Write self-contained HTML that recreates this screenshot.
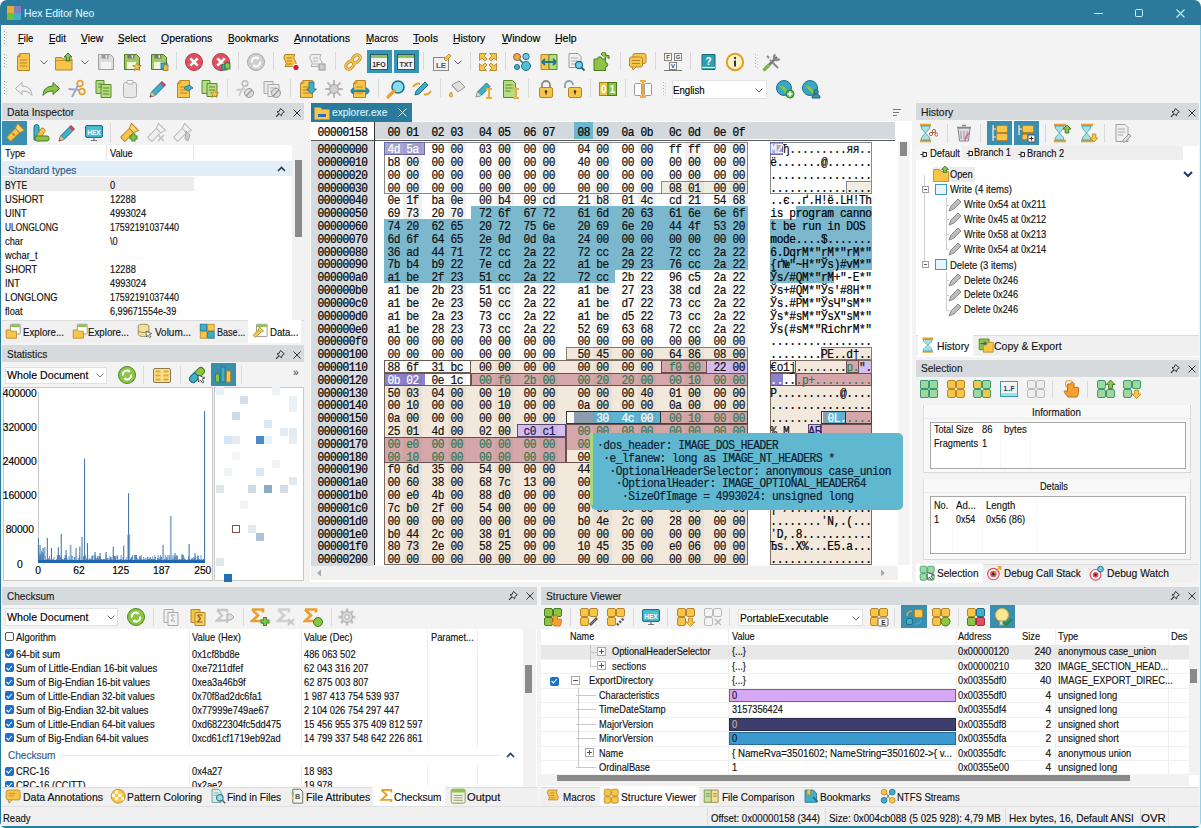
<!DOCTYPE html><html><head><meta charset="utf-8"><style>
*{margin:0;padding:0;box-sizing:border-box}
html{width:1201px;height:828px;overflow:hidden;background:#ffffff}
body{width:1201px;height:828px;overflow:hidden;background:#f3f3f3;position:relative;font-family:"Liberation Sans",sans-serif;border-radius:7px 7px 6px 6px}
.a{position:absolute}
.t{position:absolute;white-space:pre;line-height:14px;font-family:"Liberation Sans",sans-serif;letter-spacing:-0.25px;transform-origin:0 0;-webkit-text-stroke:0.15px currentColor}
.m{position:absolute;white-space:pre;line-height:13px;font-family:"Liberation Mono",monospace;font-size:11.2px;letter-spacing:-0.46px;-webkit-text-stroke:0.2px currentColor;transform:scaleY(1.08);transform-origin:0 0}
</style></head><body><div class="a" style="left:0px;top:0px;width:1201px;height:25px;background:#2c7a9b;"></div>
<div class="a" style="left:7px;top:6px;width:7px;height:7px;background:#e8a935;"></div>
<div class="a" style="left:7px;top:13px;width:7px;height:7px;background:#6ebf3a;"></div>
<div class="a" style="left:14px;top:6px;width:7px;height:7px;background:#7f7fc0;"></div>
<div class="a" style="left:14px;top:13px;width:7px;height:7px;background:#3bb0c8;"></div>
<div class="t" style="left:24px;top:5.50px;font-size:11.6px;color:#d6f3ff;letter-spacing:0;transform:scaleX(0.8932);">Hex Editor Neo</div>
<div class="a" style="left:1094px;top:12.5px;width:9px;height:1.2px;background:#c8f0ff;"></div>
<div class="a" style="left:1135.2px;top:8.8px;width:8.2px;height:8.2px;border:1.3px solid #c8f0ff;border-radius:1.5px"></div>
<svg class="a" style="left:1175.5px;top:8.5px" width="9" height="9"><path d="M0.5 0.5L8.5 8.5M8.5 0.5L0.5 8.5" stroke="#c8f0ff" stroke-width="1.1"/></svg>
<div class="a" style="left:0px;top:25px;width:1px;height:803px;background:#2c7a9b;"></div>
<div class="a" style="left:1200px;top:25px;width:1px;height:803px;background:#8fd3ea;"></div>
<div class="a" style="left:0px;top:826px;width:1201px;height:2px;background:#2c7a9b;"></div>
<div class="a" style="left:1px;top:25px;width:1199px;height:1px;background:#ffffff;"></div>
<div class="t" style="left:18px;top:31.00px;font-size:10.8px;color:#000;letter-spacing:0;transform:scaleX(0.8792);">File</div>
<div class="a" style="left:18px;top:42.5px;width:6px;height:1px;background:#000;"></div>
<div class="t" style="left:49px;top:31.00px;font-size:10.8px;color:#000;letter-spacing:0;transform:scaleX(0.9135);">Edit</div>
<div class="a" style="left:49px;top:42.5px;width:6px;height:1px;background:#000;"></div>
<div class="t" style="left:81px;top:31.00px;font-size:10.8px;color:#000;letter-spacing:0;transform:scaleX(0.9607);">View</div>
<div class="a" style="left:81px;top:42.5px;width:6px;height:1px;background:#000;"></div>
<div class="t" style="left:118px;top:31.00px;font-size:10.8px;color:#000;letter-spacing:0;transform:scaleX(0.9229);">Select</div>
<div class="a" style="left:118px;top:42.5px;width:6px;height:1px;background:#000;"></div>
<div class="t" style="left:161px;top:31.00px;font-size:10.8px;color:#000;letter-spacing:0;transform:scaleX(0.9711);">Operations</div>
<div class="a" style="left:161px;top:42.5px;width:6px;height:1px;background:#000;"></div>
<div class="t" style="left:227.5px;top:31.00px;font-size:10.8px;color:#000;letter-spacing:0;transform:scaleX(0.9368);">Bookmarks</div>
<div class="a" style="left:227.5px;top:42.5px;width:6px;height:1px;background:#000;"></div>
<div class="t" style="left:294px;top:31.00px;font-size:10.8px;color:#000;letter-spacing:0;transform:scaleX(0.9818);">Annotations</div>
<div class="a" style="left:294px;top:42.5px;width:6px;height:1px;background:#000;"></div>
<div class="t" style="left:365.5px;top:31.00px;font-size:10.8px;color:#000;letter-spacing:0;transform:scaleX(0.9123);">Macros</div>
<div class="a" style="left:365.5px;top:42.5px;width:6px;height:1px;background:#000;"></div>
<div class="t" style="left:413px;top:31.00px;font-size:10.8px;color:#000;letter-spacing:0;transform:scaleX(0.9916);">Tools</div>
<div class="a" style="left:413px;top:42.5px;width:6px;height:1px;background:#000;"></div>
<div class="t" style="left:453px;top:31.00px;font-size:10.8px;color:#000;letter-spacing:0;transform:scaleX(0.9613);">History</div>
<div class="a" style="left:453px;top:42.5px;width:6px;height:1px;background:#000;"></div>
<div class="t" style="left:501.5px;top:31.00px;font-size:10.8px;color:#000;letter-spacing:0;transform:scaleX(0.9971);">Window</div>
<div class="a" style="left:501.5px;top:42.5px;width:6px;height:1px;background:#000;"></div>
<div class="t" style="left:555px;top:31.00px;font-size:10.8px;color:#000;letter-spacing:0;transform:scaleX(0.9770);">Help</div>
<div class="a" style="left:555px;top:42.5px;width:6px;height:1px;background:#000;"></div>
<div class="a" style="left:4px;top:31px;width:1px;height:1px;background:#a0a0a0;"></div>
<div class="a" style="left:6px;top:32px;width:1px;height:1px;background:#c8c8c8;"></div>
<div class="a" style="left:4px;top:34px;width:1px;height:1px;background:#a0a0a0;"></div>
<div class="a" style="left:6px;top:35px;width:1px;height:1px;background:#c8c8c8;"></div>
<div class="a" style="left:4px;top:37px;width:1px;height:1px;background:#a0a0a0;"></div>
<div class="a" style="left:6px;top:38px;width:1px;height:1px;background:#c8c8c8;"></div>
<div class="a" style="left:4px;top:40px;width:1px;height:1px;background:#a0a0a0;"></div>
<div class="a" style="left:6px;top:41px;width:1px;height:1px;background:#c8c8c8;"></div>
<div class="a" style="left:4px;top:43px;width:1px;height:1px;background:#a0a0a0;"></div>
<div class="a" style="left:6px;top:44px;width:1px;height:1px;background:#c8c8c8;"></div>
<div class="a" style="left:4px;top:54px;width:1px;height:1px;background:#a0a0a0;"></div>
<div class="a" style="left:6px;top:55px;width:1px;height:1px;background:#c8c8c8;"></div>
<div class="a" style="left:4px;top:57px;width:1px;height:1px;background:#a0a0a0;"></div>
<div class="a" style="left:6px;top:58px;width:1px;height:1px;background:#c8c8c8;"></div>
<div class="a" style="left:4px;top:60px;width:1px;height:1px;background:#a0a0a0;"></div>
<div class="a" style="left:6px;top:61px;width:1px;height:1px;background:#c8c8c8;"></div>
<div class="a" style="left:4px;top:63px;width:1px;height:1px;background:#a0a0a0;"></div>
<div class="a" style="left:6px;top:64px;width:1px;height:1px;background:#c8c8c8;"></div>
<div class="a" style="left:4px;top:66px;width:1px;height:1px;background:#a0a0a0;"></div>
<div class="a" style="left:6px;top:67px;width:1px;height:1px;background:#c8c8c8;"></div>
<div class="a" style="left:4px;top:81px;width:1px;height:1px;background:#a0a0a0;"></div>
<div class="a" style="left:6px;top:82px;width:1px;height:1px;background:#c8c8c8;"></div>
<div class="a" style="left:4px;top:84px;width:1px;height:1px;background:#a0a0a0;"></div>
<div class="a" style="left:6px;top:85px;width:1px;height:1px;background:#c8c8c8;"></div>
<div class="a" style="left:4px;top:87px;width:1px;height:1px;background:#a0a0a0;"></div>
<div class="a" style="left:6px;top:88px;width:1px;height:1px;background:#c8c8c8;"></div>
<div class="a" style="left:4px;top:90px;width:1px;height:1px;background:#a0a0a0;"></div>
<div class="a" style="left:6px;top:91px;width:1px;height:1px;background:#c8c8c8;"></div>
<div class="a" style="left:4px;top:93px;width:1px;height:1px;background:#a0a0a0;"></div>
<div class="a" style="left:6px;top:94px;width:1px;height:1px;background:#c8c8c8;"></div>
<svg class="a" style="left:14px;top:52px" width="20.0" height="20.0" viewBox="0 0 20 20"><path d="M6 1.5h9.5v17h-12v-14z" fill="#f7c548" stroke="#b8862a" stroke-linejoin="round"/><path d="M3.5 4.5h2.5v-3" fill="none" stroke="#b8862a"/><path d="M6 8h7M6 11h7M6 14h7" stroke="#b8862a" stroke-width="1.1"/></svg>
<svg class="a" style="left:40px;top:60px" width="8" height="5"><path d="M0.5 0.5L4 4L7.5 0.5" stroke="#666" fill="none"/></svg>
<svg class="a" style="left:54px;top:52px" width="20.0" height="20.0" viewBox="0 0 20 20"><path d="M1.5 5.5h6l1.5 1.5h9v11h-16.5z" fill="#f7c548" stroke="#b8862a" stroke-linejoin="round"/><path d="M1.5 8.5h16.5" stroke="#b8862a" stroke-width="0.8"/><path d="M14 1l4 4h-2.3v4h-3.4v-4h-2.3z" fill="#8cc45a" stroke="#2f6a20" stroke-width="0.9"/></svg>
<svg class="a" style="left:80.5px;top:60px" width="8" height="5"><path d="M0.5 0.5L4 4L7.5 0.5" stroke="#666" fill="none"/></svg>
<svg class="a" style="left:95.5px;top:52px" width="20.0" height="20.0" viewBox="0 0 20 20"><path d="M2.5 2.5h12l3 3v12h-15z" fill="#dcdcdc" stroke="#a0a0a0" stroke-linejoin="round"/><rect x="5.5" y="2.5" width="7" height="4" fill="#9a9a9a"/><rect x="9.5" y="3.2" width="1.6" height="2.6" fill="#eee"/><rect x="5" y="10" width="10" height="7" fill="#f4f4f4"/></svg>
<svg class="a" style="left:122px;top:52px" width="20.0" height="20.0" viewBox="0 0 20 20"><path d="M2.5 2.5h12l3 3v12h-15z" fill="#9ccc5a" stroke="#4f7a2c" stroke-linejoin="round"/><rect x="5.5" y="2.5" width="7" height="4" fill="#777"/><rect x="9.5" y="3.2" width="1.6" height="2.6" fill="#eee"/><rect x="5" y="10" width="10" height="7" fill="#eef6e0"/><polygon points="15.0,10.5 13.8,13.4 10.7,13.6 13.1,15.6 12.4,18.6 15.0,17.0 17.6,18.6 16.9,15.6 19.3,13.6 16.2,13.4" fill="#f7c548" stroke="#b8862a" stroke-width="0.8"/></svg>
<svg class="a" style="left:149px;top:52px" width="20.0" height="20.0" viewBox="0 0 20 20"><path d="M2.5 2.5h12l3 3v12h-15z" fill="#9ccc5a" stroke="#4f7a2c" stroke-linejoin="round"/><rect x="5.5" y="2.5" width="7" height="4" fill="#777"/><rect x="9.5" y="3.2" width="1.6" height="2.6" fill="#eee"/><rect x="5" y="10" width="10" height="7" fill="#eef6e0"/><rect x="12" y="11" width="6" height="6" fill="#3fb0c8" stroke="#1f6f8a" stroke-width="0.8"/><rect x="14.5" y="13" width="4.5" height="5.5" fill="#e8c040" stroke="#a07020" stroke-width="0.8"/></svg>
<div class="a" style="left:175.5px;top:52px;width:1px;height:18px;background:#d8d8d8;"></div>
<svg class="a" style="left:184px;top:52px" width="20.0" height="20.0" viewBox="0 0 20 20"><circle cx="10" cy="10" r="8.5" fill="#e0505e" stroke="#b83848"/><path d="M6.3 6.3l7.4 7.4M13.7 6.3l-7.4 7.4" stroke="#fff" stroke-width="2.6"/></svg>
<svg class="a" style="left:210.5px;top:52px" width="20.0" height="20.0" viewBox="0 0 20 20"><circle cx="10" cy="10" r="8.5" fill="#e0505e" stroke="#b83848"/><path d="M6.3 6.3l7.4 7.4M13.7 6.3l-7.4 7.4" stroke="#fff" stroke-width="2.6"/><rect x="11" y="12" width="5" height="6" fill="#3fb0a0" stroke="#1f6f60" stroke-width="0.8"/><rect x="14" y="11" width="5" height="6" fill="#8cc45a" stroke="#2f6a20" stroke-width="0.8"/></svg>
<div class="a" style="left:237.5px;top:52px;width:1px;height:18px;background:#d8d8d8;"></div>
<svg class="a" style="left:246px;top:52px" width="20.0" height="20.0" viewBox="0 0 20 20"><circle cx="10" cy="10" r="8.5" fill="#cfcfcf" stroke="#a8a8a8"/><path d="M6 10.5a4 4 0 0 1 6.5-4M14 9.5a4 4 0 0 1-6.5 4" stroke="#fff" stroke-width="2" fill="none"/><path d="M12 4.5l1.5 2.5-3 .5zM8 15.5l-1.5-2.5 3-.5z" fill="#fff"/></svg>
<div class="a" style="left:273px;top:52px;width:1px;height:18px;background:#d8d8d8;"></div>
<svg class="a" style="left:281px;top:52px" width="20.0" height="20.0" viewBox="0 0 20 20"><path d="M4 2.5h10c-1.5 2-1.5 4 0 6s1.5 4 0 6h-10c1.5-2 1.5-4 0-6s-1.5-4 0-6z" fill="#f7c548" stroke="#b8862a"/><path d="M6 6h5M6 9h5M6 12h5" stroke="#b8862a"/><circle cx="15" cy="15.5" r="3.2" fill="#d02030" stroke="#fff"/></svg>
<svg class="a" style="left:307px;top:52px" width="20.0" height="20.0" viewBox="0 0 20 20"><path d="M4 2.5h10c-1.5 2-1.5 4 0 6s1.5 4 0 6h-10c1.5-2 1.5-4 0-6s-1.5-4 0-6z" fill="#eee" stroke="#b0b0b0"/><path d="M6 6h5M6 9h5M6 12h5" stroke="#b8b8b8"/><rect x="12" y="12" width="6" height="6" fill="#ccc" stroke="#999"/></svg>
<div class="a" style="left:335px;top:52px;width:1px;height:18px;background:#d8d8d8;"></div>
<svg class="a" style="left:342.5px;top:52px" width="20.0" height="20.0" viewBox="0 0 20 20"><g transform="rotate(-45 10 10)"><rect x="1" y="7" width="9" height="6" rx="3" fill="none" stroke="#b8862a" stroke-width="3"/><rect x="10" y="7" width="9" height="6" rx="3" fill="none" stroke="#b8862a" stroke-width="3"/><rect x="1" y="7" width="9" height="6" rx="3" fill="none" stroke="#f7c548" stroke-width="1.6"/><rect x="10" y="7" width="9" height="6" rx="3" fill="none" stroke="#f7c548" stroke-width="1.6"/></g></svg>
<div class="a" style="left:366.5px;top:50px;width:25px;height:23px;background:#3794b4;"></div>
<div class="a" style="left:393.5px;top:50px;width:25.5px;height:23px;background:#3794b4;"></div>
<svg class="a" style="left:369px;top:52px" width="20.0" height="20.0" viewBox="0 0 20 20"><rect x="1.5" y="2.5" width="17" height="15" fill="#f4f4f4" stroke="#2a5a6a"/><rect x="2" y="3" width="16" height="3" fill="#8cc45a"/><text x="10" y="14.5" font-size="7" font-family="Liberation Sans" font-weight="bold" fill="#333" text-anchor="middle">1FO</text></svg>
<svg class="a" style="left:396px;top:52px" width="20.0" height="20.0" viewBox="0 0 20 20"><rect x="1.5" y="2.5" width="17" height="15" fill="#f4f4f4" stroke="#2a5a6a"/><rect x="2" y="3" width="16" height="3" fill="#8cc45a"/><text x="10" y="14.5" font-size="7" font-family="Liberation Sans" font-weight="bold" fill="#333" text-anchor="middle">TXT</text></svg>
<div class="a" style="left:423px;top:52px;width:1px;height:18px;background:#d8d8d8;"></div>
<svg class="a" style="left:431.5px;top:52px" width="20.0" height="20.0" viewBox="0 0 20 20"><rect x="1.5" y="5.5" width="15" height="13" fill="#f2f2f2" stroke="#8a8a8a"/><text x="9" y="15.5" font-size="8" font-family="Liberation Sans" font-weight="bold" fill="#555" text-anchor="middle">LE</text><path d="M12 7l5-5 2 2-5 5z" fill="#f7c548" stroke="#b8862a" stroke-width="0.8"/></svg>
<svg class="a" style="left:454px;top:60px" width="8" height="5"><path d="M0.5 0.5L4 4L7.5 0.5" stroke="#666" fill="none"/></svg>
<div class="a" style="left:470px;top:52px;width:1px;height:18px;background:#d8d8d8;"></div>
<svg class="a" style="left:477.5px;top:52px" width="20.0" height="20.0" viewBox="0 0 20 20"><g fill="#f7c548" stroke="#b8862a" stroke-width="0.9"><path d="M1.5 1.5h7l-2.5 2.5 3 3-2 2-3-3-2.5 2.5z"/><path d="M18.5 1.5v7l-2.5-2.5-3 3-2-2 3-3-2.5-2.5z"/><path d="M1.5 18.5v-7l2.5 2.5 3-3 2 2-3 3 2.5 2.5z"/><path d="M18.5 18.5h-7l2.5-2.5-3-3 2-2 3 3 2.5-2.5z"/></g></svg>
<div class="a" style="left:505px;top:52px;width:1px;height:18px;background:#d8d8d8;"></div>
<svg class="a" style="left:512px;top:52px" width="20.0" height="20.0" viewBox="0 0 20 20"><path d="M5 5l10 10" stroke="#1f6f8a" stroke-width="1.6"/><circle cx="5" cy="5" r="3.5" fill="#f0a850" stroke="#a06020"/><circle cx="14" cy="4.5" r="3.2" fill="#70c8e0" stroke="#1f6f8a"/><circle cx="14" cy="14" r="4.5" fill="#50c0d8" stroke="#1f6f8a"/><circle cx="5" cy="15" r="2.5" fill="#3fb0c8" stroke="#1f6f8a"/></svg>
<svg class="a" style="left:539px;top:52px" width="20.0" height="20.0" viewBox="0 0 20 20"><path d="M2 2.5h8v15h-8z" fill="#f7c548" stroke="#b8862a"/><path d="M10 2.5h8v15h-8z" fill="#b8dc80" stroke="#5a8a30"/><path d="M3 10h14M3 10l3-3M3 10l3 3M17 10l-3-3M17 10l-3 3" stroke="#1f7a8a" stroke-width="1.8" fill="none"/></svg>
<svg class="a" style="left:566px;top:52px" width="20.0" height="20.0" viewBox="0 0 20 20"><path d="M3 1.5h9l3 3v11h-12z" fill="#f0f0f0" stroke="#9a9a9a"/><path d="M5 6h7M5 9h7M5 12h4" stroke="#aaa"/><circle cx="13" cy="13" r="3.5" fill="#70d0e8" stroke="#1f6f8a" stroke-width="1.3"/><path d="M15.5 15.5l3 3" stroke="#555" stroke-width="1.8"/></svg>
<svg class="a" style="left:592px;top:52px" width="20.0" height="20.0" viewBox="0 0 20 20"><path d="M2 7h3.5a2.2 2.2 0 1 1 4.4 0h3.6v3.5a2.2 2.2 0 1 1 0 4.4v3.6h-11.5zM13.5 7v-3.5h-3.5" fill="#8cc445" stroke="#4a7a20"/><path d="M10 3.5a2.2 2.2 0 1 1 3.5 0h3.5v3.5" fill="#8cc445" stroke="#4a7a20"/></svg>
<div class="a" style="left:620px;top:52px;width:1px;height:18px;background:#d8d8d8;"></div>
<svg class="a" style="left:628px;top:52px" width="20.0" height="20.0" viewBox="0 0 20 20"><rect x="5" y="1.5" width="13" height="10" rx="2" fill="#f7c548" stroke="#b8862a"/><rect x="1.5" y="5" width="13" height="10" rx="2" fill="#f7c548" stroke="#b8862a"/><path d="M4 15l1 3 3-3" fill="#f7c548" stroke="#b8862a"/><path d="M4 8.5h8M4 11.5h8" stroke="#b8862a"/></svg>
<div class="a" style="left:655px;top:52px;width:1px;height:18px;background:#d8d8d8;"></div>
<svg class="a" style="left:663px;top:52px" width="20.0" height="20.0" viewBox="0 0 20 20"><g fill="#fafafa" stroke="#777" stroke-width="0.9"><rect x="1.5" y="1.5" width="7" height="7"/><rect x="11.5" y="1.5" width="7" height="7"/><rect x="6.5" y="10.5" width="7" height="7"/></g><g font-size="6" font-family="Liberation Sans" font-weight="bold" fill="#444" text-anchor="middle"><text x="5" y="7.2">F</text><text x="15" y="7.2">G</text><text x="10" y="16.2">V</text></g><path d="M1 18.5h18" stroke="#777"/></svg>
<div class="a" style="left:690px;top:52px;width:1px;height:18px;background:#d8d8d8;"></div>
<svg class="a" style="left:698.5px;top:52px" width="20.0" height="20.0" viewBox="0 0 20 20"><path d="M3 2.5h13v15h-13z" fill="#2ea0b0" stroke="#176a78"/><path d="M3 15.5h13" stroke="#e8f8f8" stroke-width="1.2"/><text x="9.5" y="12.5" font-size="10" font-family="Liberation Sans" font-weight="bold" fill="#fff" text-anchor="middle">?</text></svg>
<svg class="a" style="left:725px;top:52px" width="20.0" height="20.0" viewBox="0 0 20 20"><circle cx="10" cy="10" r="8.2" fill="#fff3c8" stroke="#e0a020" stroke-width="2"/><rect x="9" y="8.5" width="2" height="6" fill="#334"/><circle cx="10" cy="6" r="1.2" fill="#334"/></svg>
<div class="a" style="left:755px;top:54px;width:1px;height:1px;background:#b0b0b0;"></div>
<div class="a" style="left:757px;top:55px;width:1px;height:1px;background:#d0d0d0;"></div>
<div class="a" style="left:755px;top:57px;width:1px;height:1px;background:#b0b0b0;"></div>
<div class="a" style="left:757px;top:58px;width:1px;height:1px;background:#d0d0d0;"></div>
<div class="a" style="left:755px;top:60px;width:1px;height:1px;background:#b0b0b0;"></div>
<div class="a" style="left:757px;top:61px;width:1px;height:1px;background:#d0d0d0;"></div>
<div class="a" style="left:755px;top:63px;width:1px;height:1px;background:#b0b0b0;"></div>
<div class="a" style="left:757px;top:64px;width:1px;height:1px;background:#d0d0d0;"></div>
<div class="a" style="left:755px;top:66px;width:1px;height:1px;background:#b0b0b0;"></div>
<div class="a" style="left:757px;top:67px;width:1px;height:1px;background:#d0d0d0;"></div>
<svg class="a" style="left:762px;top:52px" width="20.0" height="20.0" viewBox="0 0 20 20"><path d="M4 16L15 5" stroke="#777" stroke-width="2.5"/><path d="M13.5 2.5a3 3 0 1 0 4 4" fill="none" stroke="#888" stroke-width="2"/><path d="M16 16L8 8" stroke="#888" stroke-width="2"/><path d="M2.5 17.5l4-4" stroke="#7ab848" stroke-width="3.5" stroke-linecap="round"/><path d="M5 4l2 2" stroke="#888" stroke-width="2"/></svg>
<svg class="a" style="left:14px;top:79px" width="20.0" height="20.0" viewBox="0 0 20 20"><path d="M1.5 9.5l6.5-6v3.5c5 0 9.5 2.5 10 9.5-2-3-5.5-4.5-10-4.5v3.5z" fill="#f2f2f2" stroke="#b0b0b0" stroke-linejoin="round"/></svg>
<svg class="a" style="left:40.5px;top:79px" width="20.0" height="20.0" viewBox="0 0 20 20"><path d="M18.5 9.5l-6.5-6v3.5c-5 0-9.5 2.5-10 9.5 2-3 5.5-4.5 10-4.5v3.5z" fill="#8cc445" stroke="#3f7a20" stroke-linejoin="round"/></svg>
<svg class="a" style="left:66.5px;top:79px" width="20.0" height="20.0" viewBox="0 0 20 20"><circle cx="13" cy="4.5" r="2.8" fill="none" stroke="#e8a030" stroke-width="1.8"/><circle cx="15" cy="12.5" r="2.8" fill="none" stroke="#e8a030" stroke-width="1.8"/><path d="M11 6.5L5 18M12.5 11L1.5 10" stroke="#9aaacc" stroke-width="2"/></svg>
<svg class="a" style="left:94px;top:79px" width="20.0" height="20.0" viewBox="0 0 20 20"><path d="M2 1.5h8v13h-8z" fill="#b8dc80" stroke="#5a8a30"/><path d="M7 5.5h10v13h-10z" fill="#b8dc80" stroke="#5a8a30"/><path d="M4 5h4M4 8h4M9 9h6M9 12h6M9 15h6" stroke="#5a8a30"/></svg>
<svg class="a" style="left:120px;top:79px" width="20.0" height="20.0" viewBox="0 0 20 20"><rect x="3.5" y="3.5" width="13" height="15" rx="2" fill="#e8e8e8" stroke="#b0b0b0"/><rect x="7" y="1.5" width="6" height="3.5" rx="1" fill="#f8f8f8" stroke="#b0b0b0"/></svg>
<svg class="a" style="left:147.5px;top:79px" width="20.0" height="20.0" viewBox="0 0 20 20"><path d="M2 18l1.5-5 10.5-10.5 3.5 3.5-10.5 10.5z" fill="#3fb0c8" stroke="#1f6f8a"/><path d="M2 18l1.5-5 3.5 3.5z" fill="#f0d0a0" stroke="#b08050" stroke-width="0.6"/><path d="M13 3.5l3.5 3.5" stroke="#e04050" stroke-width="2.5"/><path d="M1.8 18.2l1-2.4 1.4 1.4z" fill="#d02030"/></svg>
<svg class="a" style="left:174px;top:79px" width="20.0" height="20.0" viewBox="0 0 20 20"><path d="M6 1.5h9.5v17h-12v-14z" fill="#f7c548" stroke="#b8862a" stroke-linejoin="round"/><path d="M3.5 4.5h2.5v-3" fill="none" stroke="#b8862a"/><path d="M6 8h7M6 11h7M6 14h7" stroke="#b8862a" stroke-width="1.1"/><path d="M10 9l5-3 4 3-5 3z" fill="#3fb0c8" stroke="#1f6f8a" stroke-width="0.8"/></svg>
<svg class="a" style="left:199.5px;top:79px" width="20.0" height="20.0" viewBox="0 0 20 20"><path d="M2 1.5h8v13h-8z" fill="#b8dc80" stroke="#5a8a30"/><path d="M7 4.5h10v13h-10z" fill="#b8dc80" stroke="#5a8a30"/><path d="M9 8h6M9 11h6" stroke="#5a8a30"/><polygon points="14.5,10.8 13.4,13.5 10.5,13.7 12.7,15.6 12.0,18.4 14.5,16.9 17.0,18.4 16.3,15.6 18.5,13.7 15.6,13.5" fill="#f7c548" stroke="#b8862a" stroke-width="0.8"/></svg>
<div class="a" style="left:226.5px;top:79px;width:1px;height:18px;background:#d8d8d8;"></div>
<svg class="a" style="left:234.5px;top:79px" width="20.0" height="20.0" viewBox="0 0 20 20"><circle cx="10" cy="4.5" r="2.8" fill="none" stroke="#bbb" stroke-width="1.6"/><path d="M9 7L4 17M10 10L1.5 11" stroke="#ccc" stroke-width="1.8"/><circle cx="14" cy="14" r="4.5" fill="#ddd" stroke="#999"/><path d="M11 17l6-6" stroke="#999" stroke-width="1.2"/></svg>
<svg class="a" style="left:261.5px;top:79px" width="20.0" height="20.0" viewBox="0 0 20 20"><path d="M2 2.5h9v12h-9z" fill="#e8e8e8" stroke="#a8a8a8"/><path d="M6 5.5h11v12h-11z" fill="#eee" stroke="#a8a8a8"/><path d="M8 9h7M8 12h4" stroke="#aaa"/><circle cx="14" cy="14" r="4.5" fill="#ddd" stroke="#999"/><path d="M11 17l6-6" stroke="#999" stroke-width="1.2"/></svg>
<div class="a" style="left:290px;top:79px;width:1px;height:18px;background:#d8d8d8;"></div>
<svg class="a" style="left:297px;top:79px" width="20.0" height="20.0" viewBox="0 0 20 20"><path d="M6 1.5h9.5v17h-12v-14z" fill="#f7c548" stroke="#b8862a" stroke-linejoin="round"/><path d="M3.5 4.5h2.5v-3" fill="none" stroke="#b8862a"/><path d="M6 8h7M6 11h7M6 14h7" stroke="#b8862a" stroke-width="1.1"/><path d="M12 3h5v7h2.5l-5 5-5-5h2.5z" fill="#3fb0c8" stroke="#1f6f8a" stroke-width="0.8"/></svg>
<svg class="a" style="left:323.5px;top:79px" width="20.0" height="20.0" viewBox="0 0 20 20"><g stroke="#b8b8b8" stroke-width="2"><path d="M10 1v18M1 10h18M3.5 3.5l13 13M16.5 3.5l-13 13"/></g><circle cx="10" cy="10" r="4.5" fill="#d0d0d0" stroke="#a0a0a0"/></svg>
<svg class="a" style="left:350px;top:79px" width="20.0" height="20.0" viewBox="0 0 20 20"><path d="M6 1.5h9.5v17h-12v-14z" fill="#f7c548" stroke="#b8862a" stroke-linejoin="round"/><path d="M3.5 4.5h2.5v-3" fill="none" stroke="#b8862a"/><path d="M6 8h7M6 11h7M6 14h7" stroke="#b8862a" stroke-width="1.1"/><path d="M1 12h18M1 12l3-3M1 12l3 3M19 12l-3-3M19 12l-3 3" stroke="#1f8aa0" stroke-width="2" fill="none"/></svg>
<div class="a" style="left:378px;top:79px;width:1px;height:18px;background:#d8d8d8;"></div>
<svg class="a" style="left:386px;top:79px" width="20.0" height="20.0" viewBox="0 0 20 20"><circle cx="12" cy="8" r="6" fill="#88dcec" stroke="#1f6f8a" stroke-width="1.6"/><path d="M8 12l-6 6" stroke="#e8a030" stroke-width="3.2" stroke-linecap="round"/></svg>
<svg class="a" style="left:411.5px;top:79px" width="20.0" height="20.0" viewBox="0 0 20 20"><path d="M3 16l1-4 9-9 3 3-9 9z" fill="#3fb0c8" stroke="#1f6f8a"/><path d="M1 8c2-3 5-4 7-3M19 12c-2 3-5 4-7 3" stroke="#e8a030" stroke-width="2" fill="none"/></svg>
<div class="a" style="left:440px;top:79px;width:1px;height:18px;background:#d8d8d8;"></div>
<svg class="a" style="left:446.5px;top:79px" width="20.0" height="20.0" viewBox="0 0 20 20"><path d="M5 6l7-4 6 6-7 5z" fill="#e0e0e0" stroke="#999"/><path d="M5 6l6 7" stroke="#999"/><path d="M4 13c-2 3-2 5 0 5s2-2 0-5z" fill="#f7c548" stroke="#b8862a" stroke-width="0.8"/></svg>
<svg class="a" style="left:473.5px;top:79px" width="20.0" height="20.0" viewBox="0 0 20 20"><path d="M2 18l1.5-5 9-9 3.5 3.5-9 9z" fill="#3fb0c8" stroke="#1f6f8a"/><path d="M2 18l1.5-5 3.5 3.5z" fill="#f0d0a0"/><path d="M12 10h6M12 19h6M15 10v9" stroke="#e8b040" stroke-width="2.2"/></svg>
<svg class="a" style="left:500.5px;top:79px" width="20.0" height="20.0" viewBox="0 0 20 20"><path d="M2.5 1.5h9l3 3v14h-12z" fill="#b8dc80" stroke="#5a8a30"/><path d="M4.5 6h7M4.5 9h7M4.5 12h5" stroke="#5a8a30"/><path d="M12 10h6M12 19h6M15 10v9" stroke="#e8b040" stroke-width="2.2"/></svg>
<div class="a" style="left:528px;top:79px;width:1px;height:18px;background:#d8d8d8;"></div>
<svg class="a" style="left:536px;top:79px" width="20.0" height="20.0" viewBox="0 0 20 20"><path d="M6 9V6a4 4 0 0 1 8 0v3" stroke="#8a8a8a" stroke-width="1.8" fill="none"/><rect x="3.5" y="8.5" width="13" height="10" rx="1.5" fill="#f7c548" stroke="#b8862a"/><circle cx="10" cy="12.5" r="1.3" fill="#333"/><rect x="9.4" y="12.5" width="1.2" height="3" fill="#333"/></svg>
<svg class="a" style="left:562.5px;top:79px" width="20.0" height="20.0" viewBox="0 0 20 20"><path d="M2 9V6a4 4 0 0 1 8 0" stroke="#8aa0b0" stroke-width="1.8" fill="none"/><rect x="5.5" y="8.5" width="13" height="10" rx="1.5" fill="#f7c548" stroke="#b8862a"/><circle cx="12" cy="12.5" r="1.3" fill="#333"/><rect x="11.4" y="12.5" width="1.2" height="3" fill="#333"/></svg>
<div class="a" style="left:590px;top:79px;width:1px;height:18px;background:#d8d8d8;"></div>
<svg class="a" style="left:597.5px;top:79px" width="20.0" height="20.0" viewBox="0 0 20 20"><rect x="1.5" y="3.5" width="8.5" height="13" fill="#e8c840" stroke="#a08820"/><rect x="10" y="3.5" width="8.5" height="13" fill="#8cc445" stroke="#4a7a20"/><text x="5.8" y="14" font-size="10" font-family="Liberation Sans" font-weight="bold" fill="#fff" text-anchor="middle">0</text><text x="14.2" y="14" font-size="10" font-family="Liberation Sans" font-weight="bold" fill="#fff" text-anchor="middle">1</text></svg>
<div class="a" style="left:625px;top:79px;width:1px;height:18px;background:#d8d8d8;"></div>
<svg class="a" style="left:632.5px;top:79px" width="20.0" height="20.0" viewBox="0 0 20 20"><rect x="1.5" y="4.5" width="7" height="12" rx="1" fill="#fff" stroke="#999"/><rect x="11.5" y="4.5" width="7" height="12" rx="1" fill="#fff" stroke="#999"/><path d="M7 2h6M7 18h6M10 2v16" stroke="#e8b040" stroke-width="2.2"/></svg>
<div class="a" style="left:663px;top:82px;width:1px;height:1px;background:#b0b0b0;"></div>
<div class="a" style="left:665px;top:83px;width:1px;height:1px;background:#d0d0d0;"></div>
<div class="a" style="left:663px;top:85px;width:1px;height:1px;background:#b0b0b0;"></div>
<div class="a" style="left:665px;top:86px;width:1px;height:1px;background:#d0d0d0;"></div>
<div class="a" style="left:663px;top:88px;width:1px;height:1px;background:#b0b0b0;"></div>
<div class="a" style="left:665px;top:89px;width:1px;height:1px;background:#d0d0d0;"></div>
<div class="a" style="left:663px;top:91px;width:1px;height:1px;background:#b0b0b0;"></div>
<div class="a" style="left:665px;top:92px;width:1px;height:1px;background:#d0d0d0;"></div>
<div class="a" style="left:663px;top:94px;width:1px;height:1px;background:#b0b0b0;"></div>
<div class="a" style="left:665px;top:95px;width:1px;height:1px;background:#d0d0d0;"></div>
<div class="a" style="left:671.5px;top:80px;width:95px;height:19px;background:#fff;border:1px solid #e4e4e4"></div>
<div class="t" style="left:673.3px;top:82.50px;font-size:10.8px;color:#000;letter-spacing:0;transform:scaleX(0.8950);">English</div>
<svg class="a" style="left:754.5px;top:87.5px" width="8" height="5"><path d="M0.5 0.5L4 4L7.5 0.5" stroke="#666" fill="none"/></svg>
<svg class="a" style="left:774.5px;top:79px" width="20.0" height="20.0" viewBox="0 0 20 20"><circle cx="9" cy="9" r="7.5" fill="#3aa7c4" stroke="#1f6f8a"/><path d="M3.5 6c2 0 3 2 5 1.5s1.5 3.5 3.5 3.5 1 3 0 4.5" fill="#8cc445"/><circle cx="15" cy="15" r="4" fill="#5bbf50" stroke="#2f7a20"/><path d="M15 12.5v5M12.5 15h5" stroke="#fff" stroke-width="1.6"/></svg>
<svg class="a" style="left:801px;top:79px" width="20.0" height="20.0" viewBox="0 0 20 20"><circle cx="9" cy="9" r="7.5" fill="#3aa7c4" stroke="#1f6f8a"/><path d="M3.5 6c2 0 3 2 5 1.5s1.5 3.5 3.5 3.5 1 3 0 4.5" fill="#8cc445"/><circle cx="15" cy="13" r="2.3" fill="#3a90b8" stroke="#1f5f7a"/><path d="M11 19c0-3 2-4 4-4s4 1 4 4z" fill="#3a90b8" stroke="#1f5f7a"/></svg>
<div class="a" style="left:310px;top:121px;width:602px;height:461px;background:#ffffff;"></div>
<div class="a" style="left:311px;top:103px;width:101px;height:19px;background:#2a7b9b;"></div>
<svg class="a" style="left:313px;top:103px" width="20" height="20" viewBox="0 0 20 20"><path d="M1.5 4.5h6l1.5 2h7.5v10h-15z" fill="#f7c548" stroke="none"/></svg>
<div class="a" style="left:318px;top:114px;width:8px;height:3px;background:#2a70c0;"></div>
<div class="t" style="left:332px;top:105.00px;font-size:10.8px;color:#d8f4ff;letter-spacing:0;transform:scaleX(0.9400);">explorer.exe</div>
<svg class="a" style="left:398px;top:108px" width="9" height="9"><path d="M0.5 0.5L8.5 8.5M8.5 0.5L0.5 8.5" stroke="#d8f4ff" stroke-width="1"/></svg>
<div class="a" style="left:893px;top:109px;width:8px;height:1px;background:#777;"></div>
<div class="a" style="left:893px;top:112px;width:6px;height:1px;background:#777;"></div>
<div class="a" style="left:893px;top:115px;width:4px;height:1px;background:#777;"></div>
<div class="a" style="left:311px;top:122px;width:63px;height:17px;background:#ffffff;"></div>
<div class="a" style="left:375px;top:122px;width:520px;height:17px;background:#d3d9dc;"></div>
<div class="a" style="left:574px;top:122px;width:18.5px;height:17px;background:#6cb7cc;"></div>
<div class="a" style="left:311px;top:139.5px;width:584px;height:1.6px;background:#5a5a5a;"></div>
<div class="a" style="left:374px;top:122px;width:1.2px;height:443px;background:#333;"></div>
<div class="a" style="left:311px;top:141px;width:63px;height:424.5px;background:#d5dbdf;"></div>
<div class="a" style="left:403.3px;top:141px;width:18.5px;height:424px;background:#f1f1f1;"></div>
<div class="a" style="left:447.5px;top:141px;width:18.5px;height:424px;background:#f1f1f1;"></div>
<div class="a" style="left:495.0px;top:141px;width:18.5px;height:424px;background:#f1f1f1;"></div>
<div class="a" style="left:539.4px;top:141px;width:18.5px;height:424px;background:#f1f1f1;"></div>
<div class="a" style="left:593.3px;top:141px;width:18.5px;height:424px;background:#f1f1f1;"></div>
<div class="a" style="left:637.5px;top:141px;width:18.5px;height:424px;background:#f1f1f1;"></div>
<div class="a" style="left:685.0px;top:141px;width:18.5px;height:424px;background:#f1f1f1;"></div>
<div class="a" style="left:729.4px;top:141px;width:18.5px;height:424px;background:#f1f1f1;"></div>
<div class="a" style="left:384.0px;top:142.3px;width:41.25px;height:12.86px;background:#a6a6d6;"></div>
<div class="a" style="left:403.3px;top:142.3px;width:18.5px;height:12.86px;background:rgba(60,40,0,0.035);"></div>
<div class="a" style="left:770.3px;top:142.3px;width:12.68px;height:12.86px;background:#a6a6d6;"></div>
<div class="a" style="left:471.05px;top:206.35px;width:276.85px;height:12.86px;background:#7bb8cd;"></div>
<div class="a" style="left:795.66px;top:206.35px;width:76.08px;height:12.86px;background:#7bb8cd;"></div>
<div class="a" style="left:384.0px;top:219.16px;width:363.9px;height:12.86px;background:#7bb8cd;"></div>
<div class="a" style="left:770.3px;top:219.16px;width:101.44px;height:12.86px;background:#7bb8cd;"></div>
<div class="a" style="left:384.0px;top:231.97px;width:363.9px;height:12.86px;background:#7bb8cd;"></div>
<div class="a" style="left:770.3px;top:231.97px;width:101.44px;height:12.86px;background:#7bb8cd;"></div>
<div class="a" style="left:384.0px;top:244.78px;width:363.9px;height:12.86px;background:#7bb8cd;"></div>
<div class="a" style="left:770.3px;top:244.78px;width:101.44px;height:12.86px;background:#7bb8cd;"></div>
<div class="a" style="left:384.0px;top:257.59px;width:363.9px;height:12.86px;background:#7bb8cd;"></div>
<div class="a" style="left:770.3px;top:257.59px;width:101.44px;height:12.86px;background:#7bb8cd;"></div>
<div class="a" style="left:384.0px;top:270.4px;width:231.25px;height:12.86px;background:#7bb8cd;"></div>
<div class="a" style="left:770.3px;top:270.4px;width:63.4px;height:12.86px;background:#7bb8cd;"></div>
<div class="a" style="left:661.05px;top:180.73px;width:86.85px;height:12.86px;background:#efeee2;"></div>
<div class="a" style="left:685.0px;top:180.73px;width:18.5px;height:12.86px;background:rgba(60,40,0,0.035);"></div>
<div class="a" style="left:729.4px;top:180.73px;width:18.5px;height:12.86px;background:rgba(60,40,0,0.035);"></div>
<div class="a" style="left:846.38px;top:180.73px;width:25.36px;height:12.86px;background:#efeee2;"></div>
<div class="a" style="left:566.25px;top:347.26px;width:181.65px;height:12.86px;background:#f2e8dc;"></div>
<div class="a" style="left:593.3px;top:347.26px;width:18.5px;height:12.86px;background:rgba(60,40,0,0.035);"></div>
<div class="a" style="left:637.5px;top:347.26px;width:18.5px;height:12.86px;background:rgba(60,40,0,0.035);"></div>
<div class="a" style="left:685.0px;top:347.26px;width:18.5px;height:12.86px;background:rgba(60,40,0,0.035);"></div>
<div class="a" style="left:729.4px;top:347.26px;width:18.5px;height:12.86px;background:rgba(60,40,0,0.035);"></div>
<div class="a" style="left:821.02px;top:347.26px;width:50.72px;height:12.86px;background:#f2e8dc;"></div>
<div class="a" style="left:384.0px;top:360.07px;width:87.05px;height:12.86px;background:#ffffff;"></div>
<div class="a" style="left:403.3px;top:360.07px;width:18.5px;height:12.86px;background:rgba(60,40,0,0.035);"></div>
<div class="a" style="left:447.5px;top:360.07px;width:18.5px;height:12.86px;background:rgba(60,40,0,0.035);"></div>
<div class="a" style="left:770.3px;top:360.07px;width:25.36px;height:12.86px;background:#ffffff;"></div>
<div class="a" style="left:471.05px;top:360.07px;width:190.0px;height:12.86px;background:#f2e8dc;"></div>
<div class="a" style="left:495.0px;top:360.07px;width:18.5px;height:12.86px;background:rgba(60,40,0,0.035);"></div>
<div class="a" style="left:539.4px;top:360.07px;width:18.5px;height:12.86px;background:rgba(60,40,0,0.035);"></div>
<div class="a" style="left:593.3px;top:360.07px;width:18.5px;height:12.86px;background:rgba(60,40,0,0.035);"></div>
<div class="a" style="left:637.5px;top:360.07px;width:18.5px;height:12.86px;background:rgba(60,40,0,0.035);"></div>
<div class="a" style="left:795.66px;top:360.07px;width:50.72px;height:12.86px;background:#f2e8dc;"></div>
<div class="a" style="left:661.05px;top:360.07px;width:46.05px;height:12.86px;background:#d5a7ab;"></div>
<div class="a" style="left:685.0px;top:360.07px;width:18.5px;height:12.86px;background:rgba(60,40,0,0.035);"></div>
<div class="a" style="left:846.38px;top:360.07px;width:12.68px;height:12.86px;background:#d5a7ab;"></div>
<div class="a" style="left:707.1px;top:360.07px;width:40.8px;height:12.86px;background:#d4bdf0;"></div>
<div class="a" style="left:729.4px;top:360.07px;width:18.5px;height:12.86px;background:rgba(60,40,0,0.035);"></div>
<div class="a" style="left:859.06px;top:360.07px;width:12.68px;height:12.86px;background:#d4bdf0;"></div>
<div class="a" style="left:384.0px;top:372.88px;width:41.25px;height:12.86px;background:#8a82cc;"></div>
<div class="a" style="left:403.3px;top:372.88px;width:18.5px;height:12.86px;background:rgba(60,40,0,0.035);"></div>
<div class="a" style="left:770.3px;top:372.88px;width:12.68px;height:12.86px;background:#8a82cc;"></div>
<div class="a" style="left:425.25px;top:372.88px;width:45.8px;height:12.86px;background:#ffffff;"></div>
<div class="a" style="left:447.5px;top:372.88px;width:18.5px;height:12.86px;background:rgba(60,40,0,0.035);"></div>
<div class="a" style="left:782.98px;top:372.88px;width:12.68px;height:12.86px;background:#ffffff;"></div>
<div class="a" style="left:471.05px;top:372.88px;width:276.85px;height:12.86px;background:#d5a7ab;"></div>
<div class="a" style="left:495.0px;top:372.88px;width:18.5px;height:12.86px;background:rgba(60,40,0,0.035);"></div>
<div class="a" style="left:539.4px;top:372.88px;width:18.5px;height:12.86px;background:rgba(60,40,0,0.035);"></div>
<div class="a" style="left:593.3px;top:372.88px;width:18.5px;height:12.86px;background:rgba(60,40,0,0.035);"></div>
<div class="a" style="left:637.5px;top:372.88px;width:18.5px;height:12.86px;background:rgba(60,40,0,0.035);"></div>
<div class="a" style="left:685.0px;top:372.88px;width:18.5px;height:12.86px;background:rgba(60,40,0,0.035);"></div>
<div class="a" style="left:729.4px;top:372.88px;width:18.5px;height:12.86px;background:rgba(60,40,0,0.035);"></div>
<div class="a" style="left:795.66px;top:372.88px;width:76.08px;height:12.86px;background:#d5a7ab;"></div>
<div class="a" style="left:384.0px;top:385.69px;width:363.9px;height:12.86px;background:#f2e8dc;"></div>
<div class="a" style="left:403.3px;top:385.69px;width:18.5px;height:12.86px;background:rgba(60,40,0,0.035);"></div>
<div class="a" style="left:447.5px;top:385.69px;width:18.5px;height:12.86px;background:rgba(60,40,0,0.035);"></div>
<div class="a" style="left:495.0px;top:385.69px;width:18.5px;height:12.86px;background:rgba(60,40,0,0.035);"></div>
<div class="a" style="left:539.4px;top:385.69px;width:18.5px;height:12.86px;background:rgba(60,40,0,0.035);"></div>
<div class="a" style="left:593.3px;top:385.69px;width:18.5px;height:12.86px;background:rgba(60,40,0,0.035);"></div>
<div class="a" style="left:637.5px;top:385.69px;width:18.5px;height:12.86px;background:rgba(60,40,0,0.035);"></div>
<div class="a" style="left:685.0px;top:385.69px;width:18.5px;height:12.86px;background:rgba(60,40,0,0.035);"></div>
<div class="a" style="left:729.4px;top:385.69px;width:18.5px;height:12.86px;background:rgba(60,40,0,0.035);"></div>
<div class="a" style="left:770.3px;top:385.69px;width:101.44px;height:12.86px;background:#f2e8dc;"></div>
<div class="a" style="left:384.0px;top:398.5px;width:363.9px;height:12.86px;background:#f2e8dc;"></div>
<div class="a" style="left:403.3px;top:398.5px;width:18.5px;height:12.86px;background:rgba(60,40,0,0.035);"></div>
<div class="a" style="left:447.5px;top:398.5px;width:18.5px;height:12.86px;background:rgba(60,40,0,0.035);"></div>
<div class="a" style="left:495.0px;top:398.5px;width:18.5px;height:12.86px;background:rgba(60,40,0,0.035);"></div>
<div class="a" style="left:539.4px;top:398.5px;width:18.5px;height:12.86px;background:rgba(60,40,0,0.035);"></div>
<div class="a" style="left:593.3px;top:398.5px;width:18.5px;height:12.86px;background:rgba(60,40,0,0.035);"></div>
<div class="a" style="left:637.5px;top:398.5px;width:18.5px;height:12.86px;background:rgba(60,40,0,0.035);"></div>
<div class="a" style="left:685.0px;top:398.5px;width:18.5px;height:12.86px;background:rgba(60,40,0,0.035);"></div>
<div class="a" style="left:729.4px;top:398.5px;width:18.5px;height:12.86px;background:rgba(60,40,0,0.035);"></div>
<div class="a" style="left:770.3px;top:398.5px;width:101.44px;height:12.86px;background:#f2e8dc;"></div>
<div class="a" style="left:384.0px;top:411.31px;width:182.25px;height:12.86px;background:#f2e8dc;"></div>
<div class="a" style="left:403.3px;top:411.31px;width:18.5px;height:12.86px;background:rgba(60,40,0,0.035);"></div>
<div class="a" style="left:447.5px;top:411.31px;width:18.5px;height:12.86px;background:rgba(60,40,0,0.035);"></div>
<div class="a" style="left:495.0px;top:411.31px;width:18.5px;height:12.86px;background:rgba(60,40,0,0.035);"></div>
<div class="a" style="left:539.4px;top:411.31px;width:18.5px;height:12.86px;background:rgba(60,40,0,0.035);"></div>
<div class="a" style="left:770.3px;top:411.31px;width:50.72px;height:12.86px;background:#f2e8dc;"></div>
<div class="a" style="left:566.25px;top:411.31px;width:26.95px;height:12.86px;background:#8d9db0;"></div>
<div class="a" style="left:821.02px;top:411.31px;width:6.34px;height:12.86px;background:#8d9db0;"></div>
<div class="a" style="left:593.2px;top:411.31px;width:67.85px;height:12.86px;background:#5fb3d2;"></div>
<div class="a" style="left:593.3px;top:411.31px;width:18.5px;height:12.86px;background:rgba(60,40,0,0.035);"></div>
<div class="a" style="left:637.5px;top:411.31px;width:18.5px;height:12.86px;background:rgba(60,40,0,0.035);"></div>
<div class="a" style="left:827.36px;top:411.31px;width:19.02px;height:12.86px;background:#5fb3d2;"></div>
<div class="a" style="left:661.05px;top:411.31px;width:86.85px;height:12.86px;background:#d5a7ab;"></div>
<div class="a" style="left:685.0px;top:411.31px;width:18.5px;height:12.86px;background:rgba(60,40,0,0.035);"></div>
<div class="a" style="left:729.4px;top:411.31px;width:18.5px;height:12.86px;background:rgba(60,40,0,0.035);"></div>
<div class="a" style="left:846.38px;top:411.31px;width:25.36px;height:12.86px;background:#d5a7ab;"></div>
<div class="a" style="left:384.0px;top:424.12px;width:133.1px;height:12.86px;background:#f2e8dc;"></div>
<div class="a" style="left:403.3px;top:424.12px;width:18.5px;height:12.86px;background:rgba(60,40,0,0.035);"></div>
<div class="a" style="left:447.5px;top:424.12px;width:18.5px;height:12.86px;background:rgba(60,40,0,0.035);"></div>
<div class="a" style="left:495.0px;top:424.12px;width:18.5px;height:12.86px;background:rgba(60,40,0,0.035);"></div>
<div class="a" style="left:770.3px;top:424.12px;width:38.04px;height:12.86px;background:#f2e8dc;"></div>
<div class="a" style="left:517.1px;top:424.12px;width:49.15px;height:12.86px;background:#d4bdf0;"></div>
<div class="a" style="left:539.4px;top:424.12px;width:18.5px;height:12.86px;background:rgba(60,40,0,0.035);"></div>
<div class="a" style="left:808.34px;top:424.12px;width:12.68px;height:12.86px;background:#d4bdf0;"></div>
<div class="a" style="left:566.25px;top:424.12px;width:181.65px;height:12.86px;background:#d5a7ab;"></div>
<div class="a" style="left:593.3px;top:424.12px;width:18.5px;height:12.86px;background:rgba(60,40,0,0.035);"></div>
<div class="a" style="left:637.5px;top:424.12px;width:18.5px;height:12.86px;background:rgba(60,40,0,0.035);"></div>
<div class="a" style="left:685.0px;top:424.12px;width:18.5px;height:12.86px;background:rgba(60,40,0,0.035);"></div>
<div class="a" style="left:729.4px;top:424.12px;width:18.5px;height:12.86px;background:rgba(60,40,0,0.035);"></div>
<div class="a" style="left:821.02px;top:424.12px;width:50.72px;height:12.86px;background:#d5a7ab;"></div>
<div class="a" style="left:384.0px;top:436.93px;width:363.9px;height:12.86px;background:#d5a7ab;"></div>
<div class="a" style="left:403.3px;top:436.93px;width:18.5px;height:12.86px;background:rgba(60,40,0,0.035);"></div>
<div class="a" style="left:447.5px;top:436.93px;width:18.5px;height:12.86px;background:rgba(60,40,0,0.035);"></div>
<div class="a" style="left:495.0px;top:436.93px;width:18.5px;height:12.86px;background:rgba(60,40,0,0.035);"></div>
<div class="a" style="left:539.4px;top:436.93px;width:18.5px;height:12.86px;background:rgba(60,40,0,0.035);"></div>
<div class="a" style="left:593.3px;top:436.93px;width:18.5px;height:12.86px;background:rgba(60,40,0,0.035);"></div>
<div class="a" style="left:637.5px;top:436.93px;width:18.5px;height:12.86px;background:rgba(60,40,0,0.035);"></div>
<div class="a" style="left:685.0px;top:436.93px;width:18.5px;height:12.86px;background:rgba(60,40,0,0.035);"></div>
<div class="a" style="left:729.4px;top:436.93px;width:18.5px;height:12.86px;background:rgba(60,40,0,0.035);"></div>
<div class="a" style="left:770.3px;top:436.93px;width:101.44px;height:12.86px;background:#d5a7ab;"></div>
<div class="a" style="left:384.0px;top:449.74px;width:182.25px;height:12.86px;background:#d5a7ab;"></div>
<div class="a" style="left:403.3px;top:449.74px;width:18.5px;height:12.86px;background:rgba(60,40,0,0.035);"></div>
<div class="a" style="left:447.5px;top:449.74px;width:18.5px;height:12.86px;background:rgba(60,40,0,0.035);"></div>
<div class="a" style="left:495.0px;top:449.74px;width:18.5px;height:12.86px;background:rgba(60,40,0,0.035);"></div>
<div class="a" style="left:539.4px;top:449.74px;width:18.5px;height:12.86px;background:rgba(60,40,0,0.035);"></div>
<div class="a" style="left:770.3px;top:449.74px;width:50.72px;height:12.86px;background:#d5a7ab;"></div>
<div class="a" style="left:566.25px;top:449.74px;width:181.65px;height:12.86px;background:#f2e8dc;"></div>
<div class="a" style="left:593.3px;top:449.74px;width:18.5px;height:12.86px;background:rgba(60,40,0,0.035);"></div>
<div class="a" style="left:637.5px;top:449.74px;width:18.5px;height:12.86px;background:rgba(60,40,0,0.035);"></div>
<div class="a" style="left:685.0px;top:449.74px;width:18.5px;height:12.86px;background:rgba(60,40,0,0.035);"></div>
<div class="a" style="left:729.4px;top:449.74px;width:18.5px;height:12.86px;background:rgba(60,40,0,0.035);"></div>
<div class="a" style="left:821.02px;top:449.74px;width:50.72px;height:12.86px;background:#f2e8dc;"></div>
<div class="a" style="left:384.0px;top:462.55px;width:363.9px;height:12.86px;background:#f2e8dc;"></div>
<div class="a" style="left:403.3px;top:462.55px;width:18.5px;height:12.86px;background:rgba(60,40,0,0.035);"></div>
<div class="a" style="left:447.5px;top:462.55px;width:18.5px;height:12.86px;background:rgba(60,40,0,0.035);"></div>
<div class="a" style="left:495.0px;top:462.55px;width:18.5px;height:12.86px;background:rgba(60,40,0,0.035);"></div>
<div class="a" style="left:539.4px;top:462.55px;width:18.5px;height:12.86px;background:rgba(60,40,0,0.035);"></div>
<div class="a" style="left:593.3px;top:462.55px;width:18.5px;height:12.86px;background:rgba(60,40,0,0.035);"></div>
<div class="a" style="left:637.5px;top:462.55px;width:18.5px;height:12.86px;background:rgba(60,40,0,0.035);"></div>
<div class="a" style="left:685.0px;top:462.55px;width:18.5px;height:12.86px;background:rgba(60,40,0,0.035);"></div>
<div class="a" style="left:729.4px;top:462.55px;width:18.5px;height:12.86px;background:rgba(60,40,0,0.035);"></div>
<div class="a" style="left:770.3px;top:462.55px;width:101.44px;height:12.86px;background:#f2e8dc;"></div>
<div class="a" style="left:384.0px;top:475.36px;width:363.9px;height:12.86px;background:#f2e8dc;"></div>
<div class="a" style="left:403.3px;top:475.36px;width:18.5px;height:12.86px;background:rgba(60,40,0,0.035);"></div>
<div class="a" style="left:447.5px;top:475.36px;width:18.5px;height:12.86px;background:rgba(60,40,0,0.035);"></div>
<div class="a" style="left:495.0px;top:475.36px;width:18.5px;height:12.86px;background:rgba(60,40,0,0.035);"></div>
<div class="a" style="left:539.4px;top:475.36px;width:18.5px;height:12.86px;background:rgba(60,40,0,0.035);"></div>
<div class="a" style="left:593.3px;top:475.36px;width:18.5px;height:12.86px;background:rgba(60,40,0,0.035);"></div>
<div class="a" style="left:637.5px;top:475.36px;width:18.5px;height:12.86px;background:rgba(60,40,0,0.035);"></div>
<div class="a" style="left:685.0px;top:475.36px;width:18.5px;height:12.86px;background:rgba(60,40,0,0.035);"></div>
<div class="a" style="left:729.4px;top:475.36px;width:18.5px;height:12.86px;background:rgba(60,40,0,0.035);"></div>
<div class="a" style="left:770.3px;top:475.36px;width:101.44px;height:12.86px;background:#f2e8dc;"></div>
<div class="a" style="left:384.0px;top:488.17px;width:363.9px;height:12.86px;background:#f2e8dc;"></div>
<div class="a" style="left:403.3px;top:488.17px;width:18.5px;height:12.86px;background:rgba(60,40,0,0.035);"></div>
<div class="a" style="left:447.5px;top:488.17px;width:18.5px;height:12.86px;background:rgba(60,40,0,0.035);"></div>
<div class="a" style="left:495.0px;top:488.17px;width:18.5px;height:12.86px;background:rgba(60,40,0,0.035);"></div>
<div class="a" style="left:539.4px;top:488.17px;width:18.5px;height:12.86px;background:rgba(60,40,0,0.035);"></div>
<div class="a" style="left:593.3px;top:488.17px;width:18.5px;height:12.86px;background:rgba(60,40,0,0.035);"></div>
<div class="a" style="left:637.5px;top:488.17px;width:18.5px;height:12.86px;background:rgba(60,40,0,0.035);"></div>
<div class="a" style="left:685.0px;top:488.17px;width:18.5px;height:12.86px;background:rgba(60,40,0,0.035);"></div>
<div class="a" style="left:729.4px;top:488.17px;width:18.5px;height:12.86px;background:rgba(60,40,0,0.035);"></div>
<div class="a" style="left:770.3px;top:488.17px;width:101.44px;height:12.86px;background:#f2e8dc;"></div>
<div class="a" style="left:384.0px;top:500.98px;width:363.9px;height:12.86px;background:#f2e8dc;"></div>
<div class="a" style="left:403.3px;top:500.98px;width:18.5px;height:12.86px;background:rgba(60,40,0,0.035);"></div>
<div class="a" style="left:447.5px;top:500.98px;width:18.5px;height:12.86px;background:rgba(60,40,0,0.035);"></div>
<div class="a" style="left:495.0px;top:500.98px;width:18.5px;height:12.86px;background:rgba(60,40,0,0.035);"></div>
<div class="a" style="left:539.4px;top:500.98px;width:18.5px;height:12.86px;background:rgba(60,40,0,0.035);"></div>
<div class="a" style="left:593.3px;top:500.98px;width:18.5px;height:12.86px;background:rgba(60,40,0,0.035);"></div>
<div class="a" style="left:637.5px;top:500.98px;width:18.5px;height:12.86px;background:rgba(60,40,0,0.035);"></div>
<div class="a" style="left:685.0px;top:500.98px;width:18.5px;height:12.86px;background:rgba(60,40,0,0.035);"></div>
<div class="a" style="left:729.4px;top:500.98px;width:18.5px;height:12.86px;background:rgba(60,40,0,0.035);"></div>
<div class="a" style="left:770.3px;top:500.98px;width:101.44px;height:12.86px;background:#f2e8dc;"></div>
<div class="a" style="left:384.0px;top:513.79px;width:363.9px;height:12.86px;background:#f2e8dc;"></div>
<div class="a" style="left:403.3px;top:513.79px;width:18.5px;height:12.86px;background:rgba(60,40,0,0.035);"></div>
<div class="a" style="left:447.5px;top:513.79px;width:18.5px;height:12.86px;background:rgba(60,40,0,0.035);"></div>
<div class="a" style="left:495.0px;top:513.79px;width:18.5px;height:12.86px;background:rgba(60,40,0,0.035);"></div>
<div class="a" style="left:539.4px;top:513.79px;width:18.5px;height:12.86px;background:rgba(60,40,0,0.035);"></div>
<div class="a" style="left:593.3px;top:513.79px;width:18.5px;height:12.86px;background:rgba(60,40,0,0.035);"></div>
<div class="a" style="left:637.5px;top:513.79px;width:18.5px;height:12.86px;background:rgba(60,40,0,0.035);"></div>
<div class="a" style="left:685.0px;top:513.79px;width:18.5px;height:12.86px;background:rgba(60,40,0,0.035);"></div>
<div class="a" style="left:729.4px;top:513.79px;width:18.5px;height:12.86px;background:rgba(60,40,0,0.035);"></div>
<div class="a" style="left:770.3px;top:513.79px;width:101.44px;height:12.86px;background:#f2e8dc;"></div>
<div class="a" style="left:384.0px;top:526.6px;width:363.9px;height:12.86px;background:#f2e8dc;"></div>
<div class="a" style="left:403.3px;top:526.6px;width:18.5px;height:12.86px;background:rgba(60,40,0,0.035);"></div>
<div class="a" style="left:447.5px;top:526.6px;width:18.5px;height:12.86px;background:rgba(60,40,0,0.035);"></div>
<div class="a" style="left:495.0px;top:526.6px;width:18.5px;height:12.86px;background:rgba(60,40,0,0.035);"></div>
<div class="a" style="left:539.4px;top:526.6px;width:18.5px;height:12.86px;background:rgba(60,40,0,0.035);"></div>
<div class="a" style="left:593.3px;top:526.6px;width:18.5px;height:12.86px;background:rgba(60,40,0,0.035);"></div>
<div class="a" style="left:637.5px;top:526.6px;width:18.5px;height:12.86px;background:rgba(60,40,0,0.035);"></div>
<div class="a" style="left:685.0px;top:526.6px;width:18.5px;height:12.86px;background:rgba(60,40,0,0.035);"></div>
<div class="a" style="left:729.4px;top:526.6px;width:18.5px;height:12.86px;background:rgba(60,40,0,0.035);"></div>
<div class="a" style="left:770.3px;top:526.6px;width:101.44px;height:12.86px;background:#f2e8dc;"></div>
<div class="a" style="left:384.0px;top:539.41px;width:363.9px;height:12.86px;background:#f2e8dc;"></div>
<div class="a" style="left:403.3px;top:539.41px;width:18.5px;height:12.86px;background:rgba(60,40,0,0.035);"></div>
<div class="a" style="left:447.5px;top:539.41px;width:18.5px;height:12.86px;background:rgba(60,40,0,0.035);"></div>
<div class="a" style="left:495.0px;top:539.41px;width:18.5px;height:12.86px;background:rgba(60,40,0,0.035);"></div>
<div class="a" style="left:539.4px;top:539.41px;width:18.5px;height:12.86px;background:rgba(60,40,0,0.035);"></div>
<div class="a" style="left:593.3px;top:539.41px;width:18.5px;height:12.86px;background:rgba(60,40,0,0.035);"></div>
<div class="a" style="left:637.5px;top:539.41px;width:18.5px;height:12.86px;background:rgba(60,40,0,0.035);"></div>
<div class="a" style="left:685.0px;top:539.41px;width:18.5px;height:12.86px;background:rgba(60,40,0,0.035);"></div>
<div class="a" style="left:729.4px;top:539.41px;width:18.5px;height:12.86px;background:rgba(60,40,0,0.035);"></div>
<div class="a" style="left:770.3px;top:539.41px;width:101.44px;height:12.86px;background:#f2e8dc;"></div>
<div class="a" style="left:384.0px;top:552.22px;width:363.9px;height:12.86px;background:#f2e8dc;"></div>
<div class="a" style="left:403.3px;top:552.22px;width:18.5px;height:12.86px;background:rgba(60,40,0,0.035);"></div>
<div class="a" style="left:447.5px;top:552.22px;width:18.5px;height:12.86px;background:rgba(60,40,0,0.035);"></div>
<div class="a" style="left:495.0px;top:552.22px;width:18.5px;height:12.86px;background:rgba(60,40,0,0.035);"></div>
<div class="a" style="left:539.4px;top:552.22px;width:18.5px;height:12.86px;background:rgba(60,40,0,0.035);"></div>
<div class="a" style="left:593.3px;top:552.22px;width:18.5px;height:12.86px;background:rgba(60,40,0,0.035);"></div>
<div class="a" style="left:637.5px;top:552.22px;width:18.5px;height:12.86px;background:rgba(60,40,0,0.035);"></div>
<div class="a" style="left:685.0px;top:552.22px;width:18.5px;height:12.86px;background:rgba(60,40,0,0.035);"></div>
<div class="a" style="left:729.4px;top:552.22px;width:18.5px;height:12.86px;background:rgba(60,40,0,0.035);"></div>
<div class="a" style="left:770.3px;top:552.22px;width:101.44px;height:12.86px;background:#f2e8dc;"></div>
<div class="a" style="left:566.25px;top:411.31px;width:7.25px;height:12.81px;background:#fbf8f4;"></div>
<div class="a" style="left:821.02px;top:411.31px;width:1.5px;height:12.81px;background:#fbf8f4;"></div>
<div class="a" style="left:384.0px;top:142.3px;width:363.9px;height:51.24px;border:1px solid #8a8a8a"></div>
<div class="a" style="left:770.3px;top:142.3px;width:101.44px;height:51.24px;border:1px solid #8a8a8a"></div>
<div class="a" style="left:384.0px;top:142.3px;width:41.25px;height:12.81px;border:1px solid #6a6aa0"></div>
<div class="a" style="left:770.3px;top:142.3px;width:12.68px;height:12.81px;border:1px solid #6a6aa0"></div>
<div class="a" style="left:661.05px;top:180.73px;width:86.85px;height:12.81px;border:1px solid #8a8a8a"></div>
<div class="a" style="left:846.38px;top:180.73px;width:25.36px;height:12.81px;border:1px solid #8a8a8a"></div>
<div class="a" style="left:566.25px;top:347.26px;width:181.65px;height:12.81px;border:1px solid #8a7a6a"></div>
<div class="a" style="left:821.02px;top:347.26px;width:50.72px;height:12.81px;border:1px solid #8a7a6a"></div>
<div class="a" style="left:384.0px;top:360.07px;width:363.9px;height:204.96px;border:1px solid #7a6a60"></div>
<div class="a" style="left:770.3px;top:360.07px;width:101.44px;height:204.96px;border:1px solid #7a6a60"></div>
<div class="a" style="left:384.0px;top:360.07px;width:87.05px;height:12.81px;border:1px solid #6a5a50"></div>
<div class="a" style="left:770.3px;top:360.07px;width:25.36px;height:12.81px;border:1px solid #6a5a50"></div>
<div class="a" style="left:661.05px;top:360.07px;width:46.05px;height:12.81px;border:1px solid #6a5050"></div>
<div class="a" style="left:846.38px;top:360.07px;width:12.68px;height:12.81px;border:1px solid #6a5050"></div>
<div class="a" style="left:384.0px;top:372.88px;width:87.05px;height:12.81px;border:1px solid #6a5a50"></div>
<div class="a" style="left:770.3px;top:372.88px;width:25.36px;height:12.81px;border:1px solid #6a5a50"></div>
<div class="a" style="left:471.05px;top:372.88px;width:276.85px;height:12.81px;border:1px solid #6a5050"></div>
<div class="a" style="left:795.66px;top:372.88px;width:76.08px;height:12.81px;border:1px solid #6a5050"></div>
<div class="a" style="left:566.25px;top:411.31px;width:181.65px;height:12.81px;border:1px solid #4a4040"></div>
<div class="a" style="left:821.02px;top:411.31px;width:50.72px;height:12.81px;border:1px solid #4a4040"></div>
<div class="a" style="left:566.25px;top:411.31px;width:94.8px;height:12.81px;border:1px solid #333"></div>
<div class="a" style="left:821.02px;top:411.31px;width:25.36px;height:12.81px;border:1px solid #333"></div>
<div class="a" style="left:517.1px;top:424.12px;width:49.15px;height:12.81px;border:1px solid #5a4a70"></div>
<div class="a" style="left:808.34px;top:424.12px;width:12.68px;height:12.81px;border:1px solid #5a4a70"></div>
<div class="a" style="left:566.25px;top:424.12px;width:181.65px;height:38.43px;border:1px solid #6a5050"></div>
<div class="a" style="left:821.02px;top:424.12px;width:50.72px;height:38.43px;border:1px solid #6a5050"></div>
<div class="a" style="left:384.0px;top:436.93px;width:182.25px;height:25.62px;border:1px solid #6a5050"></div>
<div class="a" style="left:770.3px;top:436.93px;width:50.72px;height:25.62px;border:1px solid #6a5050"></div>
<div class="m" style="left:317.5px;top:143.20px">00000000</div>
<div class="m" style="left:387.50px;top:143.20px;color:#fff">4d</div>
<div class="m" style="left:406.30px;top:143.20px;color:#fff">5a</div>
<div class="m" style="left:431.60px;top:143.20px;color:#111">90</div>
<div class="m" style="left:450.50px;top:143.20px;color:#111">00</div>
<div class="m" style="left:479.00px;top:143.20px;color:#111">03</div>
<div class="m" style="left:498.00px;top:143.20px;color:#111">00</div>
<div class="m" style="left:523.60px;top:143.20px;color:#111">00</div>
<div class="m" style="left:542.40px;top:143.20px;color:#111">00</div>
<div class="m" style="left:577.50px;top:143.20px;color:#111">04</div>
<div class="m" style="left:596.30px;top:143.20px;color:#111">00</div>
<div class="m" style="left:621.60px;top:143.20px;color:#111">00</div>
<div class="m" style="left:640.50px;top:143.20px;color:#111">00</div>
<div class="m" style="left:669.00px;top:143.20px;color:#111">ff</div>
<div class="m" style="left:688.00px;top:143.20px;color:#111">ff</div>
<div class="m" style="left:713.60px;top:143.20px;color:#111">00</div>
<div class="m" style="left:732.40px;top:143.20px;color:#111">00</div>
<div class="m" style="left:770.3px;top:143.20px;letter-spacing:-0.38px"><span style="color:#fff">M</span><span style="color:#fff">Z</span><span style="color:#111">ђ</span><span style="color:#111">.</span><span style="color:#111">.</span><span style="color:#111">.</span><span style="color:#111">.</span><span style="color:#111">.</span><span style="color:#111">.</span><span style="color:#111">.</span><span style="color:#111">.</span><span style="color:#111">.</span><span style="color:#111">я</span><span style="color:#111">я</span><span style="color:#111">.</span><span style="color:#111">.</span></div>
<div class="m" style="left:317.5px;top:156.01px">00000010</div>
<div class="m" style="left:387.50px;top:156.01px;color:#111">b8</div>
<div class="m" style="left:406.30px;top:156.01px;color:#111">00</div>
<div class="m" style="left:431.60px;top:156.01px;color:#111">00</div>
<div class="m" style="left:450.50px;top:156.01px;color:#111">00</div>
<div class="m" style="left:479.00px;top:156.01px;color:#111">00</div>
<div class="m" style="left:498.00px;top:156.01px;color:#111">00</div>
<div class="m" style="left:523.60px;top:156.01px;color:#111">00</div>
<div class="m" style="left:542.40px;top:156.01px;color:#111">00</div>
<div class="m" style="left:577.50px;top:156.01px;color:#111">40</div>
<div class="m" style="left:596.30px;top:156.01px;color:#111">00</div>
<div class="m" style="left:621.60px;top:156.01px;color:#111">00</div>
<div class="m" style="left:640.50px;top:156.01px;color:#111">00</div>
<div class="m" style="left:669.00px;top:156.01px;color:#111">00</div>
<div class="m" style="left:688.00px;top:156.01px;color:#111">00</div>
<div class="m" style="left:713.60px;top:156.01px;color:#111">00</div>
<div class="m" style="left:732.40px;top:156.01px;color:#111">00</div>
<div class="m" style="left:770.3px;top:156.01px;letter-spacing:-0.38px">ё.......@.......</div>
<div class="m" style="left:317.5px;top:168.82px">00000020</div>
<div class="m" style="left:387.50px;top:168.82px;color:#111">00</div>
<div class="m" style="left:406.30px;top:168.82px;color:#111">00</div>
<div class="m" style="left:431.60px;top:168.82px;color:#111">00</div>
<div class="m" style="left:450.50px;top:168.82px;color:#111">00</div>
<div class="m" style="left:479.00px;top:168.82px;color:#111">00</div>
<div class="m" style="left:498.00px;top:168.82px;color:#111">00</div>
<div class="m" style="left:523.60px;top:168.82px;color:#111">00</div>
<div class="m" style="left:542.40px;top:168.82px;color:#111">00</div>
<div class="m" style="left:577.50px;top:168.82px;color:#111">00</div>
<div class="m" style="left:596.30px;top:168.82px;color:#111">00</div>
<div class="m" style="left:621.60px;top:168.82px;color:#111">00</div>
<div class="m" style="left:640.50px;top:168.82px;color:#111">00</div>
<div class="m" style="left:669.00px;top:168.82px;color:#111">00</div>
<div class="m" style="left:688.00px;top:168.82px;color:#111">00</div>
<div class="m" style="left:713.60px;top:168.82px;color:#111">00</div>
<div class="m" style="left:732.40px;top:168.82px;color:#111">00</div>
<div class="m" style="left:770.3px;top:168.82px;letter-spacing:-0.38px">................</div>
<div class="m" style="left:317.5px;top:181.63px">00000030</div>
<div class="m" style="left:387.50px;top:181.63px;color:#111">00</div>
<div class="m" style="left:406.30px;top:181.63px;color:#111">00</div>
<div class="m" style="left:431.60px;top:181.63px;color:#111">00</div>
<div class="m" style="left:450.50px;top:181.63px;color:#111">00</div>
<div class="m" style="left:479.00px;top:181.63px;color:#111">00</div>
<div class="m" style="left:498.00px;top:181.63px;color:#111">00</div>
<div class="m" style="left:523.60px;top:181.63px;color:#111">00</div>
<div class="m" style="left:542.40px;top:181.63px;color:#111">00</div>
<div class="m" style="left:577.50px;top:181.63px;color:#111">00</div>
<div class="m" style="left:596.30px;top:181.63px;color:#111">00</div>
<div class="m" style="left:621.60px;top:181.63px;color:#111">00</div>
<div class="m" style="left:640.50px;top:181.63px;color:#111">00</div>
<div class="m" style="left:669.00px;top:181.63px;color:#111">08</div>
<div class="m" style="left:688.00px;top:181.63px;color:#111">01</div>
<div class="m" style="left:713.60px;top:181.63px;color:#111">00</div>
<div class="m" style="left:732.40px;top:181.63px;color:#111">00</div>
<div class="m" style="left:770.3px;top:181.63px;letter-spacing:-0.38px">................</div>
<div class="m" style="left:317.5px;top:194.44px">00000040</div>
<div class="m" style="left:387.50px;top:194.44px;color:#111">0e</div>
<div class="m" style="left:406.30px;top:194.44px;color:#111">1f</div>
<div class="m" style="left:431.60px;top:194.44px;color:#111">ba</div>
<div class="m" style="left:450.50px;top:194.44px;color:#111">0e</div>
<div class="m" style="left:479.00px;top:194.44px;color:#111">00</div>
<div class="m" style="left:498.00px;top:194.44px;color:#111">b4</div>
<div class="m" style="left:523.60px;top:194.44px;color:#111">09</div>
<div class="m" style="left:542.40px;top:194.44px;color:#111">cd</div>
<div class="m" style="left:577.50px;top:194.44px;color:#111">21</div>
<div class="m" style="left:596.30px;top:194.44px;color:#111">b8</div>
<div class="m" style="left:621.60px;top:194.44px;color:#111">01</div>
<div class="m" style="left:640.50px;top:194.44px;color:#111">4c</div>
<div class="m" style="left:669.00px;top:194.44px;color:#111">cd</div>
<div class="m" style="left:688.00px;top:194.44px;color:#111">21</div>
<div class="m" style="left:713.60px;top:194.44px;color:#111">54</div>
<div class="m" style="left:732.40px;top:194.44px;color:#111">68</div>
<div class="m" style="left:770.3px;top:194.44px;letter-spacing:-0.38px">..є..ґ.H!ё.LH!Th</div>
<div class="m" style="left:317.5px;top:207.25px">00000050</div>
<div class="m" style="left:387.50px;top:207.25px;color:#111">69</div>
<div class="m" style="left:406.30px;top:207.25px;color:#111">73</div>
<div class="m" style="left:431.60px;top:207.25px;color:#111">20</div>
<div class="m" style="left:450.50px;top:207.25px;color:#111">70</div>
<div class="m" style="left:479.00px;top:207.25px;color:#111">72</div>
<div class="m" style="left:498.00px;top:207.25px;color:#111">6f</div>
<div class="m" style="left:523.60px;top:207.25px;color:#111">67</div>
<div class="m" style="left:542.40px;top:207.25px;color:#111">72</div>
<div class="m" style="left:577.50px;top:207.25px;color:#111">61</div>
<div class="m" style="left:596.30px;top:207.25px;color:#111">6d</div>
<div class="m" style="left:621.60px;top:207.25px;color:#111">20</div>
<div class="m" style="left:640.50px;top:207.25px;color:#111">63</div>
<div class="m" style="left:669.00px;top:207.25px;color:#111">61</div>
<div class="m" style="left:688.00px;top:207.25px;color:#111">6e</div>
<div class="m" style="left:713.60px;top:207.25px;color:#111">6e</div>
<div class="m" style="left:732.40px;top:207.25px;color:#111">6f</div>
<div class="m" style="left:770.3px;top:207.25px;letter-spacing:-0.38px">is program canno</div>
<div class="m" style="left:317.5px;top:220.06px">00000060</div>
<div class="m" style="left:387.50px;top:220.06px;color:#111">74</div>
<div class="m" style="left:406.30px;top:220.06px;color:#111">20</div>
<div class="m" style="left:431.60px;top:220.06px;color:#111">62</div>
<div class="m" style="left:450.50px;top:220.06px;color:#111">65</div>
<div class="m" style="left:479.00px;top:220.06px;color:#111">20</div>
<div class="m" style="left:498.00px;top:220.06px;color:#111">72</div>
<div class="m" style="left:523.60px;top:220.06px;color:#111">75</div>
<div class="m" style="left:542.40px;top:220.06px;color:#111">6e</div>
<div class="m" style="left:577.50px;top:220.06px;color:#111">20</div>
<div class="m" style="left:596.30px;top:220.06px;color:#111">69</div>
<div class="m" style="left:621.60px;top:220.06px;color:#111">6e</div>
<div class="m" style="left:640.50px;top:220.06px;color:#111">20</div>
<div class="m" style="left:669.00px;top:220.06px;color:#111">44</div>
<div class="m" style="left:688.00px;top:220.06px;color:#111">4f</div>
<div class="m" style="left:713.60px;top:220.06px;color:#111">53</div>
<div class="m" style="left:732.40px;top:220.06px;color:#111">20</div>
<div class="m" style="left:770.3px;top:220.06px;letter-spacing:-0.38px">t be run in DOS </div>
<div class="m" style="left:317.5px;top:232.87px">00000070</div>
<div class="m" style="left:387.50px;top:232.87px;color:#111">6d</div>
<div class="m" style="left:406.30px;top:232.87px;color:#111">6f</div>
<div class="m" style="left:431.60px;top:232.87px;color:#111">64</div>
<div class="m" style="left:450.50px;top:232.87px;color:#111">65</div>
<div class="m" style="left:479.00px;top:232.87px;color:#111">2e</div>
<div class="m" style="left:498.00px;top:232.87px;color:#111">0d</div>
<div class="m" style="left:523.60px;top:232.87px;color:#111">0d</div>
<div class="m" style="left:542.40px;top:232.87px;color:#111">0a</div>
<div class="m" style="left:577.50px;top:232.87px;color:#111">24</div>
<div class="m" style="left:596.30px;top:232.87px;color:#111">00</div>
<div class="m" style="left:621.60px;top:232.87px;color:#111">00</div>
<div class="m" style="left:640.50px;top:232.87px;color:#111">00</div>
<div class="m" style="left:669.00px;top:232.87px;color:#111">00</div>
<div class="m" style="left:688.00px;top:232.87px;color:#111">00</div>
<div class="m" style="left:713.60px;top:232.87px;color:#111">00</div>
<div class="m" style="left:732.40px;top:232.87px;color:#111">00</div>
<div class="m" style="left:770.3px;top:232.87px;letter-spacing:-0.38px">mode....$.......</div>
<div class="m" style="left:317.5px;top:245.68px">00000080</div>
<div class="m" style="left:387.50px;top:245.68px;color:#111">36</div>
<div class="m" style="left:406.30px;top:245.68px;color:#111">ad</div>
<div class="m" style="left:431.60px;top:245.68px;color:#111">44</div>
<div class="m" style="left:450.50px;top:245.68px;color:#111">71</div>
<div class="m" style="left:479.00px;top:245.68px;color:#111">72</div>
<div class="m" style="left:498.00px;top:245.68px;color:#111">cc</div>
<div class="m" style="left:523.60px;top:245.68px;color:#111">2a</div>
<div class="m" style="left:542.40px;top:245.68px;color:#111">22</div>
<div class="m" style="left:577.50px;top:245.68px;color:#111">72</div>
<div class="m" style="left:596.30px;top:245.68px;color:#111">cc</div>
<div class="m" style="left:621.60px;top:245.68px;color:#111">2a</div>
<div class="m" style="left:640.50px;top:245.68px;color:#111">22</div>
<div class="m" style="left:669.00px;top:245.68px;color:#111">72</div>
<div class="m" style="left:688.00px;top:245.68px;color:#111">cc</div>
<div class="m" style="left:713.60px;top:245.68px;color:#111">2a</div>
<div class="m" style="left:732.40px;top:245.68px;color:#111">22</div>
<div class="m" style="left:770.3px;top:245.68px;letter-spacing:-0.38px">6.DqrM*"rM*"rM*"</div>
<div class="m" style="left:317.5px;top:258.49px">00000090</div>
<div class="m" style="left:387.50px;top:258.49px;color:#111">7b</div>
<div class="m" style="left:406.30px;top:258.49px;color:#111">b4</div>
<div class="m" style="left:431.60px;top:258.49px;color:#111">b9</div>
<div class="m" style="left:450.50px;top:258.49px;color:#111">22</div>
<div class="m" style="left:479.00px;top:258.49px;color:#111">7e</div>
<div class="m" style="left:498.00px;top:258.49px;color:#111">cd</div>
<div class="m" style="left:523.60px;top:258.49px;color:#111">2a</div>
<div class="m" style="left:542.40px;top:258.49px;color:#111">22</div>
<div class="m" style="left:577.50px;top:258.49px;color:#111">a1</div>
<div class="m" style="left:596.30px;top:258.49px;color:#111">be</div>
<div class="m" style="left:621.60px;top:258.49px;color:#111">29</div>
<div class="m" style="left:640.50px;top:258.49px;color:#111">23</div>
<div class="m" style="left:669.00px;top:258.49px;color:#111">76</div>
<div class="m" style="left:688.00px;top:258.49px;color:#111">cc</div>
<div class="m" style="left:713.60px;top:258.49px;color:#111">2a</div>
<div class="m" style="left:732.40px;top:258.49px;color:#111">22</div>
<div class="m" style="left:770.3px;top:258.49px;letter-spacing:-0.38px">{ґ№"~H*"Ўs)#vM*"</div>
<div class="m" style="left:317.5px;top:271.30px">000000a0</div>
<div class="m" style="left:387.50px;top:271.30px;color:#111">a1</div>
<div class="m" style="left:406.30px;top:271.30px;color:#111">be</div>
<div class="m" style="left:431.60px;top:271.30px;color:#111">2f</div>
<div class="m" style="left:450.50px;top:271.30px;color:#111">23</div>
<div class="m" style="left:479.00px;top:271.30px;color:#111">51</div>
<div class="m" style="left:498.00px;top:271.30px;color:#111">cc</div>
<div class="m" style="left:523.60px;top:271.30px;color:#111">2a</div>
<div class="m" style="left:542.40px;top:271.30px;color:#111">22</div>
<div class="m" style="left:577.50px;top:271.30px;color:#111">72</div>
<div class="m" style="left:596.30px;top:271.30px;color:#111">cc</div>
<div class="m" style="left:621.60px;top:271.30px;color:#111">2b</div>
<div class="m" style="left:640.50px;top:271.30px;color:#111">22</div>
<div class="m" style="left:669.00px;top:271.30px;color:#111">96</div>
<div class="m" style="left:688.00px;top:271.30px;color:#111">c5</div>
<div class="m" style="left:713.60px;top:271.30px;color:#111">2a</div>
<div class="m" style="left:732.40px;top:271.30px;color:#111">22</div>
<div class="m" style="left:770.3px;top:271.30px;letter-spacing:-0.38px">Ўs/#QM*"rM+"-E*"</div>
<div class="m" style="left:317.5px;top:284.11px">000000b0</div>
<div class="m" style="left:387.50px;top:284.11px;color:#111">a1</div>
<div class="m" style="left:406.30px;top:284.11px;color:#111">be</div>
<div class="m" style="left:431.60px;top:284.11px;color:#111">2b</div>
<div class="m" style="left:450.50px;top:284.11px;color:#111">23</div>
<div class="m" style="left:479.00px;top:284.11px;color:#111">51</div>
<div class="m" style="left:498.00px;top:284.11px;color:#111">cc</div>
<div class="m" style="left:523.60px;top:284.11px;color:#111">2a</div>
<div class="m" style="left:542.40px;top:284.11px;color:#111">22</div>
<div class="m" style="left:577.50px;top:284.11px;color:#111">a1</div>
<div class="m" style="left:596.30px;top:284.11px;color:#111">be</div>
<div class="m" style="left:621.60px;top:284.11px;color:#111">27</div>
<div class="m" style="left:640.50px;top:284.11px;color:#111">23</div>
<div class="m" style="left:669.00px;top:284.11px;color:#111">38</div>
<div class="m" style="left:688.00px;top:284.11px;color:#111">cd</div>
<div class="m" style="left:713.60px;top:284.11px;color:#111">2a</div>
<div class="m" style="left:732.40px;top:284.11px;color:#111">22</div>
<div class="m" style="left:770.3px;top:284.11px;letter-spacing:-0.38px">Ўs+#QM*"Ўs'#8H*"</div>
<div class="m" style="left:317.5px;top:296.92px">000000c0</div>
<div class="m" style="left:387.50px;top:296.92px;color:#111">a1</div>
<div class="m" style="left:406.30px;top:296.92px;color:#111">be</div>
<div class="m" style="left:431.60px;top:296.92px;color:#111">2e</div>
<div class="m" style="left:450.50px;top:296.92px;color:#111">23</div>
<div class="m" style="left:479.00px;top:296.92px;color:#111">50</div>
<div class="m" style="left:498.00px;top:296.92px;color:#111">cc</div>
<div class="m" style="left:523.60px;top:296.92px;color:#111">2a</div>
<div class="m" style="left:542.40px;top:296.92px;color:#111">22</div>
<div class="m" style="left:577.50px;top:296.92px;color:#111">a1</div>
<div class="m" style="left:596.30px;top:296.92px;color:#111">be</div>
<div class="m" style="left:621.60px;top:296.92px;color:#111">d7</div>
<div class="m" style="left:640.50px;top:296.92px;color:#111">22</div>
<div class="m" style="left:669.00px;top:296.92px;color:#111">73</div>
<div class="m" style="left:688.00px;top:296.92px;color:#111">cc</div>
<div class="m" style="left:713.60px;top:296.92px;color:#111">2a</div>
<div class="m" style="left:732.40px;top:296.92px;color:#111">22</div>
<div class="m" style="left:770.3px;top:296.92px;letter-spacing:-0.38px">Ўs.#PM*"ЎsЧ"sM*"</div>
<div class="m" style="left:317.5px;top:309.73px">000000d0</div>
<div class="m" style="left:387.50px;top:309.73px;color:#111">a1</div>
<div class="m" style="left:406.30px;top:309.73px;color:#111">be</div>
<div class="m" style="left:431.60px;top:309.73px;color:#111">2a</div>
<div class="m" style="left:450.50px;top:309.73px;color:#111">23</div>
<div class="m" style="left:479.00px;top:309.73px;color:#111">73</div>
<div class="m" style="left:498.00px;top:309.73px;color:#111">cc</div>
<div class="m" style="left:523.60px;top:309.73px;color:#111">2a</div>
<div class="m" style="left:542.40px;top:309.73px;color:#111">22</div>
<div class="m" style="left:577.50px;top:309.73px;color:#111">a1</div>
<div class="m" style="left:596.30px;top:309.73px;color:#111">be</div>
<div class="m" style="left:621.60px;top:309.73px;color:#111">d5</div>
<div class="m" style="left:640.50px;top:309.73px;color:#111">22</div>
<div class="m" style="left:669.00px;top:309.73px;color:#111">73</div>
<div class="m" style="left:688.00px;top:309.73px;color:#111">cc</div>
<div class="m" style="left:713.60px;top:309.73px;color:#111">2a</div>
<div class="m" style="left:732.40px;top:309.73px;color:#111">22</div>
<div class="m" style="left:770.3px;top:309.73px;letter-spacing:-0.38px">Ўs*#sM*"ЎsХ"sM*"</div>
<div class="m" style="left:317.5px;top:322.54px">000000e0</div>
<div class="m" style="left:387.50px;top:322.54px;color:#111">a1</div>
<div class="m" style="left:406.30px;top:322.54px;color:#111">be</div>
<div class="m" style="left:431.60px;top:322.54px;color:#111">28</div>
<div class="m" style="left:450.50px;top:322.54px;color:#111">23</div>
<div class="m" style="left:479.00px;top:322.54px;color:#111">73</div>
<div class="m" style="left:498.00px;top:322.54px;color:#111">cc</div>
<div class="m" style="left:523.60px;top:322.54px;color:#111">2a</div>
<div class="m" style="left:542.40px;top:322.54px;color:#111">22</div>
<div class="m" style="left:577.50px;top:322.54px;color:#111">52</div>
<div class="m" style="left:596.30px;top:322.54px;color:#111">69</div>
<div class="m" style="left:621.60px;top:322.54px;color:#111">63</div>
<div class="m" style="left:640.50px;top:322.54px;color:#111">68</div>
<div class="m" style="left:669.00px;top:322.54px;color:#111">72</div>
<div class="m" style="left:688.00px;top:322.54px;color:#111">cc</div>
<div class="m" style="left:713.60px;top:322.54px;color:#111">2a</div>
<div class="m" style="left:732.40px;top:322.54px;color:#111">22</div>
<div class="m" style="left:770.3px;top:322.54px;letter-spacing:-0.38px">Ўs(#sM*"RichrM*"</div>
<div class="m" style="left:317.5px;top:335.35px">000000f0</div>
<div class="m" style="left:387.50px;top:335.35px;color:#111">00</div>
<div class="m" style="left:406.30px;top:335.35px;color:#111">00</div>
<div class="m" style="left:431.60px;top:335.35px;color:#111">00</div>
<div class="m" style="left:450.50px;top:335.35px;color:#111">00</div>
<div class="m" style="left:479.00px;top:335.35px;color:#111">00</div>
<div class="m" style="left:498.00px;top:335.35px;color:#111">00</div>
<div class="m" style="left:523.60px;top:335.35px;color:#111">00</div>
<div class="m" style="left:542.40px;top:335.35px;color:#111">00</div>
<div class="m" style="left:577.50px;top:335.35px;color:#111">00</div>
<div class="m" style="left:596.30px;top:335.35px;color:#111">00</div>
<div class="m" style="left:621.60px;top:335.35px;color:#111">00</div>
<div class="m" style="left:640.50px;top:335.35px;color:#111">00</div>
<div class="m" style="left:669.00px;top:335.35px;color:#111">00</div>
<div class="m" style="left:688.00px;top:335.35px;color:#111">00</div>
<div class="m" style="left:713.60px;top:335.35px;color:#111">00</div>
<div class="m" style="left:732.40px;top:335.35px;color:#111">00</div>
<div class="m" style="left:770.3px;top:335.35px;letter-spacing:-0.38px">................</div>
<div class="m" style="left:317.5px;top:348.16px">00000100</div>
<div class="m" style="left:387.50px;top:348.16px;color:#111">00</div>
<div class="m" style="left:406.30px;top:348.16px;color:#111">00</div>
<div class="m" style="left:431.60px;top:348.16px;color:#111">00</div>
<div class="m" style="left:450.50px;top:348.16px;color:#111">00</div>
<div class="m" style="left:479.00px;top:348.16px;color:#111">00</div>
<div class="m" style="left:498.00px;top:348.16px;color:#111">00</div>
<div class="m" style="left:523.60px;top:348.16px;color:#111">00</div>
<div class="m" style="left:542.40px;top:348.16px;color:#111">00</div>
<div class="m" style="left:577.50px;top:348.16px;color:#111">50</div>
<div class="m" style="left:596.30px;top:348.16px;color:#111">45</div>
<div class="m" style="left:621.60px;top:348.16px;color:#111">00</div>
<div class="m" style="left:640.50px;top:348.16px;color:#111">00</div>
<div class="m" style="left:669.00px;top:348.16px;color:#111">64</div>
<div class="m" style="left:688.00px;top:348.16px;color:#111">86</div>
<div class="m" style="left:713.60px;top:348.16px;color:#111">08</div>
<div class="m" style="left:732.40px;top:348.16px;color:#111">00</div>
<div class="m" style="left:770.3px;top:348.16px;letter-spacing:-0.38px">........PE..d†..</div>
<div class="m" style="left:317.5px;top:360.97px">00000110</div>
<div class="m" style="left:387.50px;top:360.97px;color:#111">88</div>
<div class="m" style="left:406.30px;top:360.97px;color:#111">6f</div>
<div class="m" style="left:431.60px;top:360.97px;color:#111">31</div>
<div class="m" style="left:450.50px;top:360.97px;color:#111">bc</div>
<div class="m" style="left:479.00px;top:360.97px;color:#111">00</div>
<div class="m" style="left:498.00px;top:360.97px;color:#111">00</div>
<div class="m" style="left:523.60px;top:360.97px;color:#111">00</div>
<div class="m" style="left:542.40px;top:360.97px;color:#111">00</div>
<div class="m" style="left:577.50px;top:360.97px;color:#111">00</div>
<div class="m" style="left:596.30px;top:360.97px;color:#111">00</div>
<div class="m" style="left:621.60px;top:360.97px;color:#111">00</div>
<div class="m" style="left:640.50px;top:360.97px;color:#111">00</div>
<div class="m" style="left:669.00px;top:360.97px;color:#2f7a55">f0</div>
<div class="m" style="left:688.00px;top:360.97px;color:#2f7a55">00</div>
<div class="m" style="left:713.60px;top:360.97px;color:#111">22</div>
<div class="m" style="left:732.40px;top:360.97px;color:#111">00</div>
<div class="m" style="left:770.3px;top:360.97px;letter-spacing:-0.38px"><span style="color:#111">€</span><span style="color:#111">o</span><span style="color:#111">1</span><span style="color:#111">j</span><span style="color:#111">.</span><span style="color:#111">.</span><span style="color:#111">.</span><span style="color:#111">.</span><span style="color:#111">.</span><span style="color:#111">.</span><span style="color:#111">.</span><span style="color:#111">.</span><span style="color:#2f7a55">p</span><span style="color:#2f7a55">.</span><span style="color:#111">"</span><span style="color:#111">.</span></div>
<div class="m" style="left:317.5px;top:373.78px">00000120</div>
<div class="m" style="left:387.50px;top:373.78px;color:#fff">0b</div>
<div class="m" style="left:406.30px;top:373.78px;color:#fff">02</div>
<div class="m" style="left:431.60px;top:373.78px;color:#111">0e</div>
<div class="m" style="left:450.50px;top:373.78px;color:#111">1c</div>
<div class="m" style="left:479.00px;top:373.78px;color:#2f7a55">00</div>
<div class="m" style="left:498.00px;top:373.78px;color:#2f7a55">f0</div>
<div class="m" style="left:523.60px;top:373.78px;color:#2f7a55">2b</div>
<div class="m" style="left:542.40px;top:373.78px;color:#2f7a55">00</div>
<div class="m" style="left:577.50px;top:373.78px;color:#2f7a55">00</div>
<div class="m" style="left:596.30px;top:373.78px;color:#2f7a55">20</div>
<div class="m" style="left:621.60px;top:373.78px;color:#2f7a55">20</div>
<div class="m" style="left:640.50px;top:373.78px;color:#2f7a55">00</div>
<div class="m" style="left:669.00px;top:373.78px;color:#2f7a55">00</div>
<div class="m" style="left:688.00px;top:373.78px;color:#2f7a55">10</div>
<div class="m" style="left:713.60px;top:373.78px;color:#2f7a55">00</div>
<div class="m" style="left:732.40px;top:373.78px;color:#2f7a55">00</div>
<div class="m" style="left:770.3px;top:373.78px;letter-spacing:-0.38px"><span style="color:#fff">.</span><span style="color:#fff">.</span><span style="color:#111">.</span><span style="color:#111">.</span><span style="color:#2f7a55">.</span><span style="color:#2f7a55">p</span><span style="color:#2f7a55">+</span><span style="color:#2f7a55">.</span><span style="color:#2f7a55">.</span><span style="color:#2f7a55">.</span><span style="color:#2f7a55">.</span><span style="color:#2f7a55">.</span><span style="color:#2f7a55">.</span><span style="color:#2f7a55">.</span><span style="color:#2f7a55">.</span><span style="color:#2f7a55">.</span></div>
<div class="m" style="left:317.5px;top:386.59px">00000130</div>
<div class="m" style="left:387.50px;top:386.59px;color:#111">50</div>
<div class="m" style="left:406.30px;top:386.59px;color:#111">03</div>
<div class="m" style="left:431.60px;top:386.59px;color:#111">04</div>
<div class="m" style="left:450.50px;top:386.59px;color:#111">00</div>
<div class="m" style="left:479.00px;top:386.59px;color:#111">00</div>
<div class="m" style="left:498.00px;top:386.59px;color:#111">10</div>
<div class="m" style="left:523.60px;top:386.59px;color:#111">00</div>
<div class="m" style="left:542.40px;top:386.59px;color:#111">00</div>
<div class="m" style="left:577.50px;top:386.59px;color:#111">00</div>
<div class="m" style="left:596.30px;top:386.59px;color:#111">00</div>
<div class="m" style="left:621.60px;top:386.59px;color:#111">00</div>
<div class="m" style="left:640.50px;top:386.59px;color:#111">40</div>
<div class="m" style="left:669.00px;top:386.59px;color:#111">01</div>
<div class="m" style="left:688.00px;top:386.59px;color:#111">00</div>
<div class="m" style="left:713.60px;top:386.59px;color:#111">00</div>
<div class="m" style="left:732.40px;top:386.59px;color:#111">00</div>
<div class="m" style="left:770.3px;top:386.59px;letter-spacing:-0.38px">P..........@....</div>
<div class="m" style="left:317.5px;top:399.40px">00000140</div>
<div class="m" style="left:387.50px;top:399.40px;color:#111">00</div>
<div class="m" style="left:406.30px;top:399.40px;color:#111">10</div>
<div class="m" style="left:431.60px;top:399.40px;color:#111">00</div>
<div class="m" style="left:450.50px;top:399.40px;color:#111">00</div>
<div class="m" style="left:479.00px;top:399.40px;color:#111">00</div>
<div class="m" style="left:498.00px;top:399.40px;color:#111">10</div>
<div class="m" style="left:523.60px;top:399.40px;color:#111">00</div>
<div class="m" style="left:542.40px;top:399.40px;color:#111">00</div>
<div class="m" style="left:577.50px;top:399.40px;color:#111">0a</div>
<div class="m" style="left:596.30px;top:399.40px;color:#111">00</div>
<div class="m" style="left:621.60px;top:399.40px;color:#111">00</div>
<div class="m" style="left:640.50px;top:399.40px;color:#111">00</div>
<div class="m" style="left:669.00px;top:399.40px;color:#111">0a</div>
<div class="m" style="left:688.00px;top:399.40px;color:#111">00</div>
<div class="m" style="left:713.60px;top:399.40px;color:#111">00</div>
<div class="m" style="left:732.40px;top:399.40px;color:#111">00</div>
<div class="m" style="left:770.3px;top:399.40px;letter-spacing:-0.38px">................</div>
<div class="m" style="left:317.5px;top:412.21px">00000150</div>
<div class="m" style="left:387.50px;top:412.21px;color:#111">0a</div>
<div class="m" style="left:406.30px;top:412.21px;color:#111">00</div>
<div class="m" style="left:431.60px;top:412.21px;color:#111">00</div>
<div class="m" style="left:450.50px;top:412.21px;color:#111">00</div>
<div class="m" style="left:479.00px;top:412.21px;color:#111">00</div>
<div class="m" style="left:498.00px;top:412.21px;color:#111">00</div>
<div class="m" style="left:523.60px;top:412.21px;color:#111">00</div>
<div class="m" style="left:542.40px;top:412.21px;color:#111">00</div>
<div class="m" style="left:577.50px;top:412.21px;color:#8d9db0">..</div>
<div class="m" style="left:596.30px;top:412.21px;color:#fff">30</div>
<div class="m" style="left:621.60px;top:412.21px;color:#fff">4c</div>
<div class="m" style="left:640.50px;top:412.21px;color:#fff">00</div>
<div class="m" style="left:669.00px;top:412.21px;color:#2f7a55">00</div>
<div class="m" style="left:688.00px;top:412.21px;color:#2f7a55">10</div>
<div class="m" style="left:713.60px;top:412.21px;color:#2f7a55">00</div>
<div class="m" style="left:732.40px;top:412.21px;color:#2f7a55">00</div>
<div class="m" style="left:770.3px;top:412.21px;letter-spacing:-0.38px"><span style="color:#111">.</span><span style="color:#111">.</span><span style="color:#111">.</span><span style="color:#111">.</span><span style="color:#111">.</span><span style="color:#111">.</span><span style="color:#111">.</span><span style="color:#111">.</span><span style="color:#8d9db0">.</span><span style="color:#fff">0</span><span style="color:#fff">L</span><span style="color:#fff">.</span><span style="color:#2f7a55">.</span><span style="color:#2f7a55">.</span><span style="color:#2f7a55">.</span><span style="color:#2f7a55">.</span></div>
<div class="m" style="left:317.5px;top:425.02px">00000160</div>
<div class="m" style="left:387.50px;top:425.02px;color:#111">25</div>
<div class="m" style="left:406.30px;top:425.02px;color:#111">01</div>
<div class="m" style="left:431.60px;top:425.02px;color:#111">4d</div>
<div class="m" style="left:450.50px;top:425.02px;color:#111">00</div>
<div class="m" style="left:479.00px;top:425.02px;color:#111">02</div>
<div class="m" style="left:498.00px;top:425.02px;color:#111">00</div>
<div class="m" style="left:523.60px;top:425.02px;color:#201850">c0</div>
<div class="m" style="left:542.40px;top:425.02px;color:#201850">c1</div>
<div class="m" style="left:577.50px;top:425.02px;color:#2f7a55">00</div>
<div class="m" style="left:596.30px;top:425.02px;color:#2f7a55">00</div>
<div class="m" style="left:621.60px;top:425.02px;color:#2f7a55">08</div>
<div class="m" style="left:640.50px;top:425.02px;color:#2f7a55">00</div>
<div class="m" style="left:669.00px;top:425.02px;color:#2f7a55">00</div>
<div class="m" style="left:688.00px;top:425.02px;color:#2f7a55">00</div>
<div class="m" style="left:713.60px;top:425.02px;color:#2f7a55">00</div>
<div class="m" style="left:732.40px;top:425.02px;color:#2f7a55">00</div>
<div class="m" style="left:770.3px;top:425.02px;letter-spacing:-0.38px"><span style="color:#111">%</span><span style="color:#111">.</span><span style="color:#111">M</span><span style="color:#111">.</span><span style="color:#111">.</span><span style="color:#111">.</span><span style="color:#201850">А</span><span style="color:#201850">Б</span><span style="color:#2f7a55">.</span><span style="color:#2f7a55">.</span><span style="color:#2f7a55">.</span><span style="color:#2f7a55">.</span><span style="color:#2f7a55">.</span><span style="color:#2f7a55">.</span><span style="color:#2f7a55">.</span><span style="color:#2f7a55">.</span></div>
<div class="m" style="left:317.5px;top:437.83px">00000170</div>
<div class="m" style="left:387.50px;top:437.83px;color:#2f7a55">00</div>
<div class="m" style="left:406.30px;top:437.83px;color:#2f7a55">e0</div>
<div class="m" style="left:431.60px;top:437.83px;color:#2f7a55">00</div>
<div class="m" style="left:450.50px;top:437.83px;color:#2f7a55">00</div>
<div class="m" style="left:479.00px;top:437.83px;color:#2f7a55">00</div>
<div class="m" style="left:498.00px;top:437.83px;color:#2f7a55">00</div>
<div class="m" style="left:523.60px;top:437.83px;color:#2f7a55">00</div>
<div class="m" style="left:542.40px;top:437.83px;color:#2f7a55">00</div>
<div class="m" style="left:577.50px;top:437.83px;color:#2f7a55">00</div>
<div class="m" style="left:596.30px;top:437.83px;color:#2f7a55">00</div>
<div class="m" style="left:621.60px;top:437.83px;color:#2f7a55">00</div>
<div class="m" style="left:640.50px;top:437.83px;color:#2f7a55">00</div>
<div class="m" style="left:669.00px;top:437.83px;color:#2f7a55">00</div>
<div class="m" style="left:688.00px;top:437.83px;color:#2f7a55">00</div>
<div class="m" style="left:713.60px;top:437.83px;color:#2f7a55">00</div>
<div class="m" style="left:732.40px;top:437.83px;color:#2f7a55">00</div>
<div class="m" style="left:770.3px;top:437.83px;letter-spacing:-0.38px"><span style="color:#2f7a55">.</span><span style="color:#2f7a55">.</span><span style="color:#2f7a55">.</span><span style="color:#2f7a55">.</span><span style="color:#2f7a55">.</span><span style="color:#2f7a55">.</span><span style="color:#2f7a55">.</span><span style="color:#2f7a55">.</span><span style="color:#2f7a55">.</span><span style="color:#2f7a55">.</span><span style="color:#2f7a55">.</span><span style="color:#2f7a55">.</span><span style="color:#2f7a55">.</span><span style="color:#2f7a55">.</span><span style="color:#2f7a55">.</span><span style="color:#2f7a55">.</span></div>
<div class="m" style="left:317.5px;top:450.64px">00000180</div>
<div class="m" style="left:387.50px;top:450.64px;color:#2f7a55">00</div>
<div class="m" style="left:406.30px;top:450.64px;color:#2f7a55">10</div>
<div class="m" style="left:431.60px;top:450.64px;color:#2f7a55">00</div>
<div class="m" style="left:450.50px;top:450.64px;color:#2f7a55">00</div>
<div class="m" style="left:479.00px;top:450.64px;color:#2f7a55">00</div>
<div class="m" style="left:498.00px;top:450.64px;color:#2f7a55">00</div>
<div class="m" style="left:523.60px;top:450.64px;color:#2f7a55">00</div>
<div class="m" style="left:542.40px;top:450.64px;color:#2f7a55">00</div>
<div class="m" style="left:577.50px;top:450.64px;color:#111">00</div>
<div class="m" style="left:596.30px;top:450.64px;color:#111">00</div>
<div class="m" style="left:621.60px;top:450.64px;color:#111">00</div>
<div class="m" style="left:640.50px;top:450.64px;color:#111">00</div>
<div class="m" style="left:669.00px;top:450.64px;color:#111">00</div>
<div class="m" style="left:688.00px;top:450.64px;color:#111">00</div>
<div class="m" style="left:713.60px;top:450.64px;color:#111">00</div>
<div class="m" style="left:732.40px;top:450.64px;color:#111">00</div>
<div class="m" style="left:770.3px;top:450.64px;letter-spacing:-0.38px"><span style="color:#2f7a55">.</span><span style="color:#2f7a55">.</span><span style="color:#2f7a55">.</span><span style="color:#2f7a55">.</span><span style="color:#2f7a55">.</span><span style="color:#2f7a55">.</span><span style="color:#2f7a55">.</span><span style="color:#2f7a55">.</span><span style="color:#111">.</span><span style="color:#111">.</span><span style="color:#111">.</span><span style="color:#111">.</span><span style="color:#111">.</span><span style="color:#111">.</span><span style="color:#111">.</span><span style="color:#111">.</span></div>
<div class="m" style="left:317.5px;top:463.45px">00000190</div>
<div class="m" style="left:387.50px;top:463.45px;color:#111">f0</div>
<div class="m" style="left:406.30px;top:463.45px;color:#111">6d</div>
<div class="m" style="left:431.60px;top:463.45px;color:#111">35</div>
<div class="m" style="left:450.50px;top:463.45px;color:#111">00</div>
<div class="m" style="left:479.00px;top:463.45px;color:#111">54</div>
<div class="m" style="left:498.00px;top:463.45px;color:#111">00</div>
<div class="m" style="left:523.60px;top:463.45px;color:#111">00</div>
<div class="m" style="left:542.40px;top:463.45px;color:#111">00</div>
<div class="m" style="left:577.50px;top:463.45px;color:#111">44</div>
<div class="m" style="left:596.30px;top:463.45px;color:#111">00</div>
<div class="m" style="left:621.60px;top:463.45px;color:#111">00</div>
<div class="m" style="left:640.50px;top:463.45px;color:#111">00</div>
<div class="m" style="left:669.00px;top:463.45px;color:#111">00</div>
<div class="m" style="left:688.00px;top:463.45px;color:#111">00</div>
<div class="m" style="left:713.60px;top:463.45px;color:#111">00</div>
<div class="m" style="left:732.40px;top:463.45px;color:#111">00</div>
<div class="m" style="left:770.3px;top:463.45px;letter-spacing:-0.38px">Ёm5.T...D.......</div>
<div class="m" style="left:317.5px;top:476.26px">000001a0</div>
<div class="m" style="left:387.50px;top:476.26px;color:#111">00</div>
<div class="m" style="left:406.30px;top:476.26px;color:#111">60</div>
<div class="m" style="left:431.60px;top:476.26px;color:#111">38</div>
<div class="m" style="left:450.50px;top:476.26px;color:#111">00</div>
<div class="m" style="left:479.00px;top:476.26px;color:#111">68</div>
<div class="m" style="left:498.00px;top:476.26px;color:#111">7c</div>
<div class="m" style="left:523.60px;top:476.26px;color:#111">13</div>
<div class="m" style="left:542.40px;top:476.26px;color:#111">00</div>
<div class="m" style="left:577.50px;top:476.26px;color:#111">00</div>
<div class="m" style="left:596.30px;top:476.26px;color:#111">00</div>
<div class="m" style="left:621.60px;top:476.26px;color:#111">00</div>
<div class="m" style="left:640.50px;top:476.26px;color:#111">00</div>
<div class="m" style="left:669.00px;top:476.26px;color:#111">00</div>
<div class="m" style="left:688.00px;top:476.26px;color:#111">00</div>
<div class="m" style="left:713.60px;top:476.26px;color:#111">00</div>
<div class="m" style="left:732.40px;top:476.26px;color:#111">00</div>
<div class="m" style="left:770.3px;top:476.26px;letter-spacing:-0.38px">.`8.h|..........</div>
<div class="m" style="left:317.5px;top:489.07px">000001b0</div>
<div class="m" style="left:387.50px;top:489.07px;color:#111">00</div>
<div class="m" style="left:406.30px;top:489.07px;color:#111">e0</div>
<div class="m" style="left:431.60px;top:489.07px;color:#111">4b</div>
<div class="m" style="left:450.50px;top:489.07px;color:#111">00</div>
<div class="m" style="left:479.00px;top:489.07px;color:#111">88</div>
<div class="m" style="left:498.00px;top:489.07px;color:#111">d0</div>
<div class="m" style="left:523.60px;top:489.07px;color:#111">00</div>
<div class="m" style="left:542.40px;top:489.07px;color:#111">00</div>
<div class="m" style="left:577.50px;top:489.07px;color:#111">00</div>
<div class="m" style="left:596.30px;top:489.07px;color:#111">00</div>
<div class="m" style="left:621.60px;top:489.07px;color:#111">00</div>
<div class="m" style="left:640.50px;top:489.07px;color:#111">00</div>
<div class="m" style="left:669.00px;top:489.07px;color:#111">00</div>
<div class="m" style="left:688.00px;top:489.07px;color:#111">00</div>
<div class="m" style="left:713.60px;top:489.07px;color:#111">00</div>
<div class="m" style="left:732.40px;top:489.07px;color:#111">00</div>
<div class="m" style="left:770.3px;top:489.07px;letter-spacing:-0.38px">.рK.€Р..........</div>
<div class="m" style="left:317.5px;top:501.88px">000001c0</div>
<div class="m" style="left:387.50px;top:501.88px;color:#111">7c</div>
<div class="m" style="left:406.30px;top:501.88px;color:#111">b0</div>
<div class="m" style="left:431.60px;top:501.88px;color:#111">2f</div>
<div class="m" style="left:450.50px;top:501.88px;color:#111">00</div>
<div class="m" style="left:479.00px;top:501.88px;color:#111">54</div>
<div class="m" style="left:498.00px;top:501.88px;color:#111">00</div>
<div class="m" style="left:523.60px;top:501.88px;color:#111">00</div>
<div class="m" style="left:542.40px;top:501.88px;color:#111">00</div>
<div class="m" style="left:577.50px;top:501.88px;color:#111">00</div>
<div class="m" style="left:596.30px;top:501.88px;color:#111">00</div>
<div class="m" style="left:621.60px;top:501.88px;color:#111">00</div>
<div class="m" style="left:640.50px;top:501.88px;color:#111">00</div>
<div class="m" style="left:669.00px;top:501.88px;color:#111">00</div>
<div class="m" style="left:688.00px;top:501.88px;color:#111">00</div>
<div class="m" style="left:713.60px;top:501.88px;color:#111">00</div>
<div class="m" style="left:732.40px;top:501.88px;color:#111">00</div>
<div class="m" style="left:770.3px;top:501.88px;letter-spacing:-0.38px">|ʼ/.T...........</div>
<div class="m" style="left:317.5px;top:514.69px">000001d0</div>
<div class="m" style="left:387.50px;top:514.69px;color:#111">00</div>
<div class="m" style="left:406.30px;top:514.69px;color:#111">00</div>
<div class="m" style="left:431.60px;top:514.69px;color:#111">00</div>
<div class="m" style="left:450.50px;top:514.69px;color:#111">00</div>
<div class="m" style="left:479.00px;top:514.69px;color:#111">00</div>
<div class="m" style="left:498.00px;top:514.69px;color:#111">00</div>
<div class="m" style="left:523.60px;top:514.69px;color:#111">00</div>
<div class="m" style="left:542.40px;top:514.69px;color:#111">00</div>
<div class="m" style="left:577.50px;top:514.69px;color:#111">b0</div>
<div class="m" style="left:596.30px;top:514.69px;color:#111">4e</div>
<div class="m" style="left:621.60px;top:514.69px;color:#111">2c</div>
<div class="m" style="left:640.50px;top:514.69px;color:#111">00</div>
<div class="m" style="left:669.00px;top:514.69px;color:#111">28</div>
<div class="m" style="left:688.00px;top:514.69px;color:#111">00</div>
<div class="m" style="left:713.60px;top:514.69px;color:#111">00</div>
<div class="m" style="left:732.40px;top:514.69px;color:#111">00</div>
<div class="m" style="left:770.3px;top:514.69px;letter-spacing:-0.38px">........ʼN,.(...</div>
<div class="m" style="left:317.5px;top:527.50px">000001e0</div>
<div class="m" style="left:387.50px;top:527.50px;color:#111">b0</div>
<div class="m" style="left:406.30px;top:527.50px;color:#111">44</div>
<div class="m" style="left:431.60px;top:527.50px;color:#111">2c</div>
<div class="m" style="left:450.50px;top:527.50px;color:#111">00</div>
<div class="m" style="left:479.00px;top:527.50px;color:#111">38</div>
<div class="m" style="left:498.00px;top:527.50px;color:#111">01</div>
<div class="m" style="left:523.60px;top:527.50px;color:#111">00</div>
<div class="m" style="left:542.40px;top:527.50px;color:#111">00</div>
<div class="m" style="left:577.50px;top:527.50px;color:#111">00</div>
<div class="m" style="left:596.30px;top:527.50px;color:#111">00</div>
<div class="m" style="left:621.60px;top:527.50px;color:#111">00</div>
<div class="m" style="left:640.50px;top:527.50px;color:#111">00</div>
<div class="m" style="left:669.00px;top:527.50px;color:#111">00</div>
<div class="m" style="left:688.00px;top:527.50px;color:#111">00</div>
<div class="m" style="left:713.60px;top:527.50px;color:#111">00</div>
<div class="m" style="left:732.40px;top:527.50px;color:#111">00</div>
<div class="m" style="left:770.3px;top:527.50px;letter-spacing:-0.38px">ʼD,.8...........</div>
<div class="m" style="left:317.5px;top:540.31px">000001f0</div>
<div class="m" style="left:387.50px;top:540.31px;color:#111">80</div>
<div class="m" style="left:406.30px;top:540.31px;color:#111">73</div>
<div class="m" style="left:431.60px;top:540.31px;color:#111">2e</div>
<div class="m" style="left:450.50px;top:540.31px;color:#111">00</div>
<div class="m" style="left:479.00px;top:540.31px;color:#111">58</div>
<div class="m" style="left:498.00px;top:540.31px;color:#111">25</div>
<div class="m" style="left:523.60px;top:540.31px;color:#111">00</div>
<div class="m" style="left:542.40px;top:540.31px;color:#111">00</div>
<div class="m" style="left:577.50px;top:540.31px;color:#111">10</div>
<div class="m" style="left:596.30px;top:540.31px;color:#111">45</div>
<div class="m" style="left:621.60px;top:540.31px;color:#111">35</div>
<div class="m" style="left:640.50px;top:540.31px;color:#111">00</div>
<div class="m" style="left:669.00px;top:540.31px;color:#111">e0</div>
<div class="m" style="left:688.00px;top:540.31px;color:#111">06</div>
<div class="m" style="left:713.60px;top:540.31px;color:#111">00</div>
<div class="m" style="left:732.40px;top:540.31px;color:#111">00</div>
<div class="m" style="left:770.3px;top:540.31px;letter-spacing:-0.38px">Ђs..X%...E5.a...</div>
<div class="m" style="left:317.5px;top:553.12px">00000200</div>
<div class="m" style="left:387.50px;top:553.12px;color:#111">00</div>
<div class="m" style="left:406.30px;top:553.12px;color:#111">00</div>
<div class="m" style="left:431.60px;top:553.12px;color:#111">00</div>
<div class="m" style="left:450.50px;top:553.12px;color:#111">00</div>
<div class="m" style="left:479.00px;top:553.12px;color:#111">00</div>
<div class="m" style="left:498.00px;top:553.12px;color:#111">00</div>
<div class="m" style="left:523.60px;top:553.12px;color:#111">00</div>
<div class="m" style="left:542.40px;top:553.12px;color:#111">00</div>
<div class="m" style="left:577.50px;top:553.12px;color:#111">00</div>
<div class="m" style="left:596.30px;top:553.12px;color:#111">00</div>
<div class="m" style="left:621.60px;top:553.12px;color:#111">00</div>
<div class="m" style="left:640.50px;top:553.12px;color:#111">00</div>
<div class="m" style="left:669.00px;top:553.12px;color:#111">00</div>
<div class="m" style="left:688.00px;top:553.12px;color:#111">00</div>
<div class="m" style="left:713.60px;top:553.12px;color:#111">00</div>
<div class="m" style="left:732.40px;top:553.12px;color:#111">00</div>
<div class="m" style="left:770.3px;top:553.12px;letter-spacing:-0.38px">................</div>
<div class="m" style="left:317.5px;top:126px">00000158</div>
<div class="m" style="left:387.50px;top:126px">00</div>
<div class="m" style="left:406.30px;top:126px">01</div>
<div class="m" style="left:431.60px;top:126px">02</div>
<div class="m" style="left:450.50px;top:126px">03</div>
<div class="m" style="left:479.00px;top:126px">04</div>
<div class="m" style="left:498.00px;top:126px">05</div>
<div class="m" style="left:523.60px;top:126px">06</div>
<div class="m" style="left:542.40px;top:126px">07</div>
<div class="m" style="left:577.50px;top:126px">08</div>
<div class="m" style="left:596.30px;top:126px">09</div>
<div class="m" style="left:621.60px;top:126px">0a</div>
<div class="m" style="left:640.50px;top:126px">0b</div>
<div class="m" style="left:669.00px;top:126px">0c</div>
<div class="m" style="left:688.00px;top:126px">0d</div>
<div class="m" style="left:713.60px;top:126px">0e</div>
<div class="m" style="left:732.40px;top:126px">0f</div>
<div class="a" style="left:898px;top:141px;width:12px;height:424px;background:#f4f4f4;"></div>
<div class="a" style="left:900px;top:141.5px;width:7px;height:14px;background:#8a8a8a;"></div>
<div class="a" style="left:311px;top:566px;width:587px;height:14px;background:#f0f0f0;"></div>
<svg class="a" style="left:316px;top:569px" width="6" height="8"><path d="M5 0.5L1 4L5 7.5z" fill="#aaa"/></svg>
<svg class="a" style="left:880px;top:569px" width="6" height="8"><path d="M1 0.5L5 4L1 7.5z" fill="#aaa"/></svg>
<div class="a" style="left:590.5px;top:432.5px;width:312.5px;height:77px;background:#60b8d0;border-radius:5px"></div>
<div class="a" style="left:589.5px;top:433px;width:3px;height:72px;background:#a8d878;"></div>
<div class="m" style="left:597px;top:439.00px;color:#0c2030">·dos_header: IMAGE_DOS_HEADER</div>
<div class="m" style="left:597px;top:451.75px;color:#0c2030"> ·e_lfanew: long as IMAGE_NT_HEADERS *</div>
<div class="m" style="left:597px;top:464.50px;color:#0c2030">  ·OptionalHeaderSelector: anonymous case_union</div>
<div class="m" style="left:597px;top:477.25px;color:#0c2030">   ·OptionalHeader: IMAGE_OPTIONAL_HEADER64</div>
<div class="m" style="left:597px;top:490.00px;color:#0c2030">    ·SizeOfImage = 4993024: unsigned long</div>
<div class="a" style="left:2px;top:121px;width:302px;height:199px;background:#ffffff;"></div>
<div class="a" style="left:2px;top:103px;width:302px;height:17px;background:#d6dadd;"></div>
<div class="t" style="left:6.5px;top:104.80px;font-size:10.8px;color:#1a1a1a;letter-spacing:0;transform:scaleX(0.9583);">Data Inspector</div>
<svg class="a" style="left:274.5px;top:106.5px" width="11" height="11"><path d="M5.5 1.5L9.3 4.8L7 6.5L6.5 8.8L2 4.8L4.2 4.2Z" stroke="#333" stroke-width="1" fill="none" stroke-linejoin="round"/><path d="M3.8 7L1 9.8" stroke="#333" stroke-width="1.1"/></svg>
<svg class="a" style="left:292.5px;top:108.5px" width="8" height="8"><path d="M0.5 0.5L7.5 7.5M7.5 0.5L0.5 7.5" stroke="#333" stroke-width="1"/></svg>
<div class="a" style="left:2px;top:121px;width:302px;height:24px;background:#f3f3f3;"></div>
<div class="a" style="left:2px;top:121px;width:25px;height:24px;background:#3a8fb0;"></div>
<svg class="a" style="left:4.5px;top:123px" width="20.0" height="20.0" viewBox="0 0 20 20"><g transform="rotate(45 10 10)"><rect x="7" y="6" width="6" height="13" rx="1" fill="#f7c548" stroke="#b8862a"/><path d="M5 1.5h10l-2 5h-6z" fill="#f7d870" stroke="#b8862a"/><rect x="8.5" y="11" width="3" height="2" fill="#b8862a"/></g></svg>
<svg class="a" style="left:30.5px;top:123px" width="20.0" height="20.0" viewBox="0 0 20 20"><path d="M3 17V4a2.5 2.5 0 0 1 5 0v13z" fill="#3fb0c8" stroke="#1f6f8a"/><path d="M4 17l5.5-11a2.5 2.5 0 0 1 4.3 2.4L8 18z" fill="#f7c548" stroke="#b8862a"/><rect x="4" y="13" width="14" height="5" rx="2" fill="#8cc445" stroke="#4a7a20"/></svg>
<svg class="a" style="left:57px;top:123px" width="20.0" height="20.0" viewBox="0 0 20 20"><path d="M2 18l1.5-5 10.5-10.5 3.5 3.5-10.5 10.5z" fill="#3fb0c8" stroke="#1f6f8a"/><path d="M2 18l1.5-5 3.5 3.5z" fill="#f0d0a0" stroke="#b08050" stroke-width="0.6"/><path d="M13 3.5l3.5 3.5" stroke="#e04050" stroke-width="2.5"/><path d="M1.8 18.2l1-2.4 1.4 1.4z" fill="#d02030"/></svg>
<svg class="a" style="left:83.5px;top:123px" width="20.0" height="20.0" viewBox="0 0 20 20"><rect x="1.5" y="2.5" width="17" height="12" rx="1.5" fill="#3fb0c8" stroke="#1f6f8a"/><rect x="3" y="4" width="14" height="9" fill="#48bcd0"/><text x="10" y="11.5" font-size="6.5" font-family="Liberation Sans" font-weight="bold" fill="#fff" text-anchor="middle">HEX</text><path d="M7 17.5h6M10 14.5v3" stroke="#777" stroke-width="1.2"/></svg>
<div class="a" style="left:110px;top:123px;width:1px;height:20px;background:#d8d8d8;"></div>
<svg class="a" style="left:118.5px;top:123px" width="20.0" height="20.0" viewBox="0 0 20 20"><g transform="rotate(45 10 10)"><rect x="7" y="6" width="6" height="13" rx="1" fill="#f7c548" stroke="#b8862a"/><path d="M5 1.5h10l-2 5h-6z" fill="#f7d870" stroke="#b8862a"/></g><path d="M14.5 10.5v8M10.5 14.5h8" stroke="#3f8a2c" stroke-width="4"/><path d="M14.5 11.5v6M11.5 14.5h6" stroke="#8cc445" stroke-width="2.2"/></svg>
<svg class="a" style="left:145.5px;top:123px" width="20.0" height="20.0" viewBox="0 0 20 20"><g transform="rotate(45 10 10)"><rect x="7" y="6" width="6" height="13" rx="1" fill="#f0f0f0" stroke="#b8b8b8"/><path d="M5 1.5h10l-2 5h-6z" fill="#f4f4f4" stroke="#b8b8b8"/></g><path d="M12 12l6 6M18 12l-6 6" stroke="#c0c0c0" stroke-width="1.6"/></svg>
<svg class="a" style="left:171.5px;top:123px" width="20.0" height="20.0" viewBox="0 0 20 20"><g transform="rotate(45 10 10)"><rect x="7" y="6" width="6" height="13" rx="1" fill="#f0f0f0" stroke="#b8b8b8"/><path d="M5 1.5h10l-2 5h-6z" fill="#f4f4f4" stroke="#b8b8b8"/></g><path d="M14 8l4 4-2 6-3-2z" fill="#ccc" stroke="#aaa"/></svg>
<div class="t" style="left:4.7px;top:147.30px;font-size:10.3px;color:#111;letter-spacing:0;transform:scaleX(0.9092);">Type</div>
<div class="t" style="left:110px;top:147.30px;font-size:10.3px;color:#111;letter-spacing:0;transform:scaleX(0.8875);">Value</div>
<div class="a" style="left:106px;top:145px;width:1px;height:15px;background:#e8e8e8;"></div>
<div class="a" style="left:193px;top:145px;width:1px;height:15px;background:#e8e8e8;"></div>
<div class="a" style="left:2px;top:160.5px;width:290px;height:15.5px;background:#e3eef8;"></div>
<div class="t" style="left:7.6px;top:162.50px;font-size:10.8px;color:#2a5a8a;letter-spacing:0;transform:scaleX(0.9416);">Standard types</div>
<svg class="a" style="left:277px;top:166px" width="9" height="6"><path d="M1 5L4.5 1.5L8 5" stroke="#1a3a5a" stroke-width="1.6" fill="none"/></svg>
<div class="a" style="left:2px;top:176.5px;width:192px;height:14px;background:#ececec;"></div>
<div class="t" style="left:4.7px;top:179.30px;font-size:10.3px;color:#111;letter-spacing:0;transform:scaleX(0.8178);">BYTE</div>
<div class="t" style="left:110px;top:179.30px;font-size:10.3px;color:#111;letter-spacing:0;transform:scaleX(0.9005);">0</div>
<div class="t" style="left:4.7px;top:193.24px;font-size:10.3px;color:#111;letter-spacing:0;transform:scaleX(0.9005);">USHORT</div>
<div class="t" style="left:110px;top:193.24px;font-size:10.3px;color:#111;letter-spacing:0;transform:scaleX(0.9005);">12288</div>
<div class="t" style="left:4.7px;top:207.18px;font-size:10.3px;color:#111;letter-spacing:0;transform:scaleX(0.9005);">UINT</div>
<div class="t" style="left:110px;top:207.18px;font-size:10.3px;color:#111;letter-spacing:0;transform:scaleX(0.9005);">4993024</div>
<div class="t" style="left:4.7px;top:221.12px;font-size:10.3px;color:#111;letter-spacing:0;transform:scaleX(0.8098);">ULONGLONG</div>
<div class="t" style="left:110px;top:221.12px;font-size:10.3px;color:#111;letter-spacing:0;transform:scaleX(0.8605);">17592191037440</div>
<div class="t" style="left:4.7px;top:235.06px;font-size:10.3px;color:#111;letter-spacing:0;transform:scaleX(0.9005);">char</div>
<div class="t" style="left:110px;top:235.06px;font-size:10.3px;color:#111;letter-spacing:0;transform:scaleX(0.9005);">\0</div>
<div class="t" style="left:4.7px;top:249.00px;font-size:10.3px;color:#111;letter-spacing:0;transform:scaleX(0.9005);">wchar_t</div>
<div class="t" style="left:110px;top:249.00px;font-size:10.3px;color:#111;letter-spacing:0;transform:scaleX(0.0000);"></div>
<div class="t" style="left:4.7px;top:262.94px;font-size:10.3px;color:#111;letter-spacing:0;transform:scaleX(0.9005);">SHORT</div>
<div class="t" style="left:110px;top:262.94px;font-size:10.3px;color:#111;letter-spacing:0;transform:scaleX(0.9005);">12288</div>
<div class="t" style="left:4.7px;top:276.88px;font-size:10.3px;color:#111;letter-spacing:0;transform:scaleX(0.9005);">INT</div>
<div class="t" style="left:110px;top:276.88px;font-size:10.3px;color:#111;letter-spacing:0;transform:scaleX(0.9005);">4993024</div>
<div class="t" style="left:4.7px;top:290.82px;font-size:10.3px;color:#111;letter-spacing:0;transform:scaleX(0.9005);">LONGLONG</div>
<div class="t" style="left:110px;top:290.82px;font-size:10.3px;color:#111;letter-spacing:0;transform:scaleX(0.8605);">17592191037440</div>
<div class="t" style="left:4.7px;top:304.76px;font-size:10.3px;color:#111;letter-spacing:0;transform:scaleX(0.9005);">float</div>
<div class="t" style="left:110px;top:304.76px;font-size:10.3px;color:#111;letter-spacing:0;transform:scaleX(0.8824);">6,99671554e-39</div>
<div class="a" style="left:292px;top:145px;width:12px;height:175px;background:#f2f2f2;"></div>
<div class="a" style="left:294.5px;top:159.5px;width:7px;height:77px;background:#8a8a8a;"></div>
<div class="a" style="left:2px;top:320px;width:302px;height:23px;background:#f0f0f0;border-top:1px solid #dcdcdc"></div>
<svg class="a" style="left:4.5px;top:323.2px" width="16.4" height="16.4" viewBox="0 0 20 20"><rect x="6.5" y="1.5" width="12" height="12" rx="1" fill="#fff" stroke="#888"/><rect x="7" y="2" width="11" height="3" fill="#8cc445"/><path d="M1.5 8.5h5l1.5 1.5h6v8.5h-12.5z" fill="#f7c548" stroke="#b8862a"/></svg>
<div class="t" style="left:22.6px;top:324.50px;font-size:10.8px;color:#111;letter-spacing:0;transform:scaleX(0.8988);">Explore...</div>
<svg class="a" style="left:71.5px;top:323.2px" width="16.4" height="16.4" viewBox="0 0 20 20"><rect x="6.5" y="1.5" width="12" height="12" rx="1" fill="#fff" stroke="#888"/><rect x="7" y="2" width="11" height="3" fill="#8cc445"/><path d="M1.5 8.5h5l1.5 1.5h6v8.5h-12.5z" fill="#f7c548" stroke="#b8862a"/></svg>
<div class="t" style="left:88.4px;top:324.50px;font-size:10.8px;color:#111;letter-spacing:0;transform:scaleX(0.8988);">Explore...</div>
<svg class="a" style="left:136.5px;top:323.2px" width="16.4" height="16.4" viewBox="0 0 20 20"><ellipse cx="8" cy="4" rx="6.5" ry="2.5" fill="#f7e090" stroke="#8a7a50"/><path d="M1.5 4v10c0 1.5 3 2.5 6.5 2.5s6.5-1 6.5-2.5V4" fill="#f7e090" stroke="#8a7a50"/><path d="M1.5 9c0 1.5 3 2.5 6.5 2.5s6.5-1 6.5-2.5" fill="none" stroke="#8a7a50"/><path d="M11 10l7 3-3 1 2 3-1.5 1-2-3-2 2z" fill="#fff" stroke="#333" stroke-width="0.8"/></svg>
<div class="t" style="left:155px;top:324.50px;font-size:10.8px;color:#111;letter-spacing:0;transform:scaleX(0.9227);">Volum...</div>
<svg class="a" style="left:198.5px;top:323.2px" width="16.4" height="16.4" viewBox="0 0 20 20"><rect x="1.5" y="1.5" width="8" height="8" fill="#3fb0c8" stroke="#1f6f8a"/><rect x="10.5" y="10.5" width="8" height="8" fill="#3fb0c8" stroke="#1f6f8a"/><rect x="1.5" y="10.5" width="8" height="8" fill="#f7c548" stroke="#b8862a"/><rect x="10.5" y="1.5" width="8" height="8" fill="#f7c548" stroke="#b8862a"/></svg>
<div class="t" style="left:216.8px;top:324.50px;font-size:10.8px;color:#111;letter-spacing:0;transform:scaleX(0.8389);">Base...</div>
<div class="a" style="left:248px;top:320px;width:53px;height:23px;background:#ffffff;"></div>
<svg class="a" style="left:251.5px;top:323.2px" width="16.4" height="16.4" viewBox="0 0 20 20"><rect x="5.5" y="1.5" width="13" height="15" rx="1" fill="#fff" stroke="#888"/><rect x="6" y="2" width="12" height="3" fill="#8cc445"/><g transform="rotate(45 7 12)"><rect x="5" y="9" width="4" height="9" rx="1" fill="#f7c548" stroke="#b8862a"/><path d="M3.5 5.5h7l-1.5 3.5h-4z" fill="#f7d870" stroke="#b8862a"/></g></svg>
<div class="t" style="left:270px;top:324.50px;font-size:10.8px;color:#111;letter-spacing:0;transform:scaleX(0.8959);">Data...</div>
<div class="a" style="left:2px;top:345px;width:302px;height:17px;background:#d6dadd;"></div>
<div class="t" style="left:6.5px;top:346.80px;font-size:10.8px;color:#1a1a1a;letter-spacing:0;transform:scaleX(0.9303);">Statistics</div>
<svg class="a" style="left:274.5px;top:348.5px" width="11" height="11"><path d="M5.5 1.5L9.3 4.8L7 6.5L6.5 8.8L2 4.8L4.2 4.2Z" stroke="#333" stroke-width="1" fill="none" stroke-linejoin="round"/><path d="M3.8 7L1 9.8" stroke="#333" stroke-width="1.1"/></svg>
<svg class="a" style="left:292.5px;top:350.5px" width="8" height="8"><path d="M0.5 0.5L7.5 7.5M7.5 0.5L0.5 7.5" stroke="#333" stroke-width="1"/></svg>
<div class="a" style="left:4.5px;top:366.5px;width:102.5px;height:17.5px;background:#ffffff;border:1px solid #e0e0e0"></div>
<div class="t" style="left:7.0px;top:368.25px;font-size:10.8px;color:#000;letter-spacing:0;transform:scaleX(0.9839);">Whole Document</div>
<svg class="a" style="left:96.0px;top:373.25px" width="8" height="5"><path d="M0.5 0.5L4 4L7.5 0.5" stroke="#777" fill="none"/></svg>
<svg class="a" style="left:116.5px;top:364.5px" width="20.0" height="20.0" viewBox="0 0 20 20"><circle cx="10" cy="10" r="8.5" fill="#8cc445" stroke="#4a8a20"/><path d="M6 10.5a4 4 0 0 1 6.5-4M14 9.5a4 4 0 0 1-6.5 4" stroke="#fff" stroke-width="2" fill="none"/><path d="M12 4.5l1.5 2.5-3 .5zM8 15.5l-1.5-2.5 3-.5z" fill="#fff"/></svg>
<div class="a" style="left:143px;top:366px;width:1px;height:18px;background:#d8d8d8;"></div>
<svg class="a" style="left:151.5px;top:364.5px" width="20.0" height="20.0" viewBox="0 0 20 20"><rect x="1.5" y="3.5" width="17" height="14" rx="1.5" fill="#f7e090" stroke="#8a7a50"/><path d="M3.5 6.5h5M11.5 6.5h5M3.5 10.5h5M11.5 10.5h5M3.5 14.5h5M11.5 14.5h5" stroke="#e8a830" stroke-width="2"/></svg>
<div class="a" style="left:180px;top:366px;width:1px;height:18px;background:#d8d8d8;"></div>
<svg class="a" style="left:187px;top:364.5px" width="20.0" height="20.0" viewBox="0 0 20 20"><g transform="rotate(-45 10 10)"><rect x="1" y="6.5" width="18" height="7" rx="3.5" fill="#8cc445" stroke="#4a7a20"/><path d="M1 10a3.5 3.5 0 0 1 3.5-3.5H10v7H4.5A3.5 3.5 0 0 1 1 10z" fill="#3fb0c8" stroke="#1f6f8a"/></g><path d="M11 10l7 3-3 1 2 3-1.5 1-2-3-2 2z" fill="#fff" stroke="#333" stroke-width="0.8"/></svg>
<div class="a" style="left:211px;top:362.5px;width:24.5px;height:23px;background:#3a8fb0;"></div>
<svg class="a" style="left:213px;top:364px" width="20.0" height="20.0" viewBox="0 0 20 20"><rect x="2.5" y="10" width="4" height="8" fill="#8cc445" stroke="#4a7a20" stroke-width="0.8"/><rect x="8" y="3" width="4" height="15" fill="#3fb0c8" stroke="#1f6f8a" stroke-width="0.8"/><rect x="13.5" y="7" width="4" height="11" fill="#f7c548" stroke="#b8862a" stroke-width="0.8"/></svg>
<div class="a" style="left:241px;top:366px;width:1px;height:18px;background:#d8d8d8;"></div>
<div class="t" style="left:293px;top:365.00px;font-size:11px;color:#555;letter-spacing:0;transform:scaleX(0.9251);">»</div>
<div class="a" style="left:3px;top:386.5px;width:210px;height:194px;background:#ffffff;border:1px solid #c8c8c8"></div>
<div class="t" style="left:0px;width:39.4px;text-align:center;top:387.3px;font-size:10.3px;letter-spacing:-0.1px">400000</div>
<div class="t" style="left:0px;width:39.4px;text-align:center;top:421.4px;font-size:10.3px;letter-spacing:-0.1px">320000</div>
<div class="t" style="left:0px;width:39.4px;text-align:center;top:455.2px;font-size:10.3px;letter-spacing:-0.1px">240000</div>
<div class="t" style="left:0px;width:39.4px;text-align:center;top:489.4px;font-size:10.3px;letter-spacing:-0.1px">160000</div>
<div class="t" style="left:0px;width:39.4px;text-align:center;top:523.2px;font-size:10.3px;letter-spacing:-0.1px">80000</div>
<div class="t" style="left:0px;width:39.4px;text-align:center;top:557.6px;font-size:10.3px;letter-spacing:-0.1px">0</div>
<div class="a" style="left:38px;top:392px;width:1px;height:171px;background:#c8c8c8;"></div>
<div class="t" style="left:18px;width:40px;text-align:center;top:564.3px;font-size:10.3px;letter-spacing:-0.1px">0</div>
<div class="t" style="left:59px;width:40px;text-align:center;top:564.3px;font-size:10.3px;letter-spacing:-0.1px">62</div>
<div class="t" style="left:100.7px;width:40px;text-align:center;top:564.3px;font-size:10.3px;letter-spacing:-0.1px">125</div>
<div class="t" style="left:141.5px;width:40px;text-align:center;top:564.3px;font-size:10.3px;letter-spacing:-0.1px">187</div>
<div class="t" style="left:182.8px;width:40px;text-align:center;top:564.3px;font-size:10.3px;letter-spacing:-0.1px">250</div>
<svg class="a" style="left:0px;top:386px" width="213" height="194" viewBox="0 0 213 194"><g transform="translate(0,-386)"><rect x="38.00" y="552" width="0.8" height="11" fill="#2a6ab0" opacity="0.85"/><rect x="38.65" y="553" width="0.8" height="10" fill="#2a6ab0" opacity="0.85"/><rect x="39.30" y="556" width="0.8" height="7" fill="#2a6ab0" opacity="0.85"/><rect x="39.95" y="554" width="0.8" height="9" fill="#2a6ab0" opacity="0.85"/><rect x="40.60" y="556" width="0.8" height="7" fill="#2a6ab0" opacity="0.85"/><rect x="41.25" y="551" width="0.8" height="12" fill="#2a6ab0" opacity="0.85"/><rect x="41.90" y="552" width="0.8" height="11" fill="#2a6ab0" opacity="0.85"/><rect x="42.55" y="555" width="0.8" height="8" fill="#2a6ab0" opacity="0.85"/><rect x="43.20" y="553" width="0.8" height="10" fill="#2a6ab0" opacity="0.85"/><rect x="43.85" y="554" width="0.8" height="9" fill="#2a6ab0" opacity="0.85"/><rect x="44.50" y="560" width="0.8" height="3" fill="#2a6ab0" opacity="0.85"/><rect x="45.15" y="556" width="0.8" height="7" fill="#2a6ab0" opacity="0.85"/><rect x="45.80" y="560" width="0.8" height="3" fill="#2a6ab0" opacity="0.85"/><rect x="46.46" y="559" width="0.8" height="4" fill="#2a6ab0" opacity="0.85"/><rect x="47.11" y="560" width="0.8" height="3" fill="#2a6ab0" opacity="0.85"/><rect x="47.76" y="559" width="0.8" height="4" fill="#2a6ab0" opacity="0.85"/><rect x="48.41" y="558" width="0.8" height="5" fill="#2a6ab0" opacity="0.85"/><rect x="49.06" y="556" width="0.8" height="7" fill="#2a6ab0" opacity="0.85"/><rect x="49.71" y="559" width="0.8" height="4" fill="#2a6ab0" opacity="0.85"/><rect x="50.36" y="560" width="0.8" height="3" fill="#2a6ab0" opacity="0.85"/><rect x="51.01" y="558" width="0.8" height="5" fill="#2a6ab0" opacity="0.85"/><rect x="51.66" y="559" width="0.8" height="4" fill="#2a6ab0" opacity="0.85"/><rect x="52.31" y="560" width="0.8" height="3" fill="#2a6ab0" opacity="0.85"/><rect x="52.96" y="559" width="0.8" height="4" fill="#2a6ab0" opacity="0.85"/><rect x="53.61" y="557" width="0.8" height="6" fill="#2a6ab0" opacity="0.85"/><rect x="54.26" y="560" width="0.8" height="3" fill="#2a6ab0" opacity="0.85"/><rect x="54.91" y="560" width="0.8" height="3" fill="#2a6ab0" opacity="0.85"/><rect x="55.56" y="560" width="0.8" height="3" fill="#2a6ab0" opacity="0.85"/><rect x="56.21" y="559" width="0.8" height="4" fill="#2a6ab0" opacity="0.85"/><rect x="56.86" y="555" width="0.8" height="8" fill="#2a6ab0" opacity="0.85"/><rect x="57.51" y="556" width="0.8" height="7" fill="#2a6ab0" opacity="0.85"/><rect x="58.16" y="557" width="0.8" height="6" fill="#2a6ab0" opacity="0.85"/><rect x="58.81" y="555" width="0.8" height="8" fill="#2a6ab0" opacity="0.85"/><rect x="59.46" y="555" width="0.8" height="8" fill="#2a6ab0" opacity="0.85"/><rect x="60.11" y="557" width="0.8" height="6" fill="#2a6ab0" opacity="0.85"/><rect x="60.76" y="558" width="0.8" height="5" fill="#2a6ab0" opacity="0.85"/><rect x="61.41" y="559" width="0.8" height="4" fill="#2a6ab0" opacity="0.85"/><rect x="62.06" y="559" width="0.8" height="4" fill="#2a6ab0" opacity="0.85"/><rect x="62.71" y="559" width="0.8" height="4" fill="#2a6ab0" opacity="0.85"/><rect x="63.37" y="560" width="0.8" height="3" fill="#2a6ab0" opacity="0.85"/><rect x="64.02" y="558" width="0.8" height="5" fill="#2a6ab0" opacity="0.85"/><rect x="64.67" y="555" width="0.8" height="8" fill="#2a6ab0" opacity="0.85"/><rect x="65.32" y="557" width="0.8" height="6" fill="#2a6ab0" opacity="0.85"/><rect x="65.97" y="555" width="0.8" height="8" fill="#2a6ab0" opacity="0.85"/><rect x="66.62" y="558" width="0.8" height="5" fill="#2a6ab0" opacity="0.85"/><rect x="67.27" y="560" width="0.8" height="3" fill="#2a6ab0" opacity="0.85"/><rect x="67.92" y="560" width="0.8" height="3" fill="#2a6ab0" opacity="0.85"/><rect x="68.57" y="556" width="0.8" height="7" fill="#2a6ab0" opacity="0.85"/><rect x="69.22" y="559" width="0.8" height="4" fill="#2a6ab0" opacity="0.85"/><rect x="69.87" y="557" width="0.8" height="6" fill="#2a6ab0" opacity="0.85"/><rect x="70.52" y="559" width="0.8" height="4" fill="#2a6ab0" opacity="0.85"/><rect x="71.17" y="555" width="0.8" height="8" fill="#2a6ab0" opacity="0.85"/><rect x="71.82" y="556" width="0.8" height="7" fill="#2a6ab0" opacity="0.85"/><rect x="72.47" y="560" width="0.8" height="3" fill="#2a6ab0" opacity="0.85"/><rect x="73.12" y="560" width="0.8" height="3" fill="#2a6ab0" opacity="0.85"/><rect x="73.77" y="557" width="0.8" height="6" fill="#2a6ab0" opacity="0.85"/><rect x="74.42" y="557" width="0.8" height="6" fill="#2a6ab0" opacity="0.85"/><rect x="75.07" y="557" width="0.8" height="6" fill="#2a6ab0" opacity="0.85"/><rect x="75.72" y="555" width="0.8" height="8" fill="#2a6ab0" opacity="0.85"/><rect x="76.37" y="555" width="0.8" height="8" fill="#2a6ab0" opacity="0.85"/><rect x="77.02" y="560" width="0.8" height="3" fill="#2a6ab0" opacity="0.85"/><rect x="77.67" y="560" width="0.8" height="3" fill="#2a6ab0" opacity="0.85"/><rect x="78.32" y="558" width="0.8" height="5" fill="#2a6ab0" opacity="0.85"/><rect x="78.97" y="555" width="0.8" height="8" fill="#2a6ab0" opacity="0.85"/><rect x="79.62" y="560" width="0.8" height="3" fill="#2a6ab0" opacity="0.85"/><rect x="80.28" y="560" width="0.8" height="3" fill="#2a6ab0" opacity="0.85"/><rect x="80.93" y="558" width="0.8" height="5" fill="#2a6ab0" opacity="0.85"/><rect x="81.58" y="555" width="0.8" height="8" fill="#2a6ab0" opacity="0.85"/><rect x="82.23" y="558" width="0.8" height="5" fill="#2a6ab0" opacity="0.85"/><rect x="82.88" y="556" width="0.8" height="7" fill="#2a6ab0" opacity="0.85"/><rect x="83.53" y="557" width="0.8" height="6" fill="#2a6ab0" opacity="0.85"/><rect x="84.18" y="560" width="0.8" height="3" fill="#2a6ab0" opacity="0.85"/><rect x="84.83" y="555" width="0.8" height="8" fill="#2a6ab0" opacity="0.85"/><rect x="85.48" y="557" width="0.8" height="6" fill="#2a6ab0" opacity="0.85"/><rect x="86.13" y="559" width="0.8" height="4" fill="#2a6ab0" opacity="0.85"/><rect x="86.78" y="560" width="0.8" height="3" fill="#2a6ab0" opacity="0.85"/><rect x="87.43" y="555" width="0.8" height="8" fill="#2a6ab0" opacity="0.85"/><rect x="88.08" y="560" width="0.8" height="3" fill="#2a6ab0" opacity="0.85"/><rect x="88.73" y="559" width="0.8" height="4" fill="#2a6ab0" opacity="0.85"/><rect x="89.38" y="558" width="0.8" height="5" fill="#2a6ab0" opacity="0.85"/><rect x="90.03" y="559" width="0.8" height="4" fill="#2a6ab0" opacity="0.85"/><rect x="90.68" y="559" width="0.8" height="4" fill="#2a6ab0" opacity="0.85"/><rect x="91.33" y="556" width="0.8" height="7" fill="#2a6ab0" opacity="0.85"/><rect x="91.98" y="556" width="0.8" height="7" fill="#2a6ab0" opacity="0.85"/><rect x="92.63" y="555" width="0.8" height="8" fill="#2a6ab0" opacity="0.85"/><rect x="93.28" y="560" width="0.8" height="3" fill="#2a6ab0" opacity="0.85"/><rect x="93.93" y="559" width="0.8" height="4" fill="#2a6ab0" opacity="0.85"/><rect x="94.58" y="555" width="0.8" height="8" fill="#2a6ab0" opacity="0.85"/><rect x="95.23" y="556" width="0.8" height="7" fill="#2a6ab0" opacity="0.85"/><rect x="95.88" y="558" width="0.8" height="5" fill="#2a6ab0" opacity="0.85"/><rect x="96.54" y="559" width="0.8" height="4" fill="#2a6ab0" opacity="0.85"/><rect x="97.19" y="556" width="0.8" height="7" fill="#2a6ab0" opacity="0.85"/><rect x="97.84" y="558" width="0.8" height="5" fill="#2a6ab0" opacity="0.85"/><rect x="98.49" y="556" width="0.8" height="7" fill="#2a6ab0" opacity="0.85"/><rect x="99.14" y="557" width="0.8" height="6" fill="#2a6ab0" opacity="0.85"/><rect x="99.79" y="556" width="0.8" height="7" fill="#2a6ab0" opacity="0.85"/><rect x="100.44" y="559" width="0.8" height="4" fill="#2a6ab0" opacity="0.85"/><rect x="101.09" y="559" width="0.8" height="4" fill="#2a6ab0" opacity="0.85"/><rect x="101.74" y="560" width="0.8" height="3" fill="#2a6ab0" opacity="0.85"/><rect x="102.39" y="559" width="0.8" height="4" fill="#2a6ab0" opacity="0.85"/><rect x="103.04" y="559" width="0.8" height="4" fill="#2a6ab0" opacity="0.85"/><rect x="103.69" y="559" width="0.8" height="4" fill="#2a6ab0" opacity="0.85"/><rect x="104.34" y="559" width="0.8" height="4" fill="#2a6ab0" opacity="0.85"/><rect x="104.99" y="560" width="0.8" height="3" fill="#2a6ab0" opacity="0.85"/><rect x="105.64" y="555" width="0.8" height="8" fill="#2a6ab0" opacity="0.85"/><rect x="106.29" y="559" width="0.8" height="4" fill="#2a6ab0" opacity="0.85"/><rect x="106.94" y="558" width="0.8" height="5" fill="#2a6ab0" opacity="0.85"/><rect x="107.59" y="558" width="0.8" height="5" fill="#2a6ab0" opacity="0.85"/><rect x="108.24" y="560" width="0.8" height="3" fill="#2a6ab0" opacity="0.85"/><rect x="108.89" y="559" width="0.8" height="4" fill="#2a6ab0" opacity="0.85"/><rect x="109.54" y="556" width="0.8" height="7" fill="#2a6ab0" opacity="0.85"/><rect x="110.19" y="557" width="0.8" height="6" fill="#2a6ab0" opacity="0.85"/><rect x="110.84" y="557" width="0.8" height="6" fill="#2a6ab0" opacity="0.85"/><rect x="111.49" y="559" width="0.8" height="4" fill="#2a6ab0" opacity="0.85"/><rect x="112.14" y="560" width="0.8" height="3" fill="#2a6ab0" opacity="0.85"/><rect x="112.79" y="555" width="0.8" height="8" fill="#2a6ab0" opacity="0.85"/><rect x="113.45" y="556" width="0.8" height="7" fill="#2a6ab0" opacity="0.85"/><rect x="114.10" y="556" width="0.8" height="7" fill="#2a6ab0" opacity="0.85"/><rect x="114.75" y="556" width="0.8" height="7" fill="#2a6ab0" opacity="0.85"/><rect x="115.40" y="556" width="0.8" height="7" fill="#2a6ab0" opacity="0.85"/><rect x="116.05" y="560" width="0.8" height="3" fill="#2a6ab0" opacity="0.85"/><rect x="116.70" y="555" width="0.8" height="8" fill="#2a6ab0" opacity="0.85"/><rect x="117.35" y="556" width="0.8" height="7" fill="#2a6ab0" opacity="0.85"/><rect x="118.00" y="560" width="0.8" height="3" fill="#2a6ab0" opacity="0.85"/><rect x="118.65" y="559" width="0.8" height="4" fill="#2a6ab0" opacity="0.85"/><rect x="119.30" y="560" width="0.8" height="3" fill="#2a6ab0" opacity="0.85"/><rect x="119.95" y="559" width="0.8" height="4" fill="#2a6ab0" opacity="0.85"/><rect x="120.60" y="555" width="0.8" height="8" fill="#2a6ab0" opacity="0.85"/><rect x="121.25" y="559" width="0.8" height="4" fill="#2a6ab0" opacity="0.85"/><rect x="121.90" y="560" width="0.8" height="3" fill="#2a6ab0" opacity="0.85"/><rect x="122.55" y="557" width="0.8" height="6" fill="#2a6ab0" opacity="0.85"/><rect x="123.20" y="560" width="0.8" height="3" fill="#2a6ab0" opacity="0.85"/><rect x="123.85" y="560" width="0.8" height="3" fill="#2a6ab0" opacity="0.85"/><rect x="124.50" y="560" width="0.8" height="3" fill="#2a6ab0" opacity="0.85"/><rect x="125.15" y="559" width="0.8" height="4" fill="#2a6ab0" opacity="0.85"/><rect x="125.80" y="560" width="0.8" height="3" fill="#2a6ab0" opacity="0.85"/><rect x="126.45" y="557" width="0.8" height="6" fill="#2a6ab0" opacity="0.85"/><rect x="127.10" y="560" width="0.8" height="3" fill="#2a6ab0" opacity="0.85"/><rect x="127.75" y="560" width="0.8" height="3" fill="#2a6ab0" opacity="0.85"/><rect x="128.40" y="559" width="0.8" height="4" fill="#2a6ab0" opacity="0.85"/><rect x="129.05" y="556" width="0.8" height="7" fill="#2a6ab0" opacity="0.85"/><rect x="129.71" y="559" width="0.8" height="4" fill="#2a6ab0" opacity="0.85"/><rect x="130.36" y="558" width="0.8" height="5" fill="#2a6ab0" opacity="0.85"/><rect x="131.01" y="557" width="0.8" height="6" fill="#2a6ab0" opacity="0.85"/><rect x="131.66" y="557" width="0.8" height="6" fill="#2a6ab0" opacity="0.85"/><rect x="132.31" y="555" width="0.8" height="8" fill="#2a6ab0" opacity="0.85"/><rect x="132.96" y="560" width="0.8" height="3" fill="#2a6ab0" opacity="0.85"/><rect x="133.61" y="560" width="0.8" height="3" fill="#2a6ab0" opacity="0.85"/><rect x="134.26" y="555" width="0.8" height="8" fill="#2a6ab0" opacity="0.85"/><rect x="134.91" y="555" width="0.8" height="8" fill="#2a6ab0" opacity="0.85"/><rect x="135.56" y="555" width="0.8" height="8" fill="#2a6ab0" opacity="0.85"/><rect x="136.21" y="555" width="0.8" height="8" fill="#2a6ab0" opacity="0.85"/><rect x="136.86" y="558" width="0.8" height="5" fill="#2a6ab0" opacity="0.85"/><rect x="137.51" y="560" width="0.8" height="3" fill="#2a6ab0" opacity="0.85"/><rect x="138.16" y="559" width="0.8" height="4" fill="#2a6ab0" opacity="0.85"/><rect x="138.81" y="560" width="0.8" height="3" fill="#2a6ab0" opacity="0.85"/><rect x="139.46" y="557" width="0.8" height="6" fill="#2a6ab0" opacity="0.85"/><rect x="140.11" y="558" width="0.8" height="5" fill="#2a6ab0" opacity="0.85"/><rect x="140.76" y="555" width="0.8" height="8" fill="#2a6ab0" opacity="0.85"/><rect x="141.41" y="559" width="0.8" height="4" fill="#2a6ab0" opacity="0.85"/><rect x="142.06" y="560" width="0.8" height="3" fill="#2a6ab0" opacity="0.85"/><rect x="142.71" y="559" width="0.8" height="4" fill="#2a6ab0" opacity="0.85"/><rect x="143.36" y="557" width="0.8" height="6" fill="#2a6ab0" opacity="0.85"/><rect x="144.01" y="559" width="0.8" height="4" fill="#2a6ab0" opacity="0.85"/><rect x="144.66" y="560" width="0.8" height="3" fill="#2a6ab0" opacity="0.85"/><rect x="145.31" y="558" width="0.8" height="5" fill="#2a6ab0" opacity="0.85"/><rect x="145.96" y="560" width="0.8" height="3" fill="#2a6ab0" opacity="0.85"/><rect x="146.62" y="558" width="0.8" height="5" fill="#2a6ab0" opacity="0.85"/><rect x="147.27" y="557" width="0.8" height="6" fill="#2a6ab0" opacity="0.85"/><rect x="147.92" y="559" width="0.8" height="4" fill="#2a6ab0" opacity="0.85"/><rect x="148.57" y="557" width="0.8" height="6" fill="#2a6ab0" opacity="0.85"/><rect x="149.22" y="559" width="0.8" height="4" fill="#2a6ab0" opacity="0.85"/><rect x="149.87" y="557" width="0.8" height="6" fill="#2a6ab0" opacity="0.85"/><rect x="150.52" y="559" width="0.8" height="4" fill="#2a6ab0" opacity="0.85"/><rect x="151.17" y="559" width="0.8" height="4" fill="#2a6ab0" opacity="0.85"/><rect x="151.82" y="559" width="0.8" height="4" fill="#2a6ab0" opacity="0.85"/><rect x="152.47" y="556" width="0.8" height="7" fill="#2a6ab0" opacity="0.85"/><rect x="153.12" y="559" width="0.8" height="4" fill="#2a6ab0" opacity="0.85"/><rect x="153.77" y="559" width="0.8" height="4" fill="#2a6ab0" opacity="0.85"/><rect x="154.42" y="555" width="0.8" height="8" fill="#2a6ab0" opacity="0.85"/><rect x="155.07" y="557" width="0.8" height="6" fill="#2a6ab0" opacity="0.85"/><rect x="155.72" y="560" width="0.8" height="3" fill="#2a6ab0" opacity="0.85"/><rect x="156.37" y="560" width="0.8" height="3" fill="#2a6ab0" opacity="0.85"/><rect x="157.02" y="558" width="0.8" height="5" fill="#2a6ab0" opacity="0.85"/><rect x="157.67" y="555" width="0.8" height="8" fill="#2a6ab0" opacity="0.85"/><rect x="158.32" y="558" width="0.8" height="5" fill="#2a6ab0" opacity="0.85"/><rect x="158.97" y="559" width="0.8" height="4" fill="#2a6ab0" opacity="0.85"/><rect x="159.62" y="557" width="0.8" height="6" fill="#2a6ab0" opacity="0.85"/><rect x="160.27" y="555" width="0.8" height="8" fill="#2a6ab0" opacity="0.85"/><rect x="160.92" y="557" width="0.8" height="6" fill="#2a6ab0" opacity="0.85"/><rect x="161.57" y="557" width="0.8" height="6" fill="#2a6ab0" opacity="0.85"/><rect x="162.22" y="560" width="0.8" height="3" fill="#2a6ab0" opacity="0.85"/><rect x="162.88" y="559" width="0.8" height="4" fill="#2a6ab0" opacity="0.85"/><rect x="163.53" y="560" width="0.8" height="3" fill="#2a6ab0" opacity="0.85"/><rect x="164.18" y="559" width="0.8" height="4" fill="#2a6ab0" opacity="0.85"/><rect x="164.83" y="555" width="0.8" height="8" fill="#2a6ab0" opacity="0.85"/><rect x="165.48" y="559" width="0.8" height="4" fill="#2a6ab0" opacity="0.85"/><rect x="166.13" y="557" width="0.8" height="6" fill="#2a6ab0" opacity="0.85"/><rect x="166.78" y="559" width="0.8" height="4" fill="#2a6ab0" opacity="0.85"/><rect x="167.43" y="555" width="0.8" height="8" fill="#2a6ab0" opacity="0.85"/><rect x="168.08" y="560" width="0.8" height="3" fill="#2a6ab0" opacity="0.85"/><rect x="168.73" y="555" width="0.8" height="8" fill="#2a6ab0" opacity="0.85"/><rect x="169.38" y="557" width="0.8" height="6" fill="#2a6ab0" opacity="0.85"/><rect x="170.03" y="560" width="0.8" height="3" fill="#2a6ab0" opacity="0.85"/><rect x="170.68" y="560" width="0.8" height="3" fill="#2a6ab0" opacity="0.85"/><rect x="171.33" y="556" width="0.8" height="7" fill="#2a6ab0" opacity="0.85"/><rect x="171.98" y="559" width="0.8" height="4" fill="#2a6ab0" opacity="0.85"/><rect x="172.63" y="555" width="0.8" height="8" fill="#2a6ab0" opacity="0.85"/><rect x="173.28" y="559" width="0.8" height="4" fill="#2a6ab0" opacity="0.85"/><rect x="173.93" y="556" width="0.8" height="7" fill="#2a6ab0" opacity="0.85"/><rect x="174.58" y="557" width="0.8" height="6" fill="#2a6ab0" opacity="0.85"/><rect x="175.23" y="560" width="0.8" height="3" fill="#2a6ab0" opacity="0.85"/><rect x="175.88" y="556" width="0.8" height="7" fill="#2a6ab0" opacity="0.85"/><rect x="176.53" y="555" width="0.8" height="8" fill="#2a6ab0" opacity="0.85"/><rect x="177.18" y="556" width="0.8" height="7" fill="#2a6ab0" opacity="0.85"/><rect x="177.83" y="560" width="0.8" height="3" fill="#2a6ab0" opacity="0.85"/><rect x="178.48" y="559" width="0.8" height="4" fill="#2a6ab0" opacity="0.85"/><rect x="179.13" y="559" width="0.8" height="4" fill="#2a6ab0" opacity="0.85"/><rect x="179.79" y="559" width="0.8" height="4" fill="#2a6ab0" opacity="0.85"/><rect x="180.44" y="560" width="0.8" height="3" fill="#2a6ab0" opacity="0.85"/><rect x="181.09" y="559" width="0.8" height="4" fill="#2a6ab0" opacity="0.85"/><rect x="181.74" y="555" width="0.8" height="8" fill="#2a6ab0" opacity="0.85"/><rect x="182.39" y="559" width="0.8" height="4" fill="#2a6ab0" opacity="0.85"/><rect x="183.04" y="555" width="0.8" height="8" fill="#2a6ab0" opacity="0.85"/><rect x="183.69" y="557" width="0.8" height="6" fill="#2a6ab0" opacity="0.85"/><rect x="184.34" y="559" width="0.8" height="4" fill="#2a6ab0" opacity="0.85"/><rect x="184.99" y="559" width="0.8" height="4" fill="#2a6ab0" opacity="0.85"/><rect x="185.64" y="560" width="0.8" height="3" fill="#2a6ab0" opacity="0.85"/><rect x="186.29" y="560" width="0.8" height="3" fill="#2a6ab0" opacity="0.85"/><rect x="186.94" y="560" width="0.8" height="3" fill="#2a6ab0" opacity="0.85"/><rect x="187.59" y="559" width="0.8" height="4" fill="#2a6ab0" opacity="0.85"/><rect x="188.24" y="556" width="0.8" height="7" fill="#2a6ab0" opacity="0.85"/><rect x="188.89" y="559" width="0.8" height="4" fill="#2a6ab0" opacity="0.85"/><rect x="189.54" y="559" width="0.8" height="4" fill="#2a6ab0" opacity="0.85"/><rect x="190.19" y="560" width="0.8" height="3" fill="#2a6ab0" opacity="0.85"/><rect x="190.84" y="558" width="0.8" height="5" fill="#2a6ab0" opacity="0.85"/><rect x="191.49" y="559" width="0.8" height="4" fill="#2a6ab0" opacity="0.85"/><rect x="192.14" y="558" width="0.8" height="5" fill="#2a6ab0" opacity="0.85"/><rect x="192.79" y="559" width="0.8" height="4" fill="#2a6ab0" opacity="0.85"/><rect x="193.44" y="557" width="0.8" height="6" fill="#2a6ab0" opacity="0.85"/><rect x="194.09" y="558" width="0.8" height="5" fill="#2a6ab0" opacity="0.85"/><rect x="194.74" y="556" width="0.8" height="7" fill="#2a6ab0" opacity="0.85"/><rect x="195.39" y="559" width="0.8" height="4" fill="#2a6ab0" opacity="0.85"/><rect x="196.04" y="560" width="0.8" height="3" fill="#2a6ab0" opacity="0.85"/><rect x="196.70" y="557" width="0.8" height="6" fill="#2a6ab0" opacity="0.85"/><rect x="197.35" y="555" width="0.8" height="8" fill="#2a6ab0" opacity="0.85"/><rect x="198.00" y="556" width="0.8" height="7" fill="#2a6ab0" opacity="0.85"/><rect x="198.65" y="559" width="0.8" height="4" fill="#2a6ab0" opacity="0.85"/><rect x="199.30" y="559" width="0.8" height="4" fill="#2a6ab0" opacity="0.85"/><rect x="199.95" y="560" width="0.8" height="3" fill="#2a6ab0" opacity="0.85"/><rect x="200.60" y="555" width="0.8" height="8" fill="#2a6ab0" opacity="0.85"/><rect x="201.25" y="559" width="0.8" height="4" fill="#2a6ab0" opacity="0.85"/><rect x="201.90" y="560" width="0.8" height="3" fill="#2a6ab0" opacity="0.85"/><rect x="202.55" y="559" width="0.8" height="4" fill="#2a6ab0" opacity="0.85"/><rect x="203.20" y="559" width="0.8" height="4" fill="#2a6ab0" opacity="0.85"/><rect x="203.85" y="559" width="0.8" height="4" fill="#2a6ab0" opacity="0.85"/><rect x="69.70" y="544.8" width="1.8" height="18.200000000000045" fill="#8fb0cf"/><rect x="81.20" y="537" width="1.8" height="26" fill="#8fb0cf"/><rect x="162.20" y="544.8" width="1.8" height="18.200000000000045" fill="#8fb0cf"/><rect x="169.90" y="516" width="1.8" height="47" fill="#8fb0cf"/><rect x="75.20" y="548" width="1.8" height="15" fill="#8fb0cf"/><rect x="43.70" y="547" width="1.8" height="16" fill="#8fb0cf"/><rect x="127.2" y="534.6" width="3" height="28.4" fill="#8fb0cf"/><rect x="37.90" y="538" width="1.1" height="25" fill="#4a7aa8"/><rect x="42.50" y="548" width="1.1" height="15" fill="#4a7aa8"/><rect x="46.80" y="538" width="1.1" height="25" fill="#4a7aa8"/><rect x="50.90" y="548" width="1.1" height="15" fill="#4a7aa8"/><rect x="57.80" y="547.3" width="1.1" height="15.700000000000045" fill="#4a7aa8"/><rect x="60.70" y="533.8" width="1.1" height="29.200000000000045" fill="#4a7aa8"/><rect x="79.30" y="546.5" width="1.1" height="16.5" fill="#4a7aa8"/><rect x="84.00" y="458.6" width="1.1" height="104.39999999999998" fill="#4a7aa8"/><rect x="86.90" y="543" width="1.1" height="20" fill="#4a7aa8"/><rect x="112.70" y="546.5" width="1.1" height="16.5" fill="#4a7aa8"/><rect x="123.20" y="545.6" width="1.1" height="17.399999999999977" fill="#4a7aa8"/><rect x="128.00" y="493.2" width="1.1" height="69.80000000000001" fill="#4a7aa8"/><rect x="188.60" y="544" width="1.1" height="19" fill="#4a7aa8"/><rect x="204.00" y="411" width="1.1" height="152" fill="#4a7aa8"/><rect x="99.50" y="553" width="1.1" height="10" fill="#4a7aa8"/><rect x="105.50" y="552" width="1.1" height="11" fill="#4a7aa8"/><rect x="139.50" y="556" width="1.1" height="7" fill="#4a7aa8"/><rect x="174.50" y="553" width="1.1" height="10" fill="#4a7aa8"/><rect x="181.50" y="554" width="1.1" height="9" fill="#4a7aa8"/><rect x="194.50" y="553" width="1.1" height="10" fill="#4a7aa8"/><rect x="39.50" y="545" width="1.1" height="18" fill="#4a7aa8"/><rect x="65.50" y="550" width="1.1" height="13" fill="#4a7aa8"/><rect x="94.50" y="552" width="1.1" height="11" fill="#4a7aa8"/><rect x="38" y="560" width="167" height="3" fill="#1f66b0"/></g></svg>
<div class="a" style="left:214px;top:386.5px;width:90px;height:194px;background:#ffffff;border:1px solid #c8c8c8"></div>
<div class="a" style="left:215.6px;top:387.4px;width:8.1px;height:8.1px;background:#e6eff5;"></div>
<div class="a" style="left:239.9px;top:395.5px;width:8.1px;height:8.1px;background:#d3dee8;"></div>
<div class="a" style="left:272.3px;top:387.4px;width:8.1px;height:8.1px;background:#eef3f7;"></div>
<div class="a" style="left:288.5px;top:395.5px;width:8.1px;height:8.1px;background:#ebf2f7;"></div>
<div class="a" style="left:288.5px;top:403.6px;width:8.1px;height:8.1px;background:#ebf2f7;"></div>
<div class="a" style="left:231.8px;top:411.7px;width:8.1px;height:8.1px;background:#cddbe5;"></div>
<div class="a" style="left:264.2px;top:419.8px;width:8.1px;height:8.1px;background:#dfe7ee;"></div>
<div class="a" style="left:280.4px;top:427.9px;width:8.1px;height:8.1px;background:#e2ebf2;"></div>
<div class="a" style="left:288.5px;top:427.9px;width:8.1px;height:8.1px;background:#e2ebf2;"></div>
<div class="a" style="left:288.5px;top:436.0px;width:8.1px;height:8.1px;background:#e6eef4;"></div>
<div class="a" style="left:223.7px;top:436.0px;width:8.1px;height:8.1px;background:#d3e4f3;"></div>
<div class="a" style="left:231.8px;top:436.0px;width:8.1px;height:8.1px;background:#e2ebf1;"></div>
<div class="a" style="left:256.1px;top:436.0px;width:8.1px;height:8.1px;background:#4a8ac8;"></div>
<div class="a" style="left:264.2px;top:436.0px;width:8.1px;height:8.1px;background:#e2f3f9;"></div>
<div class="a" style="left:223.7px;top:468.4px;width:8.1px;height:8.1px;background:#eef3f7;"></div>
<div class="a" style="left:256.1px;top:468.4px;width:8.1px;height:8.1px;background:#dfe7ee;"></div>
<div class="a" style="left:288.5px;top:476.5px;width:8.1px;height:8.1px;background:#dfe9f1;"></div>
<div class="a" style="left:215.6px;top:484.6px;width:8.1px;height:8.1px;background:#dfe7ed;"></div>
<div class="a" style="left:248.0px;top:484.6px;width:8.1px;height:8.1px;background:#cfdae4;"></div>
<div class="a" style="left:264.2px;top:484.6px;width:8.1px;height:8.1px;background:#8eadc5;"></div>
<div class="a" style="left:280.4px;top:484.6px;width:8.1px;height:8.1px;background:#d3dde7;"></div>
<div class="a" style="left:248.0px;top:525.1px;width:8.1px;height:8.1px;background:#dfe9f1;"></div>
<div class="a" style="left:256.1px;top:533.2px;width:8.1px;height:8.1px;background:#abc2d8;"></div>
<div class="a" style="left:215.6px;top:557.5px;width:8.1px;height:8.1px;background:#dfe7ef;"></div>
<div class="a" style="left:223.7px;top:573.7px;width:8.1px;height:8.1px;background:#2070b8;"></div>
<div class="a" style="left:239.9px;top:500.8px;width:8.1px;height:8.1px;background:#f0f4f8;"></div>
<div class="a" style="left:272.3px;top:460.3px;width:8.1px;height:8.1px;background:#f0f4f8;"></div>
<div class="a" style="left:231.8px;top:452.2px;width:8.1px;height:8.1px;background:#f2f6f9;"></div>
<div class="a" style="left:231.8px;top:524.6px;width:8.5px;height:8.5px;border:1px solid #8a5050"></div>
<div class="a" style="left:916px;top:121px;width:283px;height:236px;background:#ffffff;"></div>
<div class="a" style="left:916px;top:103px;width:283px;height:17px;background:#d6dadd;"></div>
<div class="t" style="left:920.5px;top:104.80px;font-size:10.8px;color:#1a1a1a;letter-spacing:0;transform:scaleX(0.9613);">History</div>
<svg class="a" style="left:1169.5px;top:106.5px" width="11" height="11"><path d="M5.5 1.5L9.3 4.8L7 6.5L6.5 8.8L2 4.8L4.2 4.2Z" stroke="#333" stroke-width="1" fill="none" stroke-linejoin="round"/><path d="M3.8 7L1 9.8" stroke="#333" stroke-width="1.1"/></svg>
<svg class="a" style="left:1187.5px;top:108.5px" width="8" height="8"><path d="M0.5 0.5L7.5 7.5M7.5 0.5L0.5 7.5" stroke="#333" stroke-width="1"/></svg>
<div class="a" style="left:916px;top:121px;width:283px;height:25px;background:#f3f3f3;"></div>
<svg class="a" style="left:918px;top:123px" width="20.0" height="20.0" viewBox="0 0 20 20"><path d="M2 2h11M2 18h11" stroke="#e8a030" stroke-width="2.5"/><path d="M3 3c0 4 3.5 5 4.5 7-1 2-4.5 3-4.5 7h9c0-4-3.5-5-4.5-7 1-2 4.5-3 4.5-7z" fill="#a8e0e0" stroke="#3a9ab0" stroke-width="0.8"/><path d="M13 11l3-3M16 8l2 3" stroke="#a06040" stroke-width="1.2"/><circle cx="13" cy="11" r="1.6" fill="#fff" stroke="#a06040"/><circle cx="16" cy="8" r="1.6" fill="#fff" stroke="#a06040"/><circle cx="18.5" cy="11.5" r="1.6" fill="#fff" stroke="#a06040"/></svg>
<div class="a" style="left:947px;top:124px;width:1px;height:19px;background:#d8d8d8;"></div>
<svg class="a" style="left:954px;top:123px" width="20.0" height="20.0" viewBox="0 0 20 20"><path d="M4 5h12l-1.5 13h-9z" fill="#ddd" stroke="#888"/><path d="M3 4.5h14M8 2.5h4" stroke="#888" stroke-width="1.4"/><path d="M7 8v8M10 8v8M13 8v8" stroke="#999"/><path d="M11 18c0-4 2-6 4-8" stroke="#e060a0" stroke-width="1.6" fill="none"/></svg>
<div class="a" style="left:980px;top:124px;width:1px;height:19px;background:#d8d8d8;"></div>
<div class="a" style="left:987px;top:121px;width:25px;height:24px;background:#3a8fb0;"></div>
<div class="a" style="left:1013.5px;top:121px;width:25px;height:24px;background:#3a8fb0;"></div>
<svg class="a" style="left:989.5px;top:123px" width="20.0" height="20.0" viewBox="0 0 20 20"><path d="M3 2v16M3 6h3M3 14h3" stroke="#f0f0f0" stroke-width="1.2" fill="none"/><rect x="6.5" y="2.5" width="11" height="7" rx="1.5" fill="#f7c548" stroke="#b8862a"/><rect x="6.5" y="10.5" width="11" height="7" rx="1.5" fill="#f7c548" stroke="#b8862a"/></svg>
<svg class="a" style="left:1016px;top:123px" width="20.0" height="20.0" viewBox="0 0 20 20"><path d="M3 2v10M3 6h3" stroke="#f0f0f0" stroke-width="1.2" fill="none"/><rect x="6.5" y="2.5" width="11" height="7" rx="1.5" fill="#f7c548" stroke="#b8862a"/><circle cx="9" cy="14" r="3" fill="#f7c548" stroke="#b8862a"/><rect x="12" y="12" width="7" height="7" rx="1" fill="#fff" stroke="#555"/><path d="M15.5 13.5v4M13.5 15.5h4" stroke="#333" stroke-width="1.2"/></svg>
<div class="a" style="left:1045px;top:124px;width:1px;height:19px;background:#d8d8d8;"></div>
<svg class="a" style="left:1052px;top:123px" width="20.0" height="20.0" viewBox="0 0 20 20"><path d="M2 2h12M2 18h12" stroke="#e8a030" stroke-width="2.5"/><path d="M3 3c0 4 3.5 5 4.5 7-1 2-4.5 3-4.5 7h9c0-4-3.5-5-4.5-7 1-2 4.5-3 4.5-7z" fill="#a8e0e0" stroke="#3a9ab0" stroke-width="0.8"/><path d="M15 2l4 4h-2.2v4h-3.6v-4h-2.2z" fill="#8cc445" stroke="#2f6a20" stroke-width="0.8"/></svg>
<svg class="a" style="left:1078.5px;top:123px" width="20.0" height="20.0" viewBox="0 0 20 20"><path d="M2 2h12M2 18h12" stroke="#e8a030" stroke-width="2.5"/><path d="M3 3c0 4 3.5 5 4.5 7-1 2-4.5 3-4.5 7h9c0-4-3.5-5-4.5-7 1-2 4.5-3 4.5-7z" fill="#a8e0e0" stroke="#3a9ab0" stroke-width="0.8"/><path d="M15 19l4-4h-2.2v-4h-3.6v4h-2.2z" fill="#f7c548" stroke="#b8862a" stroke-width="0.8"/></svg>
<div class="a" style="left:1104px;top:124px;width:1px;height:19px;background:#d8d8d8;"></div>
<svg class="a" style="left:1113px;top:123px" width="20.0" height="20.0" viewBox="0 0 20 20"><path d="M3 1.5h9l3 3v14h-12z" fill="#eee" stroke="#a0a0a0"/><path d="M5 6h7M5 9h7M5 12h5" stroke="#aaa"/><path d="M10 17l6-6 2 2-6 6h-2z" fill="#ddd" stroke="#999"/></svg>
<div class="a" style="left:916px;top:146px;width:267px;height:14px;background:#eeeeee;"></div>
<div class="a" style="left:916px;top:146px;width:46px;height:14px;background:#f6f6f6;"></div>
<svg class="a" style="left:920.3px;top:149.5px" width="8" height="8"><path d="M0.5 4.5h2.5M3 1.5v6M3 2.5h3.5v4H3" stroke="#222" stroke-width="1" fill="none"/></svg>
<div class="t" style="left:929.7px;top:146.80px;font-size:10.3px;color:#111;letter-spacing:0;transform:scaleX(0.9193);">Default</div>
<svg class="a" style="left:965.7px;top:148.7px" width="8" height="8"><path d="M0.5 4.5h2.5M3 1.5v6M3 2.5h3.5v4H3" stroke="#222" stroke-width="1" fill="none"/></svg>
<div class="t" style="left:974.3px;top:146.00px;font-size:10.3px;color:#111;letter-spacing:0;transform:scaleX(0.8976);">Branch 1</div>
<svg class="a" style="left:1018.3px;top:149.5px" width="8" height="8"><path d="M0.5 4.5h2.5M3 1.5v6M3 2.5h3.5v4H3" stroke="#222" stroke-width="1" fill="none"/></svg>
<div class="t" style="left:1027px;top:146.80px;font-size:10.3px;color:#111;letter-spacing:0;transform:scaleX(0.9048);">Branch 2</div>
<div class="a" style="left:924px;top:175px;width:1px;height:90px;background:#cfcfcf;"></div>
<div class="a" style="left:946px;top:197px;width:1px;height:53px;background:#cfcfcf;"></div>
<div class="a" style="left:946px;top:272px;width:1px;height:38px;background:#cfcfcf;"></div>
<div class="a" style="left:933px;top:167px;width:42px;height:15px;background:#ebebeb;"></div>
<svg class="a" style="left:932px;top:165px" width="20" height="20" viewBox="0 0 20 20"><path d="M1.5 4.5h6l1.5 2h7.5v10h-15z" fill="#f7c548" stroke="#c9962a"/><path d="M13 1l3.5 3.5h-2v3h-3v-3h-2z" fill="#7fc050" stroke="#3f7a20" stroke-width="0.8"/></svg>
<div class="t" style="left:950px;top:168.30px;font-size:10.3px;color:#111;letter-spacing:0;transform:scaleX(0.9005);">Open</div>
<svg class="a" style="left:1183px;top:171px" width="10" height="7"><path d="M1 1L5 5L9 1" stroke="#1a3a6a" stroke-width="2" fill="none"/></svg>
<div class="a" style="left:922px;top:185.5px;width:7px;height:7px;background:#fff;border:1px solid #a0a0a0"></div>
<div class="a" style="left:924px;top:189.0px;width:3px;height:1px;background:#555;"></div>
<div class="a" style="left:935px;top:183.5px;width:12px;height:11px;background:#e8f4f8;border:1px solid #3a9ab0"></div>
<div class="t" style="left:950px;top:183.30px;font-size:10.3px;color:#111;letter-spacing:0;transform:scaleX(0.9287);">Write (4 items)</div>
<svg class="a" style="left:947.3px;top:196.5px" width="16" height="16"><path d="M2 14l2-5 7-7 3 3-7 7z" fill="#bdbdbd" stroke="#8a8a8a"/></svg>
<div class="a" style="left:946px;top:204.5px;width:3px;height:1px;background:#cfcfcf;"></div>
<div class="t" style="left:964.3px;top:198.30px;font-size:10.3px;color:#111;letter-spacing:0;transform:scaleX(0.9068);">Write 0x54 at 0x211</div>
<svg class="a" style="left:947.3px;top:211.3px" width="16" height="16"><path d="M2 14l2-5 7-7 3 3-7 7z" fill="#bdbdbd" stroke="#8a8a8a"/></svg>
<div class="a" style="left:946px;top:219.3px;width:3px;height:1px;background:#cfcfcf;"></div>
<div class="t" style="left:964.3px;top:213.10px;font-size:10.3px;color:#111;letter-spacing:0;transform:scaleX(0.8992);">Write 0x45 at 0x212</div>
<svg class="a" style="left:947.3px;top:226.3px" width="16" height="16"><path d="M2 14l2-5 7-7 3 3-7 7z" fill="#bdbdbd" stroke="#8a8a8a"/></svg>
<div class="a" style="left:946px;top:234.3px;width:3px;height:1px;background:#cfcfcf;"></div>
<div class="t" style="left:964.3px;top:228.10px;font-size:10.3px;color:#111;letter-spacing:0;transform:scaleX(0.8992);">Write 0x58 at 0x213</div>
<svg class="a" style="left:947.3px;top:241.2px" width="16" height="16"><path d="M2 14l2-5 7-7 3 3-7 7z" fill="#bdbdbd" stroke="#8a8a8a"/></svg>
<div class="a" style="left:946px;top:249.2px;width:3px;height:1px;background:#cfcfcf;"></div>
<div class="t" style="left:964.3px;top:243.00px;font-size:10.3px;color:#111;letter-spacing:0;transform:scaleX(0.8992);">Write 0x54 at 0x214</div>
<div class="a" style="left:922px;top:260.8px;width:7px;height:7px;background:#fff;border:1px solid #a0a0a0"></div>
<div class="a" style="left:924px;top:264.3px;width:3px;height:1px;background:#555;"></div>
<div class="a" style="left:935px;top:258.8px;width:12px;height:11px;background:#e8f4f8;border:1px solid #3a9ab0"></div>
<div class="t" style="left:950px;top:258.60px;font-size:10.3px;color:#111;letter-spacing:0;transform:scaleX(0.9176);">Delete (3 items)</div>
<svg class="a" style="left:947.3px;top:271.8px" width="16" height="16"><path d="M2 14l2-5 7-7 3 3-7 7z" fill="#bdbdbd" stroke="#8a8a8a"/></svg>
<div class="a" style="left:946px;top:279.8px;width:3px;height:1px;background:#cfcfcf;"></div>
<div class="t" style="left:964.3px;top:273.60px;font-size:10.3px;color:#111;letter-spacing:0;transform:scaleX(0.8897);">Delete 0x246</div>
<svg class="a" style="left:947.3px;top:286.5px" width="16" height="16"><path d="M2 14l2-5 7-7 3 3-7 7z" fill="#bdbdbd" stroke="#8a8a8a"/></svg>
<div class="a" style="left:946px;top:294.5px;width:3px;height:1px;background:#cfcfcf;"></div>
<div class="t" style="left:964.3px;top:288.30px;font-size:10.3px;color:#111;letter-spacing:0;transform:scaleX(0.8897);">Delete 0x246</div>
<svg class="a" style="left:947.3px;top:301.5px" width="16" height="16"><path d="M2 14l2-5 7-7 3 3-7 7z" fill="#bdbdbd" stroke="#8a8a8a"/></svg>
<div class="a" style="left:946px;top:309.5px;width:3px;height:1px;background:#cfcfcf;"></div>
<div class="t" style="left:964.3px;top:303.30px;font-size:10.3px;color:#111;letter-spacing:0;transform:scaleX(0.8897);">Delete 0x246</div>
<div class="a" style="left:916px;top:335px;width:283px;height:21px;background:#f0f0f0;border-top:1px solid #dcdcdc"></div>
<div class="a" style="left:918px;top:335px;width:55px;height:21px;background:#ffffff;"></div>
<svg class="a" style="left:919.5px;top:337.2px" width="16.4" height="16.4" viewBox="0 0 20 20"><path d="M3 2h13M3 18h13" stroke="#e8a030" stroke-width="2.5"/><path d="M4 3c0 4 4 5 5.5 7-1.5 2-5.5 3-5.5 7h11c0-4-4-5-5.5-7 1.5-2 5.5-3 5.5-7z" fill="#a8e0e0" stroke="#3a9ab0" stroke-width="0.8"/></svg>
<div class="t" style="left:936.7px;top:338.50px;font-size:10.8px;color:#111;letter-spacing:0;transform:scaleX(0.9613);">History</div>
<svg class="a" style="left:977.5px;top:337.2px" width="16.4" height="16.4" viewBox="0 0 20 20"><path d="M1.5 2.5h12v13h-12z" fill="#8cc445" stroke="#4a7a20"/><path d="M6.5 6.5h12v12h-12z" fill="#f7c548" stroke="#b8862a"/><path d="M3 8h7l-2-2M10 8l-2 2" stroke="#1f6f8a" stroke-width="1.6" fill="none"/></svg>
<div class="t" style="left:994px;top:338.50px;font-size:10.8px;color:#111;letter-spacing:0;transform:scaleX(0.9709);">Copy &amp; Export</div>
<div class="a" style="left:916px;top:359.5px;width:283px;height:17px;background:#d6dadd;"></div>
<div class="t" style="left:920.5px;top:361.30px;font-size:10.8px;color:#1a1a1a;letter-spacing:0;transform:scaleX(0.9364);">Selection</div>
<svg class="a" style="left:1169.5px;top:363.0px" width="11" height="11"><path d="M5.5 1.5L9.3 4.8L7 6.5L6.5 8.8L2 4.8L4.2 4.2Z" stroke="#333" stroke-width="1" fill="none" stroke-linejoin="round"/><path d="M3.8 7L1 9.8" stroke="#333" stroke-width="1.1"/></svg>
<svg class="a" style="left:1187.5px;top:365.0px" width="8" height="8"><path d="M0.5 0.5L7.5 7.5M7.5 0.5L0.5 7.5" stroke="#333" stroke-width="1"/></svg>
<svg class="a" style="left:919px;top:378.5px" width="20.0" height="20.0" viewBox="0 0 20 20"><rect x="1.5" y="1.5" width="8" height="8" rx="0.5" fill="#9ed8a0" stroke="#3a9a70"/><rect x="10.5" y="1.5" width="8" height="8" rx="0.5" fill="#9ed8a0" stroke="#3a9a70"/><rect x="1.5" y="10.5" width="8" height="8" rx="0.5" fill="#9ed8a0" stroke="#3a9a70"/><rect x="10.5" y="10.5" width="8" height="8" rx="0.5" fill="#9ed8a0" stroke="#3a9a70"/></svg>
<svg class="a" style="left:945.5px;top:378.5px" width="20.0" height="20.0" viewBox="0 0 20 20"><rect x="1.5" y="1.5" width="8" height="8" rx="1.5" fill="#f7c548" stroke="#b8862a"/><rect x="10.5" y="1.5" width="8" height="8" rx="1.5" fill="#f7c548" stroke="#b8862a"/><rect x="1.5" y="10.5" width="8" height="8" rx="1.5" fill="#f7c548" stroke="#b8862a"/><rect x="10.5" y="10.5" width="8" height="8" rx="1.5" fill="#f7c548" stroke="#b8862a"/></svg>
<svg class="a" style="left:972px;top:378.5px" width="20.0" height="20.0" viewBox="0 0 20 20"><rect x="1.5" y="1.5" width="8" height="8" rx="1.5" fill="#f7c548" stroke="#3a9a70"/><rect x="10.5" y="1.5" width="8" height="8" rx="1.5" fill="#9ed8a0" stroke="#3a9a70"/><rect x="1.5" y="10.5" width="8" height="8" rx="1.5" fill="#9ed8a0" stroke="#3a9a70"/><rect x="10.5" y="10.5" width="8" height="8" rx="1.5" fill="#f7c548" stroke="#3a9a70"/></svg>
<svg class="a" style="left:999px;top:378.5px" width="20.0" height="20.0" viewBox="0 0 20 20"><rect x="1.5" y="2.5" width="17" height="15" fill="#f4f4f4" stroke="#3a9ab0"/><rect x="2" y="14" width="16" height="3" fill="#a0e0e8"/><text x="10" y="12" font-size="6.5" font-family="Liberation Sans" font-weight="bold" fill="#234" text-anchor="middle">1..F</text></svg>
<svg class="a" style="left:1025.5px;top:378.5px" width="20.0" height="20.0" viewBox="0 0 20 20"><rect x="1.5" y="1.5" width="8" height="8" rx="1.5" fill="#eee" stroke="#bbb"/><rect x="10.5" y="1.5" width="8" height="8" rx="1.5" fill="#eee" stroke="#bbb"/><rect x="1.5" y="10.5" width="8" height="8" rx="1.5" fill="#eee" stroke="#bbb"/><rect x="10.5" y="10.5" width="8" height="8" rx="1.5" fill="#eee" stroke="#bbb"/></svg>
<div class="a" style="left:1052px;top:381px;width:1px;height:17px;background:#d8d8d8;"></div>
<svg class="a" style="left:1061px;top:378.5px" width="20.0" height="20.0" viewBox="0 0 20 20"><circle cx="8" cy="5" r="3.5" fill="none" stroke="#e8a030" stroke-width="1.2"/><path d="M6.5 5v8l-2-1.5c-1 0-1.5 1-1 2l3.5 4.5h9c1-2 1.5-4 1.5-6v-3c0-1-1.5-1-1.5 0 0-1-1.5-1-1.5 0 0-1-1.5-1-1.5 0V5c0-2-3-2-3 0z" fill="#f7a030" stroke="#c07020"/></svg>
<div class="a" style="left:1087px;top:381px;width:1px;height:17px;background:#d8d8d8;"></div>
<svg class="a" style="left:1095.5px;top:378.5px" width="20.0" height="20.0" viewBox="0 0 20 20"><rect x="1.5" y="1.5" width="8" height="8" rx="1.5" fill="#9ed8a0" stroke="#3a9a70"/><rect x="1.5" y="10.5" width="8" height="8" rx="1.5" fill="#9ed8a0" stroke="#3a9a70"/><rect x="10.5" y="10.5" width="8" height="8" rx="1.5" fill="#9ed8a0" stroke="#3a9a70"/><path d="M14.5 1l4.5 4.5h-2.5v4h-4v-4h-2.5z" fill="#8cc445" stroke="#2f6a20" stroke-width="0.8"/></svg>
<svg class="a" style="left:1122px;top:378.5px" width="20.0" height="20.0" viewBox="0 0 20 20"><rect x="1.5" y="1.5" width="8" height="8" rx="1.5" fill="#9ed8a0" stroke="#3a9a70"/><rect x="10.5" y="1.5" width="8" height="8" rx="1.5" fill="#9ed8a0" stroke="#3a9a70"/><rect x="1.5" y="10.5" width="8" height="8" rx="1.5" fill="#9ed8a0" stroke="#3a9a70"/><path d="M14.5 19.5l4.5-4.5h-2.5v-4h-4v4h-2.5z" fill="#f7c548" stroke="#b8862a" stroke-width="0.8"/></svg>
<div class="a" style="left:923px;top:405px;width:268px;height:68px;background:#f8f8f8;border:1px solid #d8d8d8;border-top:none;box-shadow:inset 1px 0 0 #fff"></div>
<div class="a" style="left:924px;top:417.5px;width:266px;height:1px;background:#ececec;"></div>
<div class="t" style="left:1032px;top:404.50px;font-size:10.8px;color:#111;letter-spacing:0;transform:scaleX(0.9052);">Information</div>
<div class="a" style="left:929.5px;top:422px;width:256px;height:47px;background:#ffffff;border:1px solid #a8a8a8"></div>
<div class="t" style="left:933.6px;top:423.30px;font-size:10.3px;color:#111;letter-spacing:0;transform:scaleX(0.8823);">Total Size</div>
<div class="t" style="left:981.9px;top:423.30px;font-size:10.3px;color:#111;letter-spacing:0;transform:scaleX(0.9005);">86</div>
<div class="t" style="left:1003.7px;top:423.30px;font-size:10.3px;color:#111;letter-spacing:0;transform:scaleX(0.9221);">bytes</div>
<div class="t" style="left:933.6px;top:436.80px;font-size:10.3px;color:#111;letter-spacing:0;transform:scaleX(0.8939);">Fragments</div>
<div class="t" style="left:981.9px;top:436.80px;font-size:10.3px;color:#111;letter-spacing:0;transform:scaleX(0.9005);">1</div>
<div class="a" style="left:980px;top:423px;width:1px;height:45px;background:#f7f7f7;"></div>
<div class="a" style="left:1000px;top:423px;width:1px;height:45px;background:#f7f7f7;"></div>
<div class="a" style="left:1030px;top:423px;width:1px;height:45px;background:#f7f7f7;"></div>
<div class="a" style="left:923px;top:479px;width:268px;height:81px;background:#f8f8f8;border:1px solid #d8d8d8;border-top:none;box-shadow:inset 1px 0 0 #fff"></div>
<div class="a" style="left:924px;top:491.5px;width:266px;height:1px;background:#ececec;"></div>
<div class="t" style="left:1040px;top:478.50px;font-size:10.8px;color:#111;letter-spacing:0;transform:scaleX(0.8452);">Details</div>
<div class="a" style="left:929.5px;top:496px;width:256px;height:58px;background:#ffffff;border:1px solid #a8a8a8"></div>
<div class="t" style="left:933.6px;top:498.80px;font-size:10.3px;color:#111;letter-spacing:0;transform:scaleX(0.8860);">No.</div>
<div class="t" style="left:955.5px;top:498.80px;font-size:10.3px;color:#111;letter-spacing:0;transform:scaleX(0.9347);">Ad...</div>
<div class="t" style="left:985.8px;top:498.80px;font-size:10.3px;color:#111;letter-spacing:0;transform:scaleX(0.9270);">Length</div>
<div class="t" style="left:933.6px;top:513.30px;font-size:10.3px;color:#111;letter-spacing:0;transform:scaleX(0.9005);">1</div>
<div class="t" style="left:955.5px;top:513.30px;font-size:10.3px;color:#111;letter-spacing:0;transform:scaleX(0.8642);">0x54</div>
<div class="t" style="left:985.8px;top:513.30px;font-size:10.3px;color:#111;letter-spacing:0;transform:scaleX(0.9010);">0x56 (86)</div>
<div class="a" style="left:952px;top:497px;width:1px;height:56px;background:#f7f7f7;"></div>
<div class="a" style="left:982px;top:497px;width:1px;height:56px;background:#f7f7f7;"></div>
<div class="a" style="left:1036px;top:497px;width:1px;height:56px;background:#f7f7f7;"></div>
<div class="a" style="left:916px;top:563.5px;width:283px;height:19px;background:#f0f0f0;border-top:1px solid #dcdcdc"></div>
<div class="a" style="left:916px;top:563.5px;width:66.5px;height:19px;background:#ffffff;"></div>
<svg class="a" style="left:918.5px;top:564.7px" width="16.4" height="16.4" viewBox="0 0 20 20"><rect x="1.5" y="1.5" width="8" height="8" rx="1.5" fill="#9ed8a0" stroke="#3a9a70"/><rect x="10.5" y="1.5" width="8" height="8" rx="1.5" fill="#9ed8a0" stroke="#3a9a70"/><rect x="1.5" y="10.5" width="8" height="8" rx="1.5" fill="#9ed8a0" stroke="#3a9a70"/><rect x="10.5" y="10.5" width="8" height="8" rx="1.5" fill="#9ed8a0" stroke="#3a9a70"/><path d="M10 9l8 3.5-3.5 1 2.5 3.5-1.7 1.2-2.5-3.5-2.5 2.5z" fill="#fff" stroke="#333" stroke-width="0.8"/></svg>
<div class="t" style="left:937px;top:566.00px;font-size:10.8px;color:#111;letter-spacing:0;transform:scaleX(0.9364);">Selection</div>
<svg class="a" style="left:985.5px;top:564.7px" width="16.4" height="16.4" viewBox="0 0 20 20"><circle cx="9" cy="11" r="7" fill="#fff" stroke="#e05060" stroke-width="1.5"/><circle cx="9" cy="11" r="4" fill="#e05060"/><circle cx="9" cy="11" r="1.8" fill="#333"/><path d="M10 10l8-8M14 2h4v4" stroke="#e8a030" stroke-width="1.6" fill="none"/></svg>
<div class="t" style="left:1003.7px;top:566.00px;font-size:10.8px;color:#111;letter-spacing:0;transform:scaleX(0.9198);">Debug Call Stack</div>
<svg class="a" style="left:1088.5px;top:564.7px" width="16.4" height="16.4" viewBox="0 0 20 20"><circle cx="8" cy="12" r="6.5" fill="#fff" stroke="#e05060" stroke-width="1.5"/><circle cx="8" cy="12" r="3.5" fill="#e05060"/><circle cx="8" cy="12" r="1.5" fill="#333"/><circle cx="14" cy="5" r="3.5" fill="#70d0e8" stroke="#1f6f8a" stroke-width="1.2"/></svg>
<div class="t" style="left:1106.6px;top:566.00px;font-size:10.8px;color:#111;letter-spacing:0;transform:scaleX(0.9519);">Debug Watch</div>
<div class="a" style="left:2px;top:604.5px;width:535px;height:182px;background:#ffffff;"></div>
<div class="a" style="left:2px;top:586.7px;width:535px;height:18px;background:#d6dadd;"></div>
<div class="t" style="left:6.5px;top:588.50px;font-size:10.8px;color:#1a1a1a;letter-spacing:0;transform:scaleX(0.9311);">Checksum</div>
<svg class="a" style="left:507.5px;top:590.2px" width="11" height="11"><path d="M5.5 1.5L9.3 4.8L7 6.5L6.5 8.8L2 4.8L4.2 4.2Z" stroke="#333" stroke-width="1" fill="none" stroke-linejoin="round"/><path d="M3.8 7L1 9.8" stroke="#333" stroke-width="1.1"/></svg>
<svg class="a" style="left:525.5px;top:592.2px" width="8" height="8"><path d="M0.5 0.5L7.5 7.5M7.5 0.5L0.5 7.5" stroke="#333" stroke-width="1"/></svg>
<div class="a" style="left:2px;top:604.7px;width:535px;height:24px;background:#f3f3f3;"></div>
<div class="a" style="left:4.5px;top:608px;width:113px;height:18px;background:#ffffff;border:1px solid #e0e0e0"></div>
<div class="t" style="left:7.0px;top:610.00px;font-size:10.8px;color:#000;letter-spacing:0;transform:scaleX(0.9839);">Whole Document</div>
<svg class="a" style="left:106.5px;top:615.0px" width="8" height="5"><path d="M0.5 0.5L4 4L7.5 0.5" stroke="#777" fill="none"/></svg>
<svg class="a" style="left:125.5px;top:607px" width="20.0" height="20.0" viewBox="0 0 20 20"><circle cx="10" cy="10" r="8.5" fill="#8cc445" stroke="#4a8a20"/><path d="M6 10.5a4 4 0 0 1 6.5-4M14 9.5a4 4 0 0 1-6.5 4" stroke="#fff" stroke-width="2" fill="none"/><path d="M12 4.5l1.5 2.5-3 .5zM8 15.5l-1.5-2.5 3-.5z" fill="#fff"/></svg>
<div class="a" style="left:153px;top:608px;width:1px;height:18px;background:#d8d8d8;"></div>
<svg class="a" style="left:161px;top:607px" width="20.0" height="20.0" viewBox="0 0 20 20"><path d="M3 2.5h9v13h-9z" fill="#eee" stroke="#aaa"/><path d="M7 5.5h10v13h-10z" fill="#f4f4f4" stroke="#aaa"/><path d="M10 8h4M10 8l2.5 3-2.5 3h4" stroke="#aaa" fill="none"/></svg>
<svg class="a" style="left:188px;top:607px" width="20.0" height="20.0" viewBox="0 0 20 20"><path d="M3 2.5h9v13h-9z" fill="#f7c548" stroke="#b8862a"/><path d="M7 5.5h10v13h-10z" fill="#f7d060" stroke="#b8862a"/><path d="M9.5 8h5M9.5 8l3 3.5-3 3.5h5" stroke="#8a6020" stroke-width="1.2" fill="none"/></svg>
<svg class="a" style="left:214.5px;top:607px" width="20.0" height="20.0" viewBox="0 0 20 20"><path d="M2 3h10v2.5M12 16v-2.5H2l5-5L2 3" fill="none" stroke="#c8c8c8" stroke-width="2.4"/><path d="M12 7h4l3 3-3 3h-4z" fill="#ddd" stroke="#aaa"/></svg>
<div class="a" style="left:243px;top:608px;width:1px;height:18px;background:#d8d8d8;"></div>
<svg class="a" style="left:249.5px;top:607px" width="20.0" height="20.0" viewBox="0 0 20 20"><path d="M2 2.5h11v3M13 17v-3H2l6-5.5L2 2.5" fill="none" stroke="#e8a030" stroke-width="2.6"/><path d="M15 10v9M10.5 14.5h9" stroke="#3f8a2c" stroke-width="4"/><path d="M15 11v7M11.5 14.5h7" stroke="#8cc445" stroke-width="2.2"/></svg>
<svg class="a" style="left:275.5px;top:607px" width="20.0" height="20.0" viewBox="0 0 20 20"><path d="M2 2.5h11v3M13 17v-3H2l6-5.5L2 2.5" fill="none" stroke="#d0d0d0" stroke-width="2.6"/><path d="M12 12l6 6M18 12l-6 6" stroke="#c8c8c8" stroke-width="1.8"/></svg>
<svg class="a" style="left:302.5px;top:607px" width="20.0" height="20.0" viewBox="0 0 20 20"><path d="M2 2.5h11v3M13 17v-3H2l6-5.5L2 2.5" fill="none" stroke="#e8a030" stroke-width="2.6"/><circle cx="15" cy="15" r="4.5" fill="#8cc445" stroke="#3f7a20"/></svg>
<div class="a" style="left:330.5px;top:608px;width:1px;height:18px;background:#d8d8d8;"></div>
<svg class="a" style="left:337px;top:607px" width="20.0" height="20.0" viewBox="0 0 20 20"><g stroke="#c0c0c0" stroke-width="2.6"><path d="M10 1.5v17M1.5 10h17M4 4l12 12M16 4L4 16"/></g><circle cx="10" cy="10" r="5.5" fill="#d8d8d8" stroke="#b0b0b0"/><circle cx="10" cy="10" r="2.2" fill="#f4f4f4" stroke="#b0b0b0"/></svg>
<div class="a" style="left:4.5px;top:632.0px;width:9px;height:9px;background:#fff;border:1px solid #555;border-radius:2px"></div>
<div class="t" style="left:16.2px;top:630.50px;font-size:10.3px;color:#111;letter-spacing:0;transform:scaleX(0.9195);">Algorithm</div>
<div class="t" style="left:192.4px;top:630.50px;font-size:10.3px;color:#111;letter-spacing:0;transform:scaleX(0.9102);">Value (Hex)</div>
<div class="t" style="left:304.4px;top:630.50px;font-size:10.3px;color:#111;letter-spacing:0;transform:scaleX(0.9005);">Value (Dec)</div>
<div class="t" style="left:430.8px;top:630.50px;font-size:10.3px;color:#111;letter-spacing:0;transform:scaleX(0.9005);">Paramet...</div>
<div class="a" style="left:189px;top:629px;width:1px;height:158px;background:#f0f0f0;"></div>
<div class="a" style="left:301px;top:629px;width:1px;height:158px;background:#f0f0f0;"></div>
<div class="a" style="left:427px;top:629px;width:1px;height:158px;background:#f0f0f0;"></div>
<div class="a" style="left:477px;top:629px;width:1px;height:158px;background:#f0f0f0;"></div>
<div class="a" style="left:4.5px;top:649.2px;width:9px;height:9px;background:#1f6fc8;border-radius:2px"></div>
<svg class="a" style="left:5px;top:649.7px" width="8" height="8"><path d="M1.5 4L3.4 6L6.8 2" stroke="#fff" stroke-width="1.1" fill="none"/></svg>
<div class="t" style="left:16.2px;top:647.50px;font-size:10.3px;color:#111;letter-spacing:0;transform:scaleX(0.9172);">64-bit sum</div>
<div class="t" style="left:192.4px;top:647.50px;font-size:10.3px;color:#111;letter-spacing:0;transform:scaleX(0.8957);">0x1cf8bd8e</div>
<div class="t" style="left:304.4px;top:647.50px;font-size:10.3px;color:#111;letter-spacing:0;transform:scaleX(0.9005);">486 063 502</div>
<div class="a" style="left:4.5px;top:663.22px;width:9px;height:9px;background:#1f6fc8;border-radius:2px"></div>
<svg class="a" style="left:5px;top:663.72px" width="8" height="8"><path d="M1.5 4L3.4 6L6.8 2" stroke="#fff" stroke-width="1.1" fill="none"/></svg>
<div class="t" style="left:16.2px;top:661.52px;font-size:10.3px;color:#111;letter-spacing:0;transform:scaleX(0.9169);">Sum of Little-Endian 16-bit values</div>
<div class="t" style="left:192.4px;top:661.52px;font-size:10.3px;color:#111;letter-spacing:0;transform:scaleX(0.9118);">0xe7211dfef</div>
<div class="t" style="left:304.4px;top:661.52px;font-size:10.3px;color:#111;letter-spacing:0;transform:scaleX(0.9005);">62 043 316 207</div>
<div class="a" style="left:4.5px;top:677.24px;width:9px;height:9px;background:#1f6fc8;border-radius:2px"></div>
<svg class="a" style="left:5px;top:677.74px" width="8" height="8"><path d="M1.5 4L3.4 6L6.8 2" stroke="#fff" stroke-width="1.1" fill="none"/></svg>
<div class="t" style="left:16.2px;top:675.54px;font-size:10.3px;color:#111;letter-spacing:0;transform:scaleX(0.9107);">Sum of Big-Endian 16-bit values</div>
<div class="t" style="left:192.4px;top:675.54px;font-size:10.3px;color:#111;letter-spacing:0;transform:scaleX(0.9005);">0xea3a46b9f</div>
<div class="t" style="left:304.4px;top:675.54px;font-size:10.3px;color:#111;letter-spacing:0;transform:scaleX(0.9005);">62 875 003 807</div>
<div class="a" style="left:4.5px;top:691.26px;width:9px;height:9px;background:#1f6fc8;border-radius:2px"></div>
<svg class="a" style="left:5px;top:691.76px" width="8" height="8"><path d="M1.5 4L3.4 6L6.8 2" stroke="#fff" stroke-width="1.1" fill="none"/></svg>
<div class="t" style="left:16.2px;top:689.56px;font-size:10.3px;color:#111;letter-spacing:0;transform:scaleX(0.9005);">Sum of Little-Endian 32-bit values</div>
<div class="t" style="left:192.4px;top:689.56px;font-size:10.3px;color:#111;letter-spacing:0;transform:scaleX(0.8870);">0x70f8ad2dc6fa1</div>
<div class="t" style="left:304.4px;top:689.56px;font-size:10.3px;color:#111;letter-spacing:0;transform:scaleX(0.9005);">1 987 413 754 539 937</div>
<div class="a" style="left:4.5px;top:705.2800000000001px;width:9px;height:9px;background:#1f6fc8;border-radius:2px"></div>
<svg class="a" style="left:5px;top:705.7800000000001px" width="8" height="8"><path d="M1.5 4L3.4 6L6.8 2" stroke="#fff" stroke-width="1.1" fill="none"/></svg>
<div class="t" style="left:16.2px;top:703.58px;font-size:10.3px;color:#111;letter-spacing:0;transform:scaleX(0.9005);">Sum of Big-Endian 32-bit values</div>
<div class="t" style="left:192.4px;top:703.58px;font-size:10.3px;color:#111;letter-spacing:0;transform:scaleX(0.9005);">0x77999e749ae67</div>
<div class="t" style="left:304.4px;top:703.58px;font-size:10.3px;color:#111;letter-spacing:0;transform:scaleX(0.9005);">2 104 026 754 297 447</div>
<div class="a" style="left:4.5px;top:719.3000000000001px;width:9px;height:9px;background:#1f6fc8;border-radius:2px"></div>
<svg class="a" style="left:5px;top:719.8000000000001px" width="8" height="8"><path d="M1.5 4L3.4 6L6.8 2" stroke="#fff" stroke-width="1.1" fill="none"/></svg>
<div class="t" style="left:16.2px;top:717.60px;font-size:10.3px;color:#111;letter-spacing:0;transform:scaleX(0.9005);">Sum of Little-Endian 64-bit values</div>
<div class="t" style="left:192.4px;top:717.60px;font-size:10.3px;color:#111;letter-spacing:0;transform:scaleX(0.9005);">0xd6822304fc5dd475</div>
<div class="t" style="left:304.4px;top:717.60px;font-size:10.3px;color:#111;letter-spacing:0;transform:scaleX(0.9005);">15 456 955 375 409 812 597</div>
<div class="a" style="left:4.5px;top:733.32px;width:9px;height:9px;background:#1f6fc8;border-radius:2px"></div>
<svg class="a" style="left:5px;top:733.82px" width="8" height="8"><path d="M1.5 4L3.4 6L6.8 2" stroke="#fff" stroke-width="1.1" fill="none"/></svg>
<div class="t" style="left:16.2px;top:731.62px;font-size:10.3px;color:#111;letter-spacing:0;transform:scaleX(0.9005);">Sum of Big-Endian 64-bit values</div>
<div class="t" style="left:192.4px;top:731.62px;font-size:10.3px;color:#111;letter-spacing:0;transform:scaleX(0.9005);">0xcd61cf1719eb92ad</div>
<div class="t" style="left:304.4px;top:731.62px;font-size:10.3px;color:#111;letter-spacing:0;transform:scaleX(0.9005);">14 799 337 548 642 226 861</div>
<div class="a" style="left:2px;top:747px;width:521px;height:16px;background:#ffffff;"></div>
<div class="t" style="left:7.6px;top:748.40px;font-size:10.8px;color:#2a5a8a;letter-spacing:0;transform:scaleX(0.9311);">Checksum</div>
<div class="a" style="left:60px;top:755px;width:440px;height:1px;background:#e2e8f0;"></div>
<svg class="a" style="left:506px;top:752px" width="9" height="6"><path d="M1 5L4.5 1.5L8 5" stroke="#1a3a6a" stroke-width="1.6" fill="none"/></svg>
<div class="a" style="left:4.5px;top:766.5px;width:9px;height:9px;background:#1f6fc8;border-radius:2px"></div>
<svg class="a" style="left:5px;top:767px" width="8" height="8"><path d="M1.5 4L3.4 6L6.8 2" stroke="#fff" stroke-width="1.1" fill="none"/></svg>
<div class="t" style="left:16.2px;top:764.80px;font-size:10.3px;color:#111;letter-spacing:0;transform:scaleX(0.9005);">CRC-16</div>
<div class="t" style="left:192.4px;top:764.80px;font-size:10.3px;color:#111;letter-spacing:0;transform:scaleX(0.9005);">0x4a27</div>
<div class="t" style="left:304.4px;top:764.80px;font-size:10.3px;color:#111;letter-spacing:0;transform:scaleX(0.9005);">18 983</div>
<div class="a" style="left:0;top:779px;width:530px;height:8px;overflow:hidden">
<div class="a" style="left:4.5px;top:1.5px;width:9px;height:9px;background:#1f6fc8;border-radius:2px"></div>
<svg class="a" style="left:5px;top:2px" width="8" height="8"><path d="M1.5 4L3.4 6L6.8 2" stroke="#fff" stroke-width="1.1" fill="none"/></svg>
<div class="t" style="left:16.2px;top:-0.20px;font-size:10.3px;color:#111;letter-spacing:0;transform:scaleX(0.9005);">CRC-16 (CCITT)</div>
<div class="t" style="left:192.4px;top:-0.20px;font-size:10.3px;color:#111;letter-spacing:0;transform:scaleX(0.9005);">0x2ae2</div>
<div class="t" style="left:304.4px;top:-0.20px;font-size:10.3px;color:#111;letter-spacing:0;transform:scaleX(0.9005);">19 978</div>
</div>
<div class="a" style="left:523px;top:629px;width:13px;height:158px;background:#f2f2f2;"></div>
<div class="a" style="left:524.5px;top:664.5px;width:7px;height:28px;background:#8a8a8a;"></div>
<div class="a" style="left:2px;top:786.8px;width:535px;height:19.5px;background:#f0f0f0;border-top:1px solid #dcdcdc"></div>
<svg class="a" style="left:4.5px;top:788.25px" width="16.4" height="16.4" viewBox="0 0 20 20"><rect x="1.5" y="2.5" width="17" height="12" rx="2.5" fill="#f7c548" stroke="#b8862a"/><path d="M4 14.5l1 4 3.5-4" fill="#f7c548" stroke="#b8862a"/><path d="M4.5 6.5h8M4.5 9.5h6" stroke="#b8862a"/></svg>
<div class="t" style="left:22.5px;top:789.55px;font-size:10.8px;color:#111;letter-spacing:0;transform:scaleX(0.9726);">Data Annotations</div>
<svg class="a" style="left:109.5px;top:788.25px" width="16.4" height="16.4" viewBox="0 0 20 20"><circle cx="10" cy="10" r="8.5" fill="#f7c548" stroke="#b8862a"/><rect x="6" y="3" width="4" height="4" fill="#fff8e0"/><rect x="10" y="7" width="4" height="4" fill="#fff8e0"/><rect x="6" y="11" width="4" height="4" fill="#fff8e0"/><rect x="2.5" y="7" width="3.5" height="4" fill="#fff8e0"/><rect x="14" y="11" width="3" height="4" fill="#fff8e0"/></svg>
<div class="t" style="left:127.2px;top:789.55px;font-size:10.8px;color:#111;letter-spacing:0;transform:scaleX(0.9624);">Pattern Coloring</div>
<svg class="a" style="left:209.5px;top:788.25px" width="16.4" height="16.4" viewBox="0 0 20 20"><path d="M2.5 1.5h8l3 3v13h-11z" fill="#d8eef0" stroke="#5a8a8a"/><path d="M4.5 6h6M4.5 9h6" stroke="#7aa"/><circle cx="12" cy="12" r="4" fill="#a0dde8" stroke="#1f6f8a" stroke-width="1.3"/><path d="M15 15l3.5 3.5" stroke="#555" stroke-width="1.8"/></svg>
<div class="t" style="left:227px;top:789.55px;font-size:10.8px;color:#111;letter-spacing:0;transform:scaleX(0.9276);">Find in Files</div>
<svg class="a" style="left:289.5px;top:788.25px" width="16.4" height="16.4" viewBox="0 0 20 20"><path d="M3.5 1.5h9l3 3v14h-12z" fill="#f4f4e8" stroke="#555"/><text x="9.5" y="14" font-size="9" font-family="Liberation Sans" font-weight="bold" fill="#555" text-anchor="middle">B</text><rect x="2" y="5" width="3" height="3" fill="#8cc445"/><rect x="2" y="11" width="3" height="3" fill="#f7c548"/></svg>
<div class="t" style="left:305.8px;top:789.55px;font-size:10.8px;color:#111;letter-spacing:0;transform:scaleX(0.9813);">File Attributes</div>
<div class="a" style="left:373px;top:786.8px;width:72px;height:19.5px;background:#ffffff;"></div>
<svg class="a" style="left:378.5px;top:788.25px" width="16.4" height="16.4" viewBox="0 0 20 20"><path d="M3 2.5h12v3M15 17.5v-3H3l6.5-6L3 2.5" fill="none" stroke="#e8a030" stroke-width="2.4"/></svg>
<div class="t" style="left:394.3px;top:789.55px;font-size:10.8px;color:#111;letter-spacing:0;transform:scaleX(0.9311);">Checksum</div>
<svg class="a" style="left:449.5px;top:788.25px" width="16.4" height="16.4" viewBox="0 0 20 20"><rect x="1.5" y="1.5" width="17" height="17" rx="2" fill="#f0f0e0" stroke="#6a8a40"/><rect x="2" y="2" width="16" height="3.5" fill="#8cc445"/><path d="M4.5 9h11M4.5 12h11M4.5 15h11" stroke="#8a8a60"/></svg>
<div class="t" style="left:466.7px;top:789.55px;font-size:10.8px;color:#111;letter-spacing:0;transform:scaleX(1.0272);">Output</div>
<div class="a" style="left:541px;top:604.5px;width:658px;height:182px;background:#ffffff;"></div>
<div class="a" style="left:541px;top:586.7px;width:658px;height:18px;background:#d6dadd;"></div>
<div class="t" style="left:545.5px;top:588.50px;font-size:10.8px;color:#1a1a1a;letter-spacing:0;transform:scaleX(0.9481);">Structure Viewer</div>
<svg class="a" style="left:1169.5px;top:590.2px" width="11" height="11"><path d="M5.5 1.5L9.3 4.8L7 6.5L6.5 8.8L2 4.8L4.2 4.2Z" stroke="#333" stroke-width="1" fill="none" stroke-linejoin="round"/><path d="M3.8 7L1 9.8" stroke="#333" stroke-width="1.1"/></svg>
<svg class="a" style="left:1187.5px;top:592.2px" width="8" height="8"><path d="M0.5 0.5L7.5 7.5M7.5 0.5L0.5 7.5" stroke="#333" stroke-width="1"/></svg>
<div class="a" style="left:541px;top:604.7px;width:658px;height:24px;background:#f3f3f3;"></div>
<svg class="a" style="left:543px;top:607px" width="20.0" height="20.0" viewBox="0 0 20 20"><rect x="1.5" y="1.5" width="8" height="8" rx="1.5" fill="#8cc445" stroke="#4a7a20"/><rect x="10.5" y="1.5" width="8" height="8" rx="1.5" fill="#8cc445" stroke="#4a7a20"/><rect x="1.5" y="10.5" width="8" height="8" rx="1.5" fill="#8cc445" stroke="#4a7a20"/><path d="M10 9v6l-1.5-1c-.8 0-1 .8-.6 1.4L11 19h6c1-1.5 1.3-3 1.3-4.5v-2c0-.8-1.3-.8-1.3 0 0-.8-1.3-.8-1.3 0 0-.8-1.3-.8-1.3 0V9c0-1.5-2.6-1.5-2.6 0z" fill="#f7a030" stroke="#c07020" stroke-width="0.8"/></svg>
<div class="a" style="left:570px;top:608px;width:1px;height:18px;background:#d8d8d8;"></div>
<svg class="a" style="left:579px;top:607px" width="20.0" height="20.0" viewBox="0 0 20 20"><rect x="1.5" y="1.5" width="8" height="8" rx="1.5" fill="#f7c548" stroke="#b8862a"/><rect x="10.5" y="1.5" width="8" height="8" rx="1.5" fill="#f7c548" stroke="#b8862a"/><rect x="1.5" y="10.5" width="8" height="8" rx="1.5" fill="#f7c548" stroke="#b8862a"/><path d="M11 18l7-7" stroke="#555" stroke-width="2.6"/><path d="M12 17l5-5" stroke="#888" stroke-width="1"/></svg>
<svg class="a" style="left:606px;top:607px" width="20.0" height="20.0" viewBox="0 0 20 20"><rect x="1.5" y="1.5" width="8" height="8" rx="1.5" fill="#f7c548" stroke="#b8862a"/><rect x="10.5" y="1.5" width="8" height="8" rx="1.5" fill="#f7c548" stroke="#b8862a"/><rect x="1.5" y="10.5" width="8" height="8" rx="1.5" fill="#f7c548" stroke="#b8862a"/><path d="M11 18l7-7" stroke="#555" stroke-width="2.6" stroke-dasharray="2 1.5"/></svg>
<div class="a" style="left:633px;top:608px;width:1px;height:18px;background:#d8d8d8;"></div>
<svg class="a" style="left:641px;top:607px" width="20.0" height="20.0" viewBox="0 0 20 20"><rect x="1.5" y="2.5" width="17" height="12" rx="1.5" fill="#3fb0c8" stroke="#1f6f8a"/><rect x="3" y="4" width="14" height="9" fill="#48bcd0"/><text x="10" y="11.5" font-size="6.5" font-family="Liberation Sans" font-weight="bold" fill="#fff" text-anchor="middle">HEX</text><path d="M7 17.5h6M10 14.5v3" stroke="#777" stroke-width="1.2"/></svg>
<div class="a" style="left:667px;top:608px;width:1px;height:18px;background:#d8d8d8;"></div>
<svg class="a" style="left:676px;top:607px" width="20.0" height="20.0" viewBox="0 0 20 20"><rect x="1.5" y="1.5" width="8" height="8" rx="1.5" fill="#f7c548" stroke="#b8862a"/><rect x="10.5" y="1.5" width="8" height="8" rx="1.5" fill="#f7c548" stroke="#b8862a"/><rect x="1.5" y="10.5" width="8" height="8" rx="1.5" fill="#f7c548" stroke="#b8862a"/><path d="M14.5 19.5l4.5-4.5h-2.5v-4h-4v4h-2.5z" fill="#f7c548" stroke="#b8862a" stroke-width="0.8"/></svg>
<svg class="a" style="left:703px;top:607px" width="20.0" height="20.0" viewBox="0 0 20 20"><rect x="1.5" y="1.5" width="8" height="8" rx="1.5" fill="#f4f4f4" stroke="#bbb"/><rect x="10.5" y="1.5" width="8" height="8" rx="1.5" fill="#f4f4f4" stroke="#bbb"/><rect x="1.5" y="10.5" width="8" height="8" rx="1.5" fill="#f4f4f4" stroke="#bbb"/><path d="M12 12l6 6M18 12l-6 6" stroke="#bbb" stroke-width="1.6"/></svg>
<div class="a" style="left:729px;top:608px;width:1px;height:18px;background:#d8d8d8;"></div>
<div class="a" style="left:737.5px;top:608.8px;width:125px;height:17.5px;background:#ffffff;border:1px solid #e0e0e0"></div>
<div class="t" style="left:740.0px;top:610.55px;font-size:10.8px;color:#000;letter-spacing:0;transform:scaleX(0.9449);">PortableExecutable</div>
<svg class="a" style="left:851.5px;top:615.55px" width="8" height="5"><path d="M0.5 0.5L4 4L7.5 0.5" stroke="#777" fill="none"/></svg>
<svg class="a" style="left:869px;top:607px" width="20.0" height="20.0" viewBox="0 0 20 20"><rect x="1.5" y="1.5" width="8" height="8" rx="1.5" fill="#f7c548" stroke="#b8862a"/><rect x="10.5" y="1.5" width="8" height="8" rx="1.5" fill="#f7c548" stroke="#b8862a"/><rect x="1.5" y="10.5" width="8" height="8" rx="1.5" fill="#f7c548" stroke="#b8862a"/><rect x="9" y="11" width="10" height="8" rx="1.5" fill="#f8f8f8" stroke="#666"/><text x="14.5" y="17.5" font-size="6.5" font-family="Liberation Sans" font-weight="bold" fill="#333" text-anchor="middle">E</text></svg>
<div class="a" style="left:894px;top:608px;width:1px;height:18px;background:#d8d8d8;"></div>
<div class="a" style="left:901px;top:605px;width:25.5px;height:23px;background:#3a8fb0;"></div>
<svg class="a" style="left:903.5px;top:607px" width="20.0" height="20.0" viewBox="0 0 20 20"><rect x="10.5" y="2.5" width="8" height="8" rx="1.5" fill="#f7c548" stroke="#b8862a"/><path d="M8 4c-4 0-5 3-5 5" stroke="#e8a030" stroke-width="1.6" fill="none"/><rect x="2.5" y="11.5" width="6" height="6" rx="1.5" fill="#3fb0c8" stroke="#1f6f8a"/><path d="M12 17c3 0 5-2 5-4" stroke="#3fb0c8" stroke-width="1.6" fill="none"/></svg>
<svg class="a" style="left:931px;top:607px" width="20.0" height="20.0" viewBox="0 0 20 20"><rect x="1.5" y="1.5" width="8" height="8" rx="1.5" fill="#f7c548" stroke="#b8862a"/><rect x="10.5" y="1.5" width="8" height="8" rx="1.5" fill="#f7c548" stroke="#b8862a"/><rect x="1.5" y="10.5" width="8" height="8" rx="1.5" fill="#f7c548" stroke="#b8862a"/><circle cx="14.5" cy="14.5" r="4.5" fill="#8cc445" stroke="#3f7a20"/></svg>
<div class="a" style="left:958px;top:608px;width:1px;height:18px;background:#d8d8d8;"></div>
<svg class="a" style="left:966px;top:607px" width="20.0" height="20.0" viewBox="0 0 20 20"><rect x="1.5" y="1.5" width="8" height="8" rx="1.5" fill="#f7c548" stroke="#b8862a"/><rect x="10.5" y="1.5" width="8" height="8" rx="1.5" fill="#3fb0c8" stroke="#1f6f8a"/><rect x="1.5" y="10.5" width="8" height="8" rx="1.5" fill="#8cc445" stroke="#4a7a20"/><rect x="10.5" y="10.5" width="8" height="8" rx="1.5" fill="#e05060" stroke="#a03040"/></svg>
<div class="a" style="left:990.3px;top:605px;width:25px;height:23px;background:#3a8fb0;"></div>
<svg class="a" style="left:993px;top:607px" width="20.0" height="20.0" viewBox="0 0 20 20"><circle cx="9" cy="8" r="6.5" fill="#fbe890" stroke="#d8b040"/><rect x="6.5" y="14" width="5" height="4" fill="#ddd" stroke="#999"/><path d="M10 15l3 3 6-6" stroke="#2f8a30" stroke-width="2.5" fill="none"/></svg>
<div class="t" style="left:570px;top:629.80px;font-size:10.3px;color:#111;letter-spacing:0;transform:scaleX(0.8808);">Name</div>
<div class="t" style="left:732px;top:629.80px;font-size:10.3px;color:#111;letter-spacing:0;transform:scaleX(0.8875);">Value</div>
<div class="t" style="left:958.2px;top:629.80px;font-size:10.3px;color:#111;letter-spacing:0;transform:scaleX(0.8813);">Address</div>
<div class="t" style="left:1022px;top:629.80px;font-size:10.3px;color:#111;letter-spacing:0;transform:scaleX(0.9005);">Size</div>
<div class="t" style="left:1058px;top:629.80px;font-size:10.3px;color:#111;letter-spacing:0;transform:scaleX(0.9092);">Type</div>
<div class="t" style="left:1171px;top:629.80px;font-size:10.3px;color:#111;letter-spacing:0;transform:scaleX(0.9005);">Des</div>
<div class="a" style="left:728px;top:629px;width:1px;height:146px;background:#eeeeee;"></div>
<div class="a" style="left:955.5px;top:629px;width:1px;height:146px;background:#eeeeee;"></div>
<div class="a" style="left:1055px;top:629px;width:1px;height:146px;background:#eeeeee;"></div>
<div class="a" style="left:1168px;top:629px;width:1px;height:146px;background:#eeeeee;"></div>
<div class="a" style="left:541px;top:644.5px;width:648px;height:14.5px;background:#e8e8e8;"></div>
<div class="a" style="left:729px;top:688.7px;width:226.5px;height:13.5px;background:#d6a8f4;border:1px solid #7a5a9a"></div>
<div class="a" style="left:729px;top:717.5px;width:226.5px;height:13.5px;background:#3d3d6e;border:1px solid #2a2a4a"></div>
<div class="a" style="left:729px;top:732.3px;width:226.5px;height:13px;background:#3a9ad0;border:1px solid #2a6a9a"></div>
<div class="a" style="left:541px;top:644px;width:648px;height:130.5px;overflow:hidden">
<div class="a" style="left:56.39999999999998px;top:3.0px;width:9px;height:9px;background:#fff;border:1px solid #a8a8a8"></div>
<div class="a" style="left:58.39999999999998px;top:7.0px;width:5px;height:1px;background:#555;"></div>
<div class="a" style="left:60.39999999999998px;top:5.0px;width:1px;height:5px;background:#555;"></div>
<div class="t" style="left:70.5px;top:1.30px;font-size:10.3px;color:#111;letter-spacing:0;transform:scaleX(0.8961);">OptionalHeaderSelector</div>
<div class="t" style="left:191px;top:1.30px;font-size:10.3px;color:#111;letter-spacing:0;transform:scaleX(0.9005);">{...}</div>
<div class="t" style="left:417.20000000000005px;top:1.30px;font-size:10.3px;color:#111;letter-spacing:0;transform:scaleX(0.8995);">0x00000120</div>
<div class="t" style="left:470px;width:40px;text-align:right;top:1.2999999999999998px;font-size:10.3px;color:#111;letter-spacing:-0.2px">240</div>
<div class="t" style="left:517px;top:1.30px;font-size:10.3px;color:#111;letter-spacing:0;transform:scaleX(0.9027);">anonymous case_union</div>
<div class="a" style="left:56.39999999999998px;top:17.480000000000018px;width:9px;height:9px;background:#fff;border:1px solid #a8a8a8"></div>
<div class="a" style="left:58.39999999999998px;top:21.480000000000018px;width:5px;height:1px;background:#555;"></div>
<div class="a" style="left:60.39999999999998px;top:19.480000000000018px;width:1px;height:5px;background:#555;"></div>
<div class="t" style="left:70.5px;top:15.78px;font-size:10.3px;color:#111;letter-spacing:0;transform:scaleX(0.9005);">sections</div>
<div class="t" style="left:191px;top:15.78px;font-size:10.3px;color:#111;letter-spacing:0;transform:scaleX(0.9005);">{...}</div>
<div class="t" style="left:417.20000000000005px;top:15.78px;font-size:10.3px;color:#111;letter-spacing:0;transform:scaleX(0.9005);">0x00000210</div>
<div class="t" style="left:470px;width:40px;text-align:right;top:15.780000000000019px;font-size:10.3px;color:#111;letter-spacing:-0.2px">320</div>
<div class="t" style="left:517px;top:15.78px;font-size:10.3px;color:#111;letter-spacing:0;transform:scaleX(0.8618);">IMAGE_SECTION_HEAD...</div>
<div class="a" style="left:30.399999999999977px;top:31.960000000000036px;width:9px;height:9px;background:#fff;border:1px solid #a8a8a8"></div>
<div class="a" style="left:32.39999999999998px;top:35.960000000000036px;width:5px;height:1px;background:#555;"></div>
<div class="t" style="left:47.799999999999955px;top:30.26px;font-size:10.3px;color:#111;letter-spacing:0;transform:scaleX(0.9060);">ExportDirectory</div>
<div class="t" style="left:191px;top:30.26px;font-size:10.3px;color:#111;letter-spacing:0;transform:scaleX(0.9005);">{...}</div>
<div class="t" style="left:417.20000000000005px;top:30.26px;font-size:10.3px;color:#111;letter-spacing:0;transform:scaleX(0.9005);">0x00355df0</div>
<div class="t" style="left:470px;width:40px;text-align:right;top:30.260000000000037px;font-size:10.3px;color:#111;letter-spacing:-0.2px">40</div>
<div class="t" style="left:517px;top:30.26px;font-size:10.3px;color:#111;letter-spacing:0;transform:scaleX(0.9005);">IMAGE_EXPORT_DIREC...</div>
<div class="a" style="left:35px;top:50.940000000000055px;width:20px;height:1px;background:#c8c8c8;"></div>
<div class="t" style="left:57.799999999999955px;top:44.74px;font-size:10.3px;color:#111;letter-spacing:0;transform:scaleX(0.8839);">Characteristics</div>
<div class="t" style="left:191px;top:44.74px;font-size:10.3px;color:#111;letter-spacing:0;transform:scaleX(0.9005);">0</div>
<div class="t" style="left:417.20000000000005px;top:44.74px;font-size:10.3px;color:#111;letter-spacing:0;transform:scaleX(0.9005);">0x00355df0</div>
<div class="t" style="left:470px;width:40px;text-align:right;top:44.74000000000005px;font-size:10.3px;color:#111;letter-spacing:-0.2px">4</div>
<div class="t" style="left:517px;top:44.74px;font-size:10.3px;color:#111;letter-spacing:0;transform:scaleX(0.9261);">unsigned long</div>
<div class="a" style="left:35px;top:65.41999999999996px;width:20px;height:1px;background:#c8c8c8;"></div>
<div class="t" style="left:57.799999999999955px;top:59.22px;font-size:10.3px;color:#111;letter-spacing:0;transform:scaleX(0.9005);">TimeDateStamp</div>
<div class="t" style="left:191px;top:59.22px;font-size:10.3px;color:#111;letter-spacing:0;transform:scaleX(0.8887);">3157356424</div>
<div class="t" style="left:417.20000000000005px;top:59.22px;font-size:10.3px;color:#111;letter-spacing:0;transform:scaleX(0.9005);">0x00355df4</div>
<div class="t" style="left:470px;width:40px;text-align:right;top:59.219999999999956px;font-size:10.3px;color:#111;letter-spacing:-0.2px">4</div>
<div class="t" style="left:517px;top:59.22px;font-size:10.3px;color:#111;letter-spacing:0;transform:scaleX(0.9261);">unsigned long</div>
<div class="a" style="left:35px;top:79.89999999999998px;width:20px;height:1px;background:#c8c8c8;"></div>
<div class="t" style="left:57.799999999999955px;top:73.70px;font-size:10.3px;color:#111;letter-spacing:0;transform:scaleX(0.9005);">MajorVersion</div>
<div class="t" style="left:191px;top:73.70px;font-size:10.3px;color:#c8b890;letter-spacing:0;transform:scaleX(0.9005);">0</div>
<div class="t" style="left:417.20000000000005px;top:73.70px;font-size:10.3px;color:#111;letter-spacing:0;transform:scaleX(0.9005);">0x00355df8</div>
<div class="t" style="left:470px;width:40px;text-align:right;top:73.69999999999997px;font-size:10.3px;color:#111;letter-spacing:-0.2px">2</div>
<div class="t" style="left:517px;top:73.70px;font-size:10.3px;color:#111;letter-spacing:0;transform:scaleX(0.9005);">unsigned short</div>
<div class="a" style="left:35px;top:94.38px;width:20px;height:1px;background:#c8c8c8;"></div>
<div class="t" style="left:57.799999999999955px;top:88.18px;font-size:10.3px;color:#111;letter-spacing:0;transform:scaleX(0.9005);">MinorVersion</div>
<div class="t" style="left:191px;top:88.18px;font-size:10.3px;color:#111;letter-spacing:0;transform:scaleX(0.9005);">0</div>
<div class="t" style="left:417.20000000000005px;top:88.18px;font-size:10.3px;color:#111;letter-spacing:0;transform:scaleX(0.9005);">0x00355dfa</div>
<div class="t" style="left:470px;width:40px;text-align:right;top:88.17999999999999px;font-size:10.3px;color:#111;letter-spacing:-0.2px">2</div>
<div class="t" style="left:517px;top:88.18px;font-size:10.3px;color:#111;letter-spacing:0;transform:scaleX(0.9005);">unsigned short</div>
<div class="a" style="left:44px;top:104.36000000000001px;width:9px;height:9px;background:#fff;border:1px solid #a8a8a8"></div>
<div class="a" style="left:46px;top:108.36000000000001px;width:5px;height:1px;background:#555;"></div>
<div class="a" style="left:48px;top:106.36000000000001px;width:1px;height:5px;background:#555;"></div>
<div class="t" style="left:57.799999999999955px;top:102.66px;font-size:10.3px;color:#111;letter-spacing:0;transform:scaleX(0.8808);">Name</div>
<div class="t" style="left:191px;top:102.66px;font-size:10.3px;color:#111;letter-spacing:0;transform:scaleX(0.9437);">{ NameRva=3501602; NameString=3501602-&gt;{ v...</div>
<div class="t" style="left:417.20000000000005px;top:102.66px;font-size:10.3px;color:#111;letter-spacing:0;transform:scaleX(0.9005);">0x00355dfc</div>
<div class="t" style="left:470px;width:40px;text-align:right;top:102.66000000000001px;font-size:10.3px;color:#111;letter-spacing:-0.2px">4</div>
<div class="t" style="left:517px;top:102.66px;font-size:10.3px;color:#111;letter-spacing:0;transform:scaleX(0.9005);">anonymous union</div>
<div class="a" style="left:35px;top:123.34000000000003px;width:20px;height:1px;background:#c8c8c8;"></div>
<div class="t" style="left:57.799999999999955px;top:117.14px;font-size:10.3px;color:#111;letter-spacing:0;transform:scaleX(0.9005);">OrdinalBase</div>
<div class="t" style="left:191px;top:117.14px;font-size:10.3px;color:#111;letter-spacing:0;transform:scaleX(0.9005);">1</div>
<div class="t" style="left:417.20000000000005px;top:117.14px;font-size:10.3px;color:#111;letter-spacing:0;transform:scaleX(0.9005);">0x00355e00</div>
<div class="t" style="left:470px;width:40px;text-align:right;top:117.14000000000003px;font-size:10.3px;color:#111;letter-spacing:-0.2px">4</div>
<div class="t" style="left:517px;top:117.14px;font-size:10.3px;color:#111;letter-spacing:0;transform:scaleX(0.9261);">unsigned long</div>
<div class="a" style="left:0px;top:14.8px;width:648px;height:1px;background:#f0f0f0;"></div>
<div class="a" style="left:0px;top:29.3px;width:648px;height:1px;background:#f0f0f0;"></div>
<div class="a" style="left:0px;top:43.8px;width:648px;height:1px;background:#f0f0f0;"></div>
<div class="a" style="left:0px;top:58.2px;width:648px;height:1px;background:#f0f0f0;"></div>
<div class="a" style="left:0px;top:72.7px;width:648px;height:1px;background:#f0f0f0;"></div>
<div class="a" style="left:0px;top:87.2px;width:648px;height:1px;background:#f0f0f0;"></div>
<div class="a" style="left:0px;top:101.7px;width:648px;height:1px;background:#f0f0f0;"></div>
<div class="a" style="left:0px;top:116.2px;width:648px;height:1px;background:#f0f0f0;"></div>
<div class="a" style="left:0px;top:130.6px;width:648px;height:1px;background:#f0f0f0;"></div>
<div class="a" style="left:48.5px;top:1px;width:1px;height:22px;background:#c8c8c8;"></div>
<div class="a" style="left:48.5px;top:22px;width:8px;height:1px;background:#c8c8c8;"></div>
<div class="a" style="left:48.5px;top:8px;width:8px;height:1px;background:#c8c8c8;"></div>
<div class="a" style="left:37px;top:44px;width:1px;height:80px;background:#c8c8c8;"></div>
</div>
<div class="a" style="left:549.5px;top:676.5px;width:9px;height:9px;background:#1f6fc8;border-radius:2px"></div>
<svg class="a" style="left:550px;top:677px" width="8" height="8"><path d="M1.5 4L3.4 6L6.8 2" stroke="#fff" stroke-width="1.1" fill="none"/></svg>
<div class="a" style="left:1189px;top:629px;width:10px;height:146px;background:#f2f2f2;"></div>
<div class="a" style="left:1190px;top:668.7px;width:7px;height:14px;background:#8a8a8a;"></div>
<div class="a" style="left:541px;top:774px;width:648px;height:12px;background:#f2f2f2;"></div>
<div class="a" style="left:557px;top:775.2px;width:573px;height:6px;background:#8a8a8a;"></div>
<div class="a" style="left:541px;top:786.8px;width:658px;height:19.5px;background:#f0f0f0;border-top:1px solid #dcdcdc"></div>
<svg class="a" style="left:544.5px;top:788.25px" width="16.4" height="16.4" viewBox="0 0 20 20"><path d="M4 2.5h11c-1.5 2-1.5 4 0 6s1.5 4 0 6H4c1.5-2 1.5-4 0-6s-1.5-4 0-6z" fill="#f7c548" stroke="#b8862a"/><path d="M6.5 6h5M6.5 9h5M6.5 12h5" stroke="#b8862a"/></svg>
<div class="t" style="left:562.7px;top:789.55px;font-size:10.8px;color:#111;letter-spacing:0;transform:scaleX(0.9123);">Macros</div>
<div class="a" style="left:600px;top:786.8px;width:99px;height:19.5px;background:#ffffff;"></div>
<svg class="a" style="left:602.5px;top:788.25px" width="16.4" height="16.4" viewBox="0 0 20 20"><rect x="1.5" y="1.5" width="8" height="8" rx="1.5" fill="#f7c548" stroke="#b8862a"/><rect x="10.5" y="1.5" width="8" height="8" rx="1.5" fill="#f7c548" stroke="#b8862a"/><rect x="1.5" y="10.5" width="8" height="8" rx="1.5" fill="#f7c548" stroke="#b8862a"/><rect x="10.5" y="10.5" width="8" height="8" rx="1.5" fill="#f7c548" stroke="#b8862a"/></svg>
<div class="t" style="left:621px;top:789.55px;font-size:10.8px;color:#111;letter-spacing:0;transform:scaleX(0.9481);">Structure Viewer</div>
<svg class="a" style="left:702.5px;top:788.25px" width="16.4" height="16.4" viewBox="0 0 20 20"><path d="M1.5 2.5h9v15h-9z" fill="#c8e0a0" stroke="#6a8a40"/><path d="M10 2.5h8.5v15H10z" fill="#f7e090" stroke="#8a7a50"/><path d="M3.5 7h5M3.5 10h5M12 7h5M12 10h5" stroke="#6a8a40"/></svg>
<div class="t" style="left:722px;top:789.55px;font-size:10.8px;color:#111;letter-spacing:0;transform:scaleX(0.9234);">File Comparison</div>
<svg class="a" style="left:802.5px;top:788.25px" width="16.4" height="16.4" viewBox="0 0 20 20"><path d="M2.5 2.5h10l4 4v11h-14z" fill="#3fb0c8" stroke="#1f6f8a"/><path d="M5 2.5v7l2-2 2 2v-7" fill="#f7c548" stroke="#b8862a" stroke-width="0.8"/><path d="M12 11l6 6" stroke="#1f6f8a" stroke-width="2"/></svg>
<div class="t" style="left:819.5px;top:789.55px;font-size:10.8px;color:#111;letter-spacing:0;transform:scaleX(0.9368);">Bookmarks</div>
<svg class="a" style="left:879.5px;top:788.25px" width="16.4" height="16.4" viewBox="0 0 20 20"><circle cx="5" cy="5" r="3.5" fill="#f7c548" stroke="#b8862a"/><circle cx="15" cy="5" r="3.5" fill="#3fb0c8" stroke="#1f6f8a"/><circle cx="5" cy="15" r="3.5" fill="#3fb0c8" stroke="#1f6f8a"/><circle cx="15" cy="15" r="3.5" fill="#f7c548" stroke="#b8862a"/><path d="M8 7l4 6M12 7l-4 6" stroke="#777" stroke-width="1.2"/></svg>
<div class="t" style="left:896.6px;top:789.55px;font-size:10.8px;color:#111;letter-spacing:0;transform:scaleX(0.8781);">NTFS Streams</div>
<div class="a" style="left:1px;top:806.3px;width:1199px;height:20px;background:#f0f0f0;border-top:1px solid #e0e0e0"></div>
<div class="t" style="left:2.5px;top:810.50px;font-size:10.8px;color:#111;letter-spacing:0;transform:scaleX(0.8809);">Ready</div>
<div class="a" style="left:707px;top:808px;width:1px;height:17px;background:#dcdcdc;"></div>
<div class="a" style="left:825px;top:808px;width:1px;height:17px;background:#dcdcdc;"></div>
<div class="a" style="left:1005px;top:808px;width:1px;height:17px;background:#dcdcdc;"></div>
<div class="a" style="left:1139.5px;top:808px;width:1px;height:17px;background:#dcdcdc;"></div>
<div class="a" style="left:1168px;top:808px;width:1px;height:17px;background:#dcdcdc;"></div>
<div class="t" style="left:711.4px;top:810.50px;font-size:10.8px;color:#111;letter-spacing:0;transform:scaleX(0.8914);">Offset: 0x00000158 (344)</div>
<div class="t" style="left:829px;top:810.50px;font-size:10.8px;color:#111;letter-spacing:0;transform:scaleX(0.9033);">Size: 0x004cb088 (5 025 928): 4,79 MB</div>
<div class="t" style="left:1009.2px;top:810.50px;font-size:10.8px;color:#111;letter-spacing:0;transform:scaleX(0.9323);">Hex bytes, 16, Default ANSI</div>
<div class="t" style="left:1141.2px;top:810.50px;font-size:10.8px;color:#111;letter-spacing:0;transform:scaleX(1.0597);">OVR</div></body></html>
